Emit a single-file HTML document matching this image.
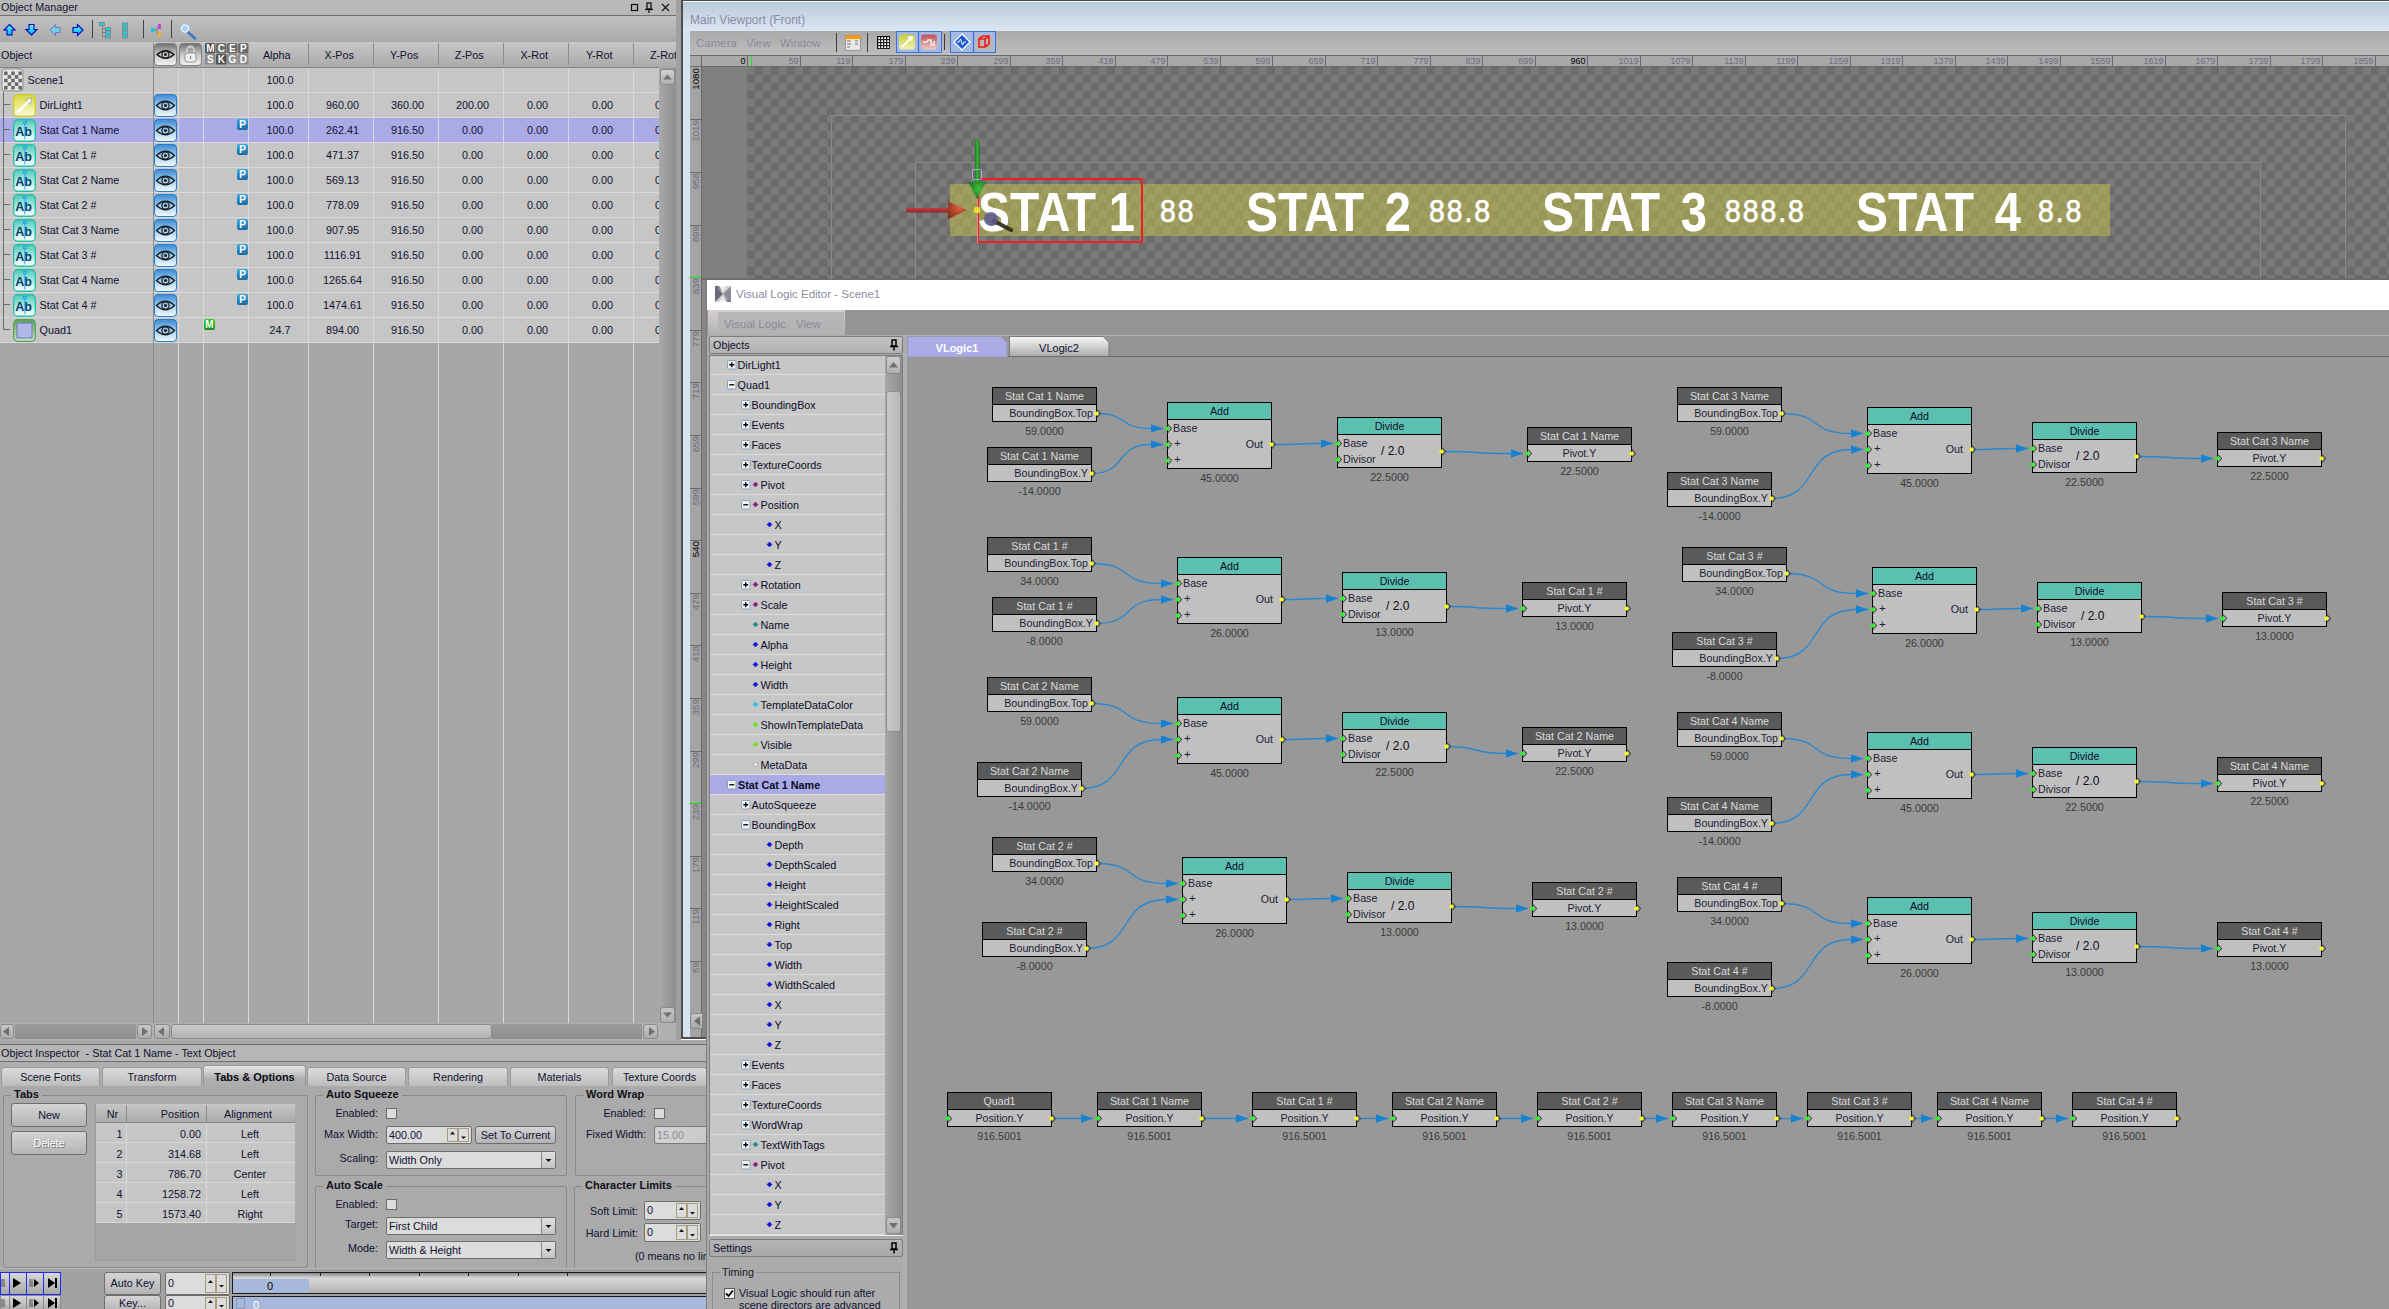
<!DOCTYPE html><html><head><meta charset="utf-8"><style>html,body{margin:0;padding:0;width:2389px;height:1309px;overflow:hidden;background:#a7a7a7;font-family:"Liberation Sans",sans-serif}</style></head><body><div style="position:relative;width:2389px;height:1309px;overflow:hidden"><div style="position:absolute;left:0px;top:0px;width:676px;height:1040px;background:#a7a7a7"></div><div style="position:absolute;left:0px;top:0px;width:676px;height:15px;background:#b8b8b8"></div><div style="position:absolute;left:0px;top:15px;width:676px;height:1px;background:#6f6f6f"></div><div style="position:absolute;left:1px;top:1.86px;font-size:10.8px;line-height:10.8px;color:#141432;font-weight:normal;white-space:pre;">Object Manager</div><svg style="position:absolute;left:628px;top:1px" width="46" height="13" viewBox="0 0 46 13"><rect x="3.5" y="3.5" width="6" height="6" fill="none" stroke="#111" stroke-width="1.2"/><rect x="19" y="2" width="4" height="6" fill="none" stroke="#111" stroke-width="1.3"/><line x1="17" y1="8.5" x2="25" y2="8.5" stroke="#111" stroke-width="1.3"/><line x1="21" y1="8.5" x2="21" y2="12" stroke="#111" stroke-width="1.3"/><path d="M34 3 L41 10 M41 3 L34 10" stroke="#111" stroke-width="1.1"/></svg><div style="position:absolute;left:0px;top:16px;width:676px;height:26px;background:linear-gradient(#c2c2c2,#a9a9a9)"></div><svg style="position:absolute;left:0px;top:16px" width="200" height="26" viewBox="0 0 200 26"><defs><linearGradient id="ab1" x1="0" y1="0" x2="0" y2="1"><stop offset="0" stop-color="#60f0ff"/><stop offset="1" stop-color="#00b8f8"/></linearGradient></defs><path d="M9.5 8.5 L15 14 L12 14 L12 19 L7 19 L7 14 L4 14 Z" fill="url(#ab1)" stroke="#0000c0" stroke-width="1.1"/><path d="M31.5 19 L37 13.5 L34 13.5 L34 8.5 L29 8.5 L29 13.5 L26 13.5 Z" fill="url(#ab1)" stroke="#0000c0" stroke-width="1.1"/><path d="M50 14 L55.5 8.5 L55.5 11.5 L60 11.5 L60 16.5 L55.5 16.5 L55.5 19.5 Z" fill="#70d0e0" stroke="#6a6ad0" stroke-width="0.9"/><path d="M83 14 L77.5 8.5 L77.5 11.5 L73 11.5 L73 16.5 L77.5 16.5 L77.5 19.5 Z" fill="url(#ab1)" stroke="#0000c0" stroke-width="1.1"/><line x1="92.5" y1="4" x2="92.5" y2="22" stroke="#444" stroke-width="1"/><path d="M102.5 8 V21 M102.5 13 H106 M102.5 16.5 H106 M102.5 20.5 H106" stroke="#777" stroke-width="0.8" fill="none"/><rect x="99.5" y="6.5" width="5" height="3" fill="#10d8f0" stroke="#808080" stroke-width="0.8"/><rect x="105.5" y="11.5" width="5" height="3" fill="#10d8f0" stroke="#808080" stroke-width="0.8"/><rect x="105.5" y="15.0" width="5" height="3" fill="#10d8f0" stroke="#808080" stroke-width="0.8"/><rect x="105.5" y="19.0" width="5" height="3" fill="#10d8f0" stroke="#808080" stroke-width="0.8"/><rect x="122.5" y="7.0" width="5" height="3" fill="#10d8f0" stroke="#808080" stroke-width="0.8"/><rect x="122.5" y="11.0" width="5" height="3" fill="#10d8f0" stroke="#808080" stroke-width="0.8"/><rect x="122.5" y="15.0" width="5" height="3" fill="#10d8f0" stroke="#808080" stroke-width="0.8"/><rect x="122.5" y="19.0" width="5" height="3" fill="#10d8f0" stroke="#808080" stroke-width="0.8"/><line x1="143.5" y1="4" x2="143.5" y2="22" stroke="#444" stroke-width="1"/><rect x="151" y="12" width="4" height="4" fill="#2ac0d8"/><rect x="158" y="8" width="3" height="5" fill="#c040e0"/><rect x="158" y="15.5" width="3" height="5" fill="#f0b020"/><path d="M155 14 H158 M157 10.5 V18" stroke="#777" stroke-width="0.8"/><line x1="171.5" y1="4" x2="171.5" y2="22" stroke="#444" stroke-width="1"/><line x1="188" y1="16" x2="195" y2="22.5" stroke="#3a78c8" stroke-width="2.4" stroke-linecap="round"/><circle cx="185" cy="12.5" r="3.6" fill="#a8d0ff" stroke="#e8f4ff" stroke-width="1.4"/></svg><div style="position:absolute;left:0px;top:42px;width:676px;height:25px;background:linear-gradient(#c7c7c7,#aaaaaa)"></div><div style="position:absolute;left:0px;top:67px;width:659px;height:1px;background:#858585"></div><div style="position:absolute;left:1px;top:49.86px;font-size:10.8px;line-height:10.8px;color:#101030;font-weight:normal;white-space:pre;">Object</div><svg style="position:absolute;left:154px;top:43px" width="96" height="24" viewBox="0 0 96 24"><defs><linearGradient id="gg" x1="0" y1="0" x2="0" y2="1"><stop offset="0" stop-color="#6e6e6e"/><stop offset="0.5" stop-color="#c8c8c8"/><stop offset="1" stop-color="#f2f2f2"/></linearGradient><linearGradient id="gl" x1="0" y1="0" x2="0" y2="1"><stop offset="0" stop-color="#5a5a5a"/><stop offset="1" stop-color="#d0d0d0"/></linearGradient><linearGradient id="gk" x1="0" y1="0" x2="0" y2="1"><stop offset="0" stop-color="#9a9a9a"/><stop offset="1" stop-color="#5a5a5a"/></linearGradient></defs><rect x="0.5" y="0.5" width="22" height="22" rx="3.5" fill="url(#gg)" stroke="#808080"/><path d="M3 11.5 Q11.5 4 20 11.5 Q11.5 19 3 11.5 Z" fill="none" stroke="#151515" stroke-width="1.4"/><circle cx="11.5" cy="11.5" r="3.5" fill="none" stroke="#222" stroke-width="1.3"/><circle cx="11.5" cy="11.5" r="1.5" fill="#222"/><rect x="25.5" y="0.5" width="22" height="22" rx="3.5" fill="url(#gg)" stroke="#808080"/><path d="M33 10 V7 A3.5 3.5 0 0 1 40 7 V10" fill="none" stroke="#f0f0f0" stroke-width="1.8"/><path d="M33 10 V7 A3.5 3.5 0 0 1 40 7 V10" fill="none" stroke="#777" stroke-width="0.5"/><rect x="31" y="10" width="11" height="9" rx="2.5" fill="#eeeeee" stroke="#808080" stroke-width="0.8"/><rect x="36" y="13" width="1.2" height="3" fill="#888"/><rect x="51" y="0" width="10.5" height="10.5" rx="1.5" fill="#4e4e4e"/><text x="56.3" y="9.2" text-anchor="middle" font-family="Liberation Sans" font-weight="bold" font-size="10" fill="#fff">M</text><rect x="62" y="0" width="10.5" height="10.5" rx="1.5" fill="#6a6a6a"/><text x="67.3" y="9.2" text-anchor="middle" font-family="Liberation Sans" font-weight="bold" font-size="10" fill="#fff">C</text><rect x="73" y="0" width="10.5" height="10.5" rx="1.5" fill="#6a6a6a"/><text x="78.3" y="9.2" text-anchor="middle" font-family="Liberation Sans" font-weight="bold" font-size="10" fill="#fff">E</text><rect x="84" y="0" width="10.5" height="10.5" rx="1.5" fill="#6a6a6a"/><text x="89.3" y="9.2" text-anchor="middle" font-family="Liberation Sans" font-weight="bold" font-size="10" fill="#fff">P</text><rect x="51" y="11" width="10.5" height="10.5" rx="1.5" fill="#8c8c8c"/><text x="56.3" y="20.2" text-anchor="middle" font-family="Liberation Sans" font-weight="bold" font-size="10" fill="#fff">S</text><rect x="62" y="11" width="10.5" height="10.5" rx="1.5" fill="#4e4e4e"/><text x="67.3" y="20.2" text-anchor="middle" font-family="Liberation Sans" font-weight="bold" font-size="10" fill="#fff">K</text><rect x="73" y="11" width="10.5" height="10.5" rx="1.5" fill="#8c8c8c"/><text x="78.3" y="20.2" text-anchor="middle" font-family="Liberation Sans" font-weight="bold" font-size="10" fill="#fff">G</text><rect x="84" y="11" width="10.5" height="10.5" rx="1.5" fill="#8c8c8c"/><text x="89.3" y="20.2" text-anchor="middle" font-family="Liberation Sans" font-weight="bold" font-size="10" fill="#fff">D</text></svg><div style="position:absolute;left:236.70px;top:49.86px;width:80px;text-align:center;font-size:10.8px;line-height:10.8px;color:#101030;font-weight:normal;white-space:pre;">Alpha</div><div style="position:absolute;left:299.20px;top:49.86px;width:80px;text-align:center;font-size:10.8px;line-height:10.8px;color:#101030;font-weight:normal;white-space:pre;">X-Pos</div><div style="position:absolute;left:364.20px;top:49.86px;width:80px;text-align:center;font-size:10.8px;line-height:10.8px;color:#101030;font-weight:normal;white-space:pre;">Y-Pos</div><div style="position:absolute;left:429.20px;top:49.86px;width:80px;text-align:center;font-size:10.8px;line-height:10.8px;color:#101030;font-weight:normal;white-space:pre;">Z-Pos</div><div style="position:absolute;left:494.20px;top:49.86px;width:80px;text-align:center;font-size:10.8px;line-height:10.8px;color:#101030;font-weight:normal;white-space:pre;">X-Rot</div><div style="position:absolute;left:559.20px;top:49.86px;width:80px;text-align:center;font-size:10.8px;line-height:10.8px;color:#101030;font-weight:normal;white-space:pre;">Y-Rot</div><div style="position:absolute;left:623.50px;top:49.86px;width:80px;text-align:center;font-size:10.8px;line-height:10.8px;color:#101030;font-weight:normal;white-space:pre;">Z-Rot</div><div style="position:absolute;left:308px;top:43px;width:1px;height:22px;background:#8c8c8c"></div><div style="position:absolute;left:373px;top:43px;width:1px;height:22px;background:#8c8c8c"></div><div style="position:absolute;left:438px;top:43px;width:1px;height:22px;background:#8c8c8c"></div><div style="position:absolute;left:503px;top:43px;width:1px;height:22px;background:#8c8c8c"></div><div style="position:absolute;left:568px;top:43px;width:1px;height:22px;background:#8c8c8c"></div><div style="position:absolute;left:633px;top:43px;width:1px;height:22px;background:#8c8c8c"></div><div style="position:absolute;left:0px;top:68px;width:659px;height:24px;background:#c6c6c6"></div><div style="position:absolute;left:0px;top:92px;width:659px;height:1px;background:#d9d9d9"></div><div style="position:absolute;left:0px;top:93px;width:659px;height:24px;background:#c6c6c6"></div><div style="position:absolute;left:0px;top:117px;width:659px;height:1px;background:#d9d9d9"></div><div style="position:absolute;left:0px;top:118px;width:659px;height:24px;background:#aaaae7"></div><div style="position:absolute;left:0px;top:142px;width:659px;height:1px;background:#d9d9d9"></div><div style="position:absolute;left:0px;top:143px;width:659px;height:24px;background:#c6c6c6"></div><div style="position:absolute;left:0px;top:167px;width:659px;height:1px;background:#d9d9d9"></div><div style="position:absolute;left:0px;top:168px;width:659px;height:24px;background:#c6c6c6"></div><div style="position:absolute;left:0px;top:192px;width:659px;height:1px;background:#d9d9d9"></div><div style="position:absolute;left:0px;top:193px;width:659px;height:24px;background:#c6c6c6"></div><div style="position:absolute;left:0px;top:217px;width:659px;height:1px;background:#d9d9d9"></div><div style="position:absolute;left:0px;top:218px;width:659px;height:24px;background:#c6c6c6"></div><div style="position:absolute;left:0px;top:242px;width:659px;height:1px;background:#d9d9d9"></div><div style="position:absolute;left:0px;top:243px;width:659px;height:24px;background:#c6c6c6"></div><div style="position:absolute;left:0px;top:267px;width:659px;height:1px;background:#d9d9d9"></div><div style="position:absolute;left:0px;top:268px;width:659px;height:24px;background:#c6c6c6"></div><div style="position:absolute;left:0px;top:292px;width:659px;height:1px;background:#d9d9d9"></div><div style="position:absolute;left:0px;top:293px;width:659px;height:24px;background:#c6c6c6"></div><div style="position:absolute;left:0px;top:317px;width:659px;height:1px;background:#d9d9d9"></div><div style="position:absolute;left:0px;top:318px;width:659px;height:24px;background:#c6c6c6"></div><div style="position:absolute;left:0px;top:342px;width:659px;height:1px;background:#d9d9d9"></div><div style="position:absolute;left:153px;top:43px;width:1px;height:980px;background:#8a8a8a"></div><div style="position:absolute;left:178px;top:68px;width:1px;height:955px;background:#d9d9d9"></div><div style="position:absolute;left:203px;top:68px;width:1px;height:955px;background:#d9d9d9"></div><div style="position:absolute;left:248px;top:68px;width:1px;height:955px;background:#d9d9d9"></div><div style="position:absolute;left:308px;top:68px;width:1px;height:955px;background:#d9d9d9"></div><div style="position:absolute;left:373px;top:68px;width:1px;height:955px;background:#d9d9d9"></div><div style="position:absolute;left:438px;top:68px;width:1px;height:955px;background:#d9d9d9"></div><div style="position:absolute;left:503px;top:68px;width:1px;height:955px;background:#d9d9d9"></div><div style="position:absolute;left:568px;top:68px;width:1px;height:955px;background:#d9d9d9"></div><div style="position:absolute;left:633px;top:68px;width:1px;height:955px;background:#d9d9d9"></div><div style="position:absolute;left:3px;top:92px;width:1px;height:238px;background:#6a6a6a"></div><div style="position:absolute;left:4px;top:104px;width:6px;height:1px;background:#6a6a6a"></div><div style="position:absolute;left:4px;top:129px;width:6px;height:1px;background:#6a6a6a"></div><div style="position:absolute;left:4px;top:154px;width:6px;height:1px;background:#6a6a6a"></div><div style="position:absolute;left:4px;top:179px;width:6px;height:1px;background:#6a6a6a"></div><div style="position:absolute;left:4px;top:204px;width:6px;height:1px;background:#6a6a6a"></div><div style="position:absolute;left:4px;top:229px;width:6px;height:1px;background:#6a6a6a"></div><div style="position:absolute;left:4px;top:254px;width:6px;height:1px;background:#6a6a6a"></div><div style="position:absolute;left:4px;top:279px;width:6px;height:1px;background:#6a6a6a"></div><div style="position:absolute;left:4px;top:304px;width:6px;height:1px;background:#6a6a6a"></div><div style="position:absolute;left:4px;top:329px;width:6px;height:1px;background:#6a6a6a"></div><svg style="position:absolute;left:1px;top:68px" width="23" height="24" viewBox="0 0 23 24"><rect x="1" y="1" width="21" height="22" rx="3" fill="#e8e8e8" stroke="#8a8a8a"/><rect x="3.0" y="3.5" width="3.6" height="3.6" fill="#6a6a6a"/><rect x="3.0" y="10.7" width="3.6" height="3.6" fill="#6a6a6a"/><rect x="3.0" y="17.9" width="3.6" height="3.6" fill="#6a6a6a"/><rect x="6.6" y="7.1" width="3.6" height="3.6" fill="#6a6a6a"/><rect x="6.6" y="14.3" width="3.6" height="3.6" fill="#6a6a6a"/><rect x="10.2" y="3.5" width="3.6" height="3.6" fill="#6a6a6a"/><rect x="10.2" y="10.7" width="3.6" height="3.6" fill="#6a6a6a"/><rect x="10.2" y="17.9" width="3.6" height="3.6" fill="#6a6a6a"/><rect x="13.8" y="7.1" width="3.6" height="3.6" fill="#6a6a6a"/><rect x="13.8" y="14.3" width="3.6" height="3.6" fill="#6a6a6a"/><rect x="17.4" y="3.5" width="3.6" height="3.6" fill="#6a6a6a"/><rect x="17.4" y="10.7" width="3.6" height="3.6" fill="#6a6a6a"/><rect x="17.4" y="17.9" width="3.6" height="3.6" fill="#6a6a6a"/></svg><div style="position:absolute;left:27.5px;top:75.36px;font-size:10.8px;line-height:10.8px;color:#101030;font-weight:normal;white-space:pre;">Scene1</div><div style="position:absolute;left:240.00px;top:75.36px;width:80px;text-align:center;font-size:10.8px;line-height:10.8px;color:#101030;font-weight:normal;white-space:pre;">100.0</div><svg style="position:absolute;left:13px;top:94px" width="23" height="23" viewBox="0 0 23 23"><defs><linearGradient id="lg" x1="0" y1="0" x2="0" y2="1"><stop offset="0" stop-color="#d9d93a"/><stop offset="1" stop-color="#fbfbe0"/></linearGradient></defs><rect x="0.7" y="0.7" width="21.6" height="21.6" rx="4" fill="url(#lg)" stroke="#cfd02a" stroke-width="1.4"/><path d="M4 19 L15 8 L12.5 5.5 L19 4 L17.5 10.5 L15 8" fill="#fff" stroke="#999" stroke-width="0.8"/><line x1="4" y1="19" x2="15" y2="8" stroke="#fff" stroke-width="2.6"/></svg><div style="position:absolute;left:39.5px;top:100.36px;font-size:10.8px;line-height:10.8px;color:#101030;font-weight:normal;white-space:pre;">DirLight1</div><svg style="position:absolute;left:154px;top:94px" width="23" height="23" viewBox="0 0 23 23"><defs><linearGradient id="gb" x1="0" y1="0" x2="0" y2="1"><stop offset="0" stop-color="#3a8ad2"/><stop offset="0.55" stop-color="#a8d4f4"/><stop offset="1" stop-color="#f4faff"/></linearGradient></defs><rect x="0.5" y="0.5" width="22" height="22" rx="3.5" fill="url(#gb)" stroke="#2b7cc9"/><path d="M2.5 11.5 Q11.5 3 20.5 11.5 Q11.5 20 2.5 11.5 Z" fill="none" stroke="#1a1a1a" stroke-width="1.4"/><circle cx="11.5" cy="11.5" r="3.6" fill="none" stroke="#222" stroke-width="1.3"/><circle cx="11.5" cy="11.5" r="1.6" fill="#222"/></svg><div style="position:absolute;left:240.00px;top:100.36px;width:80px;text-align:center;font-size:10.8px;line-height:10.8px;color:#101030;font-weight:normal;white-space:pre;">100.0</div><div style="position:absolute;left:302.50px;top:100.36px;width:80px;text-align:center;font-size:10.8px;line-height:10.8px;color:#101030;font-weight:normal;white-space:pre;">960.00</div><div style="position:absolute;left:367.50px;top:100.36px;width:80px;text-align:center;font-size:10.8px;line-height:10.8px;color:#101030;font-weight:normal;white-space:pre;">360.00</div><div style="position:absolute;left:432.50px;top:100.36px;width:80px;text-align:center;font-size:10.8px;line-height:10.8px;color:#101030;font-weight:normal;white-space:pre;">200.00</div><div style="position:absolute;left:497.50px;top:100.36px;width:80px;text-align:center;font-size:10.8px;line-height:10.8px;color:#101030;font-weight:normal;white-space:pre;">0.00</div><div style="position:absolute;left:562.50px;top:100.36px;width:80px;text-align:center;font-size:10.8px;line-height:10.8px;color:#101030;font-weight:normal;white-space:pre;">0.00</div><div style="position:absolute;left:625.50px;top:100.36px;width:80px;text-align:center;font-size:10.8px;line-height:10.8px;color:#101030;font-weight:normal;white-space:pre;">0.00</div><svg style="position:absolute;left:13px;top:119px" width="23" height="23" viewBox="0 0 23 23"><defs><linearGradient id="gt13119" x1="0" y1="0" x2="0" y2="1"><stop offset="0" stop-color="#4cc9b8"/><stop offset="0.6" stop-color="#bdeee6"/><stop offset="1" stop-color="#ffffff"/></linearGradient></defs><rect x="0.7" y="0.7" width="21.6" height="21.6" rx="4" fill="url(#gt13119)" stroke="#22c2aa" stroke-width="1.4"/><text x="2.3" y="17" font-family="Liberation Sans" font-weight="bold" font-size="12.5" fill="#0b3e66">Ab</text><rect x="10.3" y="2.5" width="3" height="2" fill="none" stroke="#1aa0ff" stroke-width="0.9"/><line x1="11.8" y1="4.5" x2="11.8" y2="20.5" stroke="#1aa0ff" stroke-width="0.9"/></svg><div style="position:absolute;left:39.5px;top:125.36px;font-size:10.8px;line-height:10.8px;color:#101030;font-weight:normal;white-space:pre;">Stat Cat 1 Name</div><svg style="position:absolute;left:154px;top:119px" width="23" height="23" viewBox="0 0 23 23"><defs><linearGradient id="gb" x1="0" y1="0" x2="0" y2="1"><stop offset="0" stop-color="#3a8ad2"/><stop offset="0.55" stop-color="#a8d4f4"/><stop offset="1" stop-color="#f4faff"/></linearGradient></defs><rect x="0.5" y="0.5" width="22" height="22" rx="3.5" fill="url(#gb)" stroke="#2b7cc9"/><path d="M2.5 11.5 Q11.5 3 20.5 11.5 Q11.5 20 2.5 11.5 Z" fill="none" stroke="#1a1a1a" stroke-width="1.4"/><circle cx="11.5" cy="11.5" r="3.6" fill="none" stroke="#222" stroke-width="1.3"/><circle cx="11.5" cy="11.5" r="1.6" fill="#222"/></svg><svg style="position:absolute;left:237px;top:119px" width="11" height="11" viewBox="0 0 11 11"><defs><linearGradient id="bd237119" x1="0" y1="0" x2="0" y2="1"><stop offset="0" stop-color="#3aa8e0"/><stop offset="1" stop-color="#1a6aa0"/></linearGradient></defs><rect x="0" y="0" width="11" height="11" rx="2" fill="url(#bd237119)"/><text x="5.5" y="9.2" text-anchor="middle" font-family="Liberation Sans" font-weight="bold" font-size="10" fill="#fff">P</text></svg><div style="position:absolute;left:240.00px;top:125.36px;width:80px;text-align:center;font-size:10.8px;line-height:10.8px;color:#101030;font-weight:normal;white-space:pre;">100.0</div><div style="position:absolute;left:302.50px;top:125.36px;width:80px;text-align:center;font-size:10.8px;line-height:10.8px;color:#101030;font-weight:normal;white-space:pre;">262.41</div><div style="position:absolute;left:367.50px;top:125.36px;width:80px;text-align:center;font-size:10.8px;line-height:10.8px;color:#101030;font-weight:normal;white-space:pre;">916.50</div><div style="position:absolute;left:432.50px;top:125.36px;width:80px;text-align:center;font-size:10.8px;line-height:10.8px;color:#101030;font-weight:normal;white-space:pre;">0.00</div><div style="position:absolute;left:497.50px;top:125.36px;width:80px;text-align:center;font-size:10.8px;line-height:10.8px;color:#101030;font-weight:normal;white-space:pre;">0.00</div><div style="position:absolute;left:562.50px;top:125.36px;width:80px;text-align:center;font-size:10.8px;line-height:10.8px;color:#101030;font-weight:normal;white-space:pre;">0.00</div><div style="position:absolute;left:625.50px;top:125.36px;width:80px;text-align:center;font-size:10.8px;line-height:10.8px;color:#101030;font-weight:normal;white-space:pre;">0.00</div><svg style="position:absolute;left:13px;top:144px" width="23" height="23" viewBox="0 0 23 23"><defs><linearGradient id="gt13144" x1="0" y1="0" x2="0" y2="1"><stop offset="0" stop-color="#4cc9b8"/><stop offset="0.6" stop-color="#bdeee6"/><stop offset="1" stop-color="#ffffff"/></linearGradient></defs><rect x="0.7" y="0.7" width="21.6" height="21.6" rx="4" fill="url(#gt13144)" stroke="#22c2aa" stroke-width="1.4"/><text x="2.3" y="17" font-family="Liberation Sans" font-weight="bold" font-size="12.5" fill="#0b3e66">Ab</text><rect x="10.3" y="2.5" width="3" height="2" fill="none" stroke="#1aa0ff" stroke-width="0.9"/><line x1="11.8" y1="4.5" x2="11.8" y2="20.5" stroke="#1aa0ff" stroke-width="0.9"/></svg><div style="position:absolute;left:39.5px;top:150.36px;font-size:10.8px;line-height:10.8px;color:#101030;font-weight:normal;white-space:pre;">Stat Cat 1 #</div><svg style="position:absolute;left:154px;top:144px" width="23" height="23" viewBox="0 0 23 23"><defs><linearGradient id="gb" x1="0" y1="0" x2="0" y2="1"><stop offset="0" stop-color="#3a8ad2"/><stop offset="0.55" stop-color="#a8d4f4"/><stop offset="1" stop-color="#f4faff"/></linearGradient></defs><rect x="0.5" y="0.5" width="22" height="22" rx="3.5" fill="url(#gb)" stroke="#2b7cc9"/><path d="M2.5 11.5 Q11.5 3 20.5 11.5 Q11.5 20 2.5 11.5 Z" fill="none" stroke="#1a1a1a" stroke-width="1.4"/><circle cx="11.5" cy="11.5" r="3.6" fill="none" stroke="#222" stroke-width="1.3"/><circle cx="11.5" cy="11.5" r="1.6" fill="#222"/></svg><svg style="position:absolute;left:237px;top:144px" width="11" height="11" viewBox="0 0 11 11"><defs><linearGradient id="bd237144" x1="0" y1="0" x2="0" y2="1"><stop offset="0" stop-color="#3aa8e0"/><stop offset="1" stop-color="#1a6aa0"/></linearGradient></defs><rect x="0" y="0" width="11" height="11" rx="2" fill="url(#bd237144)"/><text x="5.5" y="9.2" text-anchor="middle" font-family="Liberation Sans" font-weight="bold" font-size="10" fill="#fff">P</text></svg><div style="position:absolute;left:240.00px;top:150.36px;width:80px;text-align:center;font-size:10.8px;line-height:10.8px;color:#101030;font-weight:normal;white-space:pre;">100.0</div><div style="position:absolute;left:302.50px;top:150.36px;width:80px;text-align:center;font-size:10.8px;line-height:10.8px;color:#101030;font-weight:normal;white-space:pre;">471.37</div><div style="position:absolute;left:367.50px;top:150.36px;width:80px;text-align:center;font-size:10.8px;line-height:10.8px;color:#101030;font-weight:normal;white-space:pre;">916.50</div><div style="position:absolute;left:432.50px;top:150.36px;width:80px;text-align:center;font-size:10.8px;line-height:10.8px;color:#101030;font-weight:normal;white-space:pre;">0.00</div><div style="position:absolute;left:497.50px;top:150.36px;width:80px;text-align:center;font-size:10.8px;line-height:10.8px;color:#101030;font-weight:normal;white-space:pre;">0.00</div><div style="position:absolute;left:562.50px;top:150.36px;width:80px;text-align:center;font-size:10.8px;line-height:10.8px;color:#101030;font-weight:normal;white-space:pre;">0.00</div><div style="position:absolute;left:625.50px;top:150.36px;width:80px;text-align:center;font-size:10.8px;line-height:10.8px;color:#101030;font-weight:normal;white-space:pre;">0.00</div><svg style="position:absolute;left:13px;top:169px" width="23" height="23" viewBox="0 0 23 23"><defs><linearGradient id="gt13169" x1="0" y1="0" x2="0" y2="1"><stop offset="0" stop-color="#4cc9b8"/><stop offset="0.6" stop-color="#bdeee6"/><stop offset="1" stop-color="#ffffff"/></linearGradient></defs><rect x="0.7" y="0.7" width="21.6" height="21.6" rx="4" fill="url(#gt13169)" stroke="#22c2aa" stroke-width="1.4"/><text x="2.3" y="17" font-family="Liberation Sans" font-weight="bold" font-size="12.5" fill="#0b3e66">Ab</text><rect x="10.3" y="2.5" width="3" height="2" fill="none" stroke="#1aa0ff" stroke-width="0.9"/><line x1="11.8" y1="4.5" x2="11.8" y2="20.5" stroke="#1aa0ff" stroke-width="0.9"/></svg><div style="position:absolute;left:39.5px;top:175.36px;font-size:10.8px;line-height:10.8px;color:#101030;font-weight:normal;white-space:pre;">Stat Cat 2 Name</div><svg style="position:absolute;left:154px;top:169px" width="23" height="23" viewBox="0 0 23 23"><defs><linearGradient id="gb" x1="0" y1="0" x2="0" y2="1"><stop offset="0" stop-color="#3a8ad2"/><stop offset="0.55" stop-color="#a8d4f4"/><stop offset="1" stop-color="#f4faff"/></linearGradient></defs><rect x="0.5" y="0.5" width="22" height="22" rx="3.5" fill="url(#gb)" stroke="#2b7cc9"/><path d="M2.5 11.5 Q11.5 3 20.5 11.5 Q11.5 20 2.5 11.5 Z" fill="none" stroke="#1a1a1a" stroke-width="1.4"/><circle cx="11.5" cy="11.5" r="3.6" fill="none" stroke="#222" stroke-width="1.3"/><circle cx="11.5" cy="11.5" r="1.6" fill="#222"/></svg><svg style="position:absolute;left:237px;top:169px" width="11" height="11" viewBox="0 0 11 11"><defs><linearGradient id="bd237169" x1="0" y1="0" x2="0" y2="1"><stop offset="0" stop-color="#3aa8e0"/><stop offset="1" stop-color="#1a6aa0"/></linearGradient></defs><rect x="0" y="0" width="11" height="11" rx="2" fill="url(#bd237169)"/><text x="5.5" y="9.2" text-anchor="middle" font-family="Liberation Sans" font-weight="bold" font-size="10" fill="#fff">P</text></svg><div style="position:absolute;left:240.00px;top:175.36px;width:80px;text-align:center;font-size:10.8px;line-height:10.8px;color:#101030;font-weight:normal;white-space:pre;">100.0</div><div style="position:absolute;left:302.50px;top:175.36px;width:80px;text-align:center;font-size:10.8px;line-height:10.8px;color:#101030;font-weight:normal;white-space:pre;">569.13</div><div style="position:absolute;left:367.50px;top:175.36px;width:80px;text-align:center;font-size:10.8px;line-height:10.8px;color:#101030;font-weight:normal;white-space:pre;">916.50</div><div style="position:absolute;left:432.50px;top:175.36px;width:80px;text-align:center;font-size:10.8px;line-height:10.8px;color:#101030;font-weight:normal;white-space:pre;">0.00</div><div style="position:absolute;left:497.50px;top:175.36px;width:80px;text-align:center;font-size:10.8px;line-height:10.8px;color:#101030;font-weight:normal;white-space:pre;">0.00</div><div style="position:absolute;left:562.50px;top:175.36px;width:80px;text-align:center;font-size:10.8px;line-height:10.8px;color:#101030;font-weight:normal;white-space:pre;">0.00</div><div style="position:absolute;left:625.50px;top:175.36px;width:80px;text-align:center;font-size:10.8px;line-height:10.8px;color:#101030;font-weight:normal;white-space:pre;">0.00</div><svg style="position:absolute;left:13px;top:194px" width="23" height="23" viewBox="0 0 23 23"><defs><linearGradient id="gt13194" x1="0" y1="0" x2="0" y2="1"><stop offset="0" stop-color="#4cc9b8"/><stop offset="0.6" stop-color="#bdeee6"/><stop offset="1" stop-color="#ffffff"/></linearGradient></defs><rect x="0.7" y="0.7" width="21.6" height="21.6" rx="4" fill="url(#gt13194)" stroke="#22c2aa" stroke-width="1.4"/><text x="2.3" y="17" font-family="Liberation Sans" font-weight="bold" font-size="12.5" fill="#0b3e66">Ab</text><rect x="10.3" y="2.5" width="3" height="2" fill="none" stroke="#1aa0ff" stroke-width="0.9"/><line x1="11.8" y1="4.5" x2="11.8" y2="20.5" stroke="#1aa0ff" stroke-width="0.9"/></svg><div style="position:absolute;left:39.5px;top:200.36px;font-size:10.8px;line-height:10.8px;color:#101030;font-weight:normal;white-space:pre;">Stat Cat 2 #</div><svg style="position:absolute;left:154px;top:194px" width="23" height="23" viewBox="0 0 23 23"><defs><linearGradient id="gb" x1="0" y1="0" x2="0" y2="1"><stop offset="0" stop-color="#3a8ad2"/><stop offset="0.55" stop-color="#a8d4f4"/><stop offset="1" stop-color="#f4faff"/></linearGradient></defs><rect x="0.5" y="0.5" width="22" height="22" rx="3.5" fill="url(#gb)" stroke="#2b7cc9"/><path d="M2.5 11.5 Q11.5 3 20.5 11.5 Q11.5 20 2.5 11.5 Z" fill="none" stroke="#1a1a1a" stroke-width="1.4"/><circle cx="11.5" cy="11.5" r="3.6" fill="none" stroke="#222" stroke-width="1.3"/><circle cx="11.5" cy="11.5" r="1.6" fill="#222"/></svg><svg style="position:absolute;left:237px;top:194px" width="11" height="11" viewBox="0 0 11 11"><defs><linearGradient id="bd237194" x1="0" y1="0" x2="0" y2="1"><stop offset="0" stop-color="#3aa8e0"/><stop offset="1" stop-color="#1a6aa0"/></linearGradient></defs><rect x="0" y="0" width="11" height="11" rx="2" fill="url(#bd237194)"/><text x="5.5" y="9.2" text-anchor="middle" font-family="Liberation Sans" font-weight="bold" font-size="10" fill="#fff">P</text></svg><div style="position:absolute;left:240.00px;top:200.36px;width:80px;text-align:center;font-size:10.8px;line-height:10.8px;color:#101030;font-weight:normal;white-space:pre;">100.0</div><div style="position:absolute;left:302.50px;top:200.36px;width:80px;text-align:center;font-size:10.8px;line-height:10.8px;color:#101030;font-weight:normal;white-space:pre;">778.09</div><div style="position:absolute;left:367.50px;top:200.36px;width:80px;text-align:center;font-size:10.8px;line-height:10.8px;color:#101030;font-weight:normal;white-space:pre;">916.50</div><div style="position:absolute;left:432.50px;top:200.36px;width:80px;text-align:center;font-size:10.8px;line-height:10.8px;color:#101030;font-weight:normal;white-space:pre;">0.00</div><div style="position:absolute;left:497.50px;top:200.36px;width:80px;text-align:center;font-size:10.8px;line-height:10.8px;color:#101030;font-weight:normal;white-space:pre;">0.00</div><div style="position:absolute;left:562.50px;top:200.36px;width:80px;text-align:center;font-size:10.8px;line-height:10.8px;color:#101030;font-weight:normal;white-space:pre;">0.00</div><div style="position:absolute;left:625.50px;top:200.36px;width:80px;text-align:center;font-size:10.8px;line-height:10.8px;color:#101030;font-weight:normal;white-space:pre;">0.00</div><svg style="position:absolute;left:13px;top:219px" width="23" height="23" viewBox="0 0 23 23"><defs><linearGradient id="gt13219" x1="0" y1="0" x2="0" y2="1"><stop offset="0" stop-color="#4cc9b8"/><stop offset="0.6" stop-color="#bdeee6"/><stop offset="1" stop-color="#ffffff"/></linearGradient></defs><rect x="0.7" y="0.7" width="21.6" height="21.6" rx="4" fill="url(#gt13219)" stroke="#22c2aa" stroke-width="1.4"/><text x="2.3" y="17" font-family="Liberation Sans" font-weight="bold" font-size="12.5" fill="#0b3e66">Ab</text><rect x="10.3" y="2.5" width="3" height="2" fill="none" stroke="#1aa0ff" stroke-width="0.9"/><line x1="11.8" y1="4.5" x2="11.8" y2="20.5" stroke="#1aa0ff" stroke-width="0.9"/></svg><div style="position:absolute;left:39.5px;top:225.36px;font-size:10.8px;line-height:10.8px;color:#101030;font-weight:normal;white-space:pre;">Stat Cat 3 Name</div><svg style="position:absolute;left:154px;top:219px" width="23" height="23" viewBox="0 0 23 23"><defs><linearGradient id="gb" x1="0" y1="0" x2="0" y2="1"><stop offset="0" stop-color="#3a8ad2"/><stop offset="0.55" stop-color="#a8d4f4"/><stop offset="1" stop-color="#f4faff"/></linearGradient></defs><rect x="0.5" y="0.5" width="22" height="22" rx="3.5" fill="url(#gb)" stroke="#2b7cc9"/><path d="M2.5 11.5 Q11.5 3 20.5 11.5 Q11.5 20 2.5 11.5 Z" fill="none" stroke="#1a1a1a" stroke-width="1.4"/><circle cx="11.5" cy="11.5" r="3.6" fill="none" stroke="#222" stroke-width="1.3"/><circle cx="11.5" cy="11.5" r="1.6" fill="#222"/></svg><svg style="position:absolute;left:237px;top:219px" width="11" height="11" viewBox="0 0 11 11"><defs><linearGradient id="bd237219" x1="0" y1="0" x2="0" y2="1"><stop offset="0" stop-color="#3aa8e0"/><stop offset="1" stop-color="#1a6aa0"/></linearGradient></defs><rect x="0" y="0" width="11" height="11" rx="2" fill="url(#bd237219)"/><text x="5.5" y="9.2" text-anchor="middle" font-family="Liberation Sans" font-weight="bold" font-size="10" fill="#fff">P</text></svg><div style="position:absolute;left:240.00px;top:225.36px;width:80px;text-align:center;font-size:10.8px;line-height:10.8px;color:#101030;font-weight:normal;white-space:pre;">100.0</div><div style="position:absolute;left:302.50px;top:225.36px;width:80px;text-align:center;font-size:10.8px;line-height:10.8px;color:#101030;font-weight:normal;white-space:pre;">907.95</div><div style="position:absolute;left:367.50px;top:225.36px;width:80px;text-align:center;font-size:10.8px;line-height:10.8px;color:#101030;font-weight:normal;white-space:pre;">916.50</div><div style="position:absolute;left:432.50px;top:225.36px;width:80px;text-align:center;font-size:10.8px;line-height:10.8px;color:#101030;font-weight:normal;white-space:pre;">0.00</div><div style="position:absolute;left:497.50px;top:225.36px;width:80px;text-align:center;font-size:10.8px;line-height:10.8px;color:#101030;font-weight:normal;white-space:pre;">0.00</div><div style="position:absolute;left:562.50px;top:225.36px;width:80px;text-align:center;font-size:10.8px;line-height:10.8px;color:#101030;font-weight:normal;white-space:pre;">0.00</div><div style="position:absolute;left:625.50px;top:225.36px;width:80px;text-align:center;font-size:10.8px;line-height:10.8px;color:#101030;font-weight:normal;white-space:pre;">0.00</div><svg style="position:absolute;left:13px;top:244px" width="23" height="23" viewBox="0 0 23 23"><defs><linearGradient id="gt13244" x1="0" y1="0" x2="0" y2="1"><stop offset="0" stop-color="#4cc9b8"/><stop offset="0.6" stop-color="#bdeee6"/><stop offset="1" stop-color="#ffffff"/></linearGradient></defs><rect x="0.7" y="0.7" width="21.6" height="21.6" rx="4" fill="url(#gt13244)" stroke="#22c2aa" stroke-width="1.4"/><text x="2.3" y="17" font-family="Liberation Sans" font-weight="bold" font-size="12.5" fill="#0b3e66">Ab</text><rect x="10.3" y="2.5" width="3" height="2" fill="none" stroke="#1aa0ff" stroke-width="0.9"/><line x1="11.8" y1="4.5" x2="11.8" y2="20.5" stroke="#1aa0ff" stroke-width="0.9"/></svg><div style="position:absolute;left:39.5px;top:250.36px;font-size:10.8px;line-height:10.8px;color:#101030;font-weight:normal;white-space:pre;">Stat Cat 3 #</div><svg style="position:absolute;left:154px;top:244px" width="23" height="23" viewBox="0 0 23 23"><defs><linearGradient id="gb" x1="0" y1="0" x2="0" y2="1"><stop offset="0" stop-color="#3a8ad2"/><stop offset="0.55" stop-color="#a8d4f4"/><stop offset="1" stop-color="#f4faff"/></linearGradient></defs><rect x="0.5" y="0.5" width="22" height="22" rx="3.5" fill="url(#gb)" stroke="#2b7cc9"/><path d="M2.5 11.5 Q11.5 3 20.5 11.5 Q11.5 20 2.5 11.5 Z" fill="none" stroke="#1a1a1a" stroke-width="1.4"/><circle cx="11.5" cy="11.5" r="3.6" fill="none" stroke="#222" stroke-width="1.3"/><circle cx="11.5" cy="11.5" r="1.6" fill="#222"/></svg><svg style="position:absolute;left:237px;top:244px" width="11" height="11" viewBox="0 0 11 11"><defs><linearGradient id="bd237244" x1="0" y1="0" x2="0" y2="1"><stop offset="0" stop-color="#3aa8e0"/><stop offset="1" stop-color="#1a6aa0"/></linearGradient></defs><rect x="0" y="0" width="11" height="11" rx="2" fill="url(#bd237244)"/><text x="5.5" y="9.2" text-anchor="middle" font-family="Liberation Sans" font-weight="bold" font-size="10" fill="#fff">P</text></svg><div style="position:absolute;left:240.00px;top:250.36px;width:80px;text-align:center;font-size:10.8px;line-height:10.8px;color:#101030;font-weight:normal;white-space:pre;">100.0</div><div style="position:absolute;left:302.50px;top:250.36px;width:80px;text-align:center;font-size:10.8px;line-height:10.8px;color:#101030;font-weight:normal;white-space:pre;">1116.91</div><div style="position:absolute;left:367.50px;top:250.36px;width:80px;text-align:center;font-size:10.8px;line-height:10.8px;color:#101030;font-weight:normal;white-space:pre;">916.50</div><div style="position:absolute;left:432.50px;top:250.36px;width:80px;text-align:center;font-size:10.8px;line-height:10.8px;color:#101030;font-weight:normal;white-space:pre;">0.00</div><div style="position:absolute;left:497.50px;top:250.36px;width:80px;text-align:center;font-size:10.8px;line-height:10.8px;color:#101030;font-weight:normal;white-space:pre;">0.00</div><div style="position:absolute;left:562.50px;top:250.36px;width:80px;text-align:center;font-size:10.8px;line-height:10.8px;color:#101030;font-weight:normal;white-space:pre;">0.00</div><div style="position:absolute;left:625.50px;top:250.36px;width:80px;text-align:center;font-size:10.8px;line-height:10.8px;color:#101030;font-weight:normal;white-space:pre;">0.00</div><svg style="position:absolute;left:13px;top:269px" width="23" height="23" viewBox="0 0 23 23"><defs><linearGradient id="gt13269" x1="0" y1="0" x2="0" y2="1"><stop offset="0" stop-color="#4cc9b8"/><stop offset="0.6" stop-color="#bdeee6"/><stop offset="1" stop-color="#ffffff"/></linearGradient></defs><rect x="0.7" y="0.7" width="21.6" height="21.6" rx="4" fill="url(#gt13269)" stroke="#22c2aa" stroke-width="1.4"/><text x="2.3" y="17" font-family="Liberation Sans" font-weight="bold" font-size="12.5" fill="#0b3e66">Ab</text><rect x="10.3" y="2.5" width="3" height="2" fill="none" stroke="#1aa0ff" stroke-width="0.9"/><line x1="11.8" y1="4.5" x2="11.8" y2="20.5" stroke="#1aa0ff" stroke-width="0.9"/></svg><div style="position:absolute;left:39.5px;top:275.36px;font-size:10.8px;line-height:10.8px;color:#101030;font-weight:normal;white-space:pre;">Stat Cat 4 Name</div><svg style="position:absolute;left:154px;top:269px" width="23" height="23" viewBox="0 0 23 23"><defs><linearGradient id="gb" x1="0" y1="0" x2="0" y2="1"><stop offset="0" stop-color="#3a8ad2"/><stop offset="0.55" stop-color="#a8d4f4"/><stop offset="1" stop-color="#f4faff"/></linearGradient></defs><rect x="0.5" y="0.5" width="22" height="22" rx="3.5" fill="url(#gb)" stroke="#2b7cc9"/><path d="M2.5 11.5 Q11.5 3 20.5 11.5 Q11.5 20 2.5 11.5 Z" fill="none" stroke="#1a1a1a" stroke-width="1.4"/><circle cx="11.5" cy="11.5" r="3.6" fill="none" stroke="#222" stroke-width="1.3"/><circle cx="11.5" cy="11.5" r="1.6" fill="#222"/></svg><svg style="position:absolute;left:237px;top:269px" width="11" height="11" viewBox="0 0 11 11"><defs><linearGradient id="bd237269" x1="0" y1="0" x2="0" y2="1"><stop offset="0" stop-color="#3aa8e0"/><stop offset="1" stop-color="#1a6aa0"/></linearGradient></defs><rect x="0" y="0" width="11" height="11" rx="2" fill="url(#bd237269)"/><text x="5.5" y="9.2" text-anchor="middle" font-family="Liberation Sans" font-weight="bold" font-size="10" fill="#fff">P</text></svg><div style="position:absolute;left:240.00px;top:275.36px;width:80px;text-align:center;font-size:10.8px;line-height:10.8px;color:#101030;font-weight:normal;white-space:pre;">100.0</div><div style="position:absolute;left:302.50px;top:275.36px;width:80px;text-align:center;font-size:10.8px;line-height:10.8px;color:#101030;font-weight:normal;white-space:pre;">1265.64</div><div style="position:absolute;left:367.50px;top:275.36px;width:80px;text-align:center;font-size:10.8px;line-height:10.8px;color:#101030;font-weight:normal;white-space:pre;">916.50</div><div style="position:absolute;left:432.50px;top:275.36px;width:80px;text-align:center;font-size:10.8px;line-height:10.8px;color:#101030;font-weight:normal;white-space:pre;">0.00</div><div style="position:absolute;left:497.50px;top:275.36px;width:80px;text-align:center;font-size:10.8px;line-height:10.8px;color:#101030;font-weight:normal;white-space:pre;">0.00</div><div style="position:absolute;left:562.50px;top:275.36px;width:80px;text-align:center;font-size:10.8px;line-height:10.8px;color:#101030;font-weight:normal;white-space:pre;">0.00</div><div style="position:absolute;left:625.50px;top:275.36px;width:80px;text-align:center;font-size:10.8px;line-height:10.8px;color:#101030;font-weight:normal;white-space:pre;">0.00</div><svg style="position:absolute;left:13px;top:294px" width="23" height="23" viewBox="0 0 23 23"><defs><linearGradient id="gt13294" x1="0" y1="0" x2="0" y2="1"><stop offset="0" stop-color="#4cc9b8"/><stop offset="0.6" stop-color="#bdeee6"/><stop offset="1" stop-color="#ffffff"/></linearGradient></defs><rect x="0.7" y="0.7" width="21.6" height="21.6" rx="4" fill="url(#gt13294)" stroke="#22c2aa" stroke-width="1.4"/><text x="2.3" y="17" font-family="Liberation Sans" font-weight="bold" font-size="12.5" fill="#0b3e66">Ab</text><rect x="10.3" y="2.5" width="3" height="2" fill="none" stroke="#1aa0ff" stroke-width="0.9"/><line x1="11.8" y1="4.5" x2="11.8" y2="20.5" stroke="#1aa0ff" stroke-width="0.9"/></svg><div style="position:absolute;left:39.5px;top:300.36px;font-size:10.8px;line-height:10.8px;color:#101030;font-weight:normal;white-space:pre;">Stat Cat 4 #</div><svg style="position:absolute;left:154px;top:294px" width="23" height="23" viewBox="0 0 23 23"><defs><linearGradient id="gb" x1="0" y1="0" x2="0" y2="1"><stop offset="0" stop-color="#3a8ad2"/><stop offset="0.55" stop-color="#a8d4f4"/><stop offset="1" stop-color="#f4faff"/></linearGradient></defs><rect x="0.5" y="0.5" width="22" height="22" rx="3.5" fill="url(#gb)" stroke="#2b7cc9"/><path d="M2.5 11.5 Q11.5 3 20.5 11.5 Q11.5 20 2.5 11.5 Z" fill="none" stroke="#1a1a1a" stroke-width="1.4"/><circle cx="11.5" cy="11.5" r="3.6" fill="none" stroke="#222" stroke-width="1.3"/><circle cx="11.5" cy="11.5" r="1.6" fill="#222"/></svg><svg style="position:absolute;left:237px;top:294px" width="11" height="11" viewBox="0 0 11 11"><defs><linearGradient id="bd237294" x1="0" y1="0" x2="0" y2="1"><stop offset="0" stop-color="#3aa8e0"/><stop offset="1" stop-color="#1a6aa0"/></linearGradient></defs><rect x="0" y="0" width="11" height="11" rx="2" fill="url(#bd237294)"/><text x="5.5" y="9.2" text-anchor="middle" font-family="Liberation Sans" font-weight="bold" font-size="10" fill="#fff">P</text></svg><div style="position:absolute;left:240.00px;top:300.36px;width:80px;text-align:center;font-size:10.8px;line-height:10.8px;color:#101030;font-weight:normal;white-space:pre;">100.0</div><div style="position:absolute;left:302.50px;top:300.36px;width:80px;text-align:center;font-size:10.8px;line-height:10.8px;color:#101030;font-weight:normal;white-space:pre;">1474.61</div><div style="position:absolute;left:367.50px;top:300.36px;width:80px;text-align:center;font-size:10.8px;line-height:10.8px;color:#101030;font-weight:normal;white-space:pre;">916.50</div><div style="position:absolute;left:432.50px;top:300.36px;width:80px;text-align:center;font-size:10.8px;line-height:10.8px;color:#101030;font-weight:normal;white-space:pre;">0.00</div><div style="position:absolute;left:497.50px;top:300.36px;width:80px;text-align:center;font-size:10.8px;line-height:10.8px;color:#101030;font-weight:normal;white-space:pre;">0.00</div><div style="position:absolute;left:562.50px;top:300.36px;width:80px;text-align:center;font-size:10.8px;line-height:10.8px;color:#101030;font-weight:normal;white-space:pre;">0.00</div><div style="position:absolute;left:625.50px;top:300.36px;width:80px;text-align:center;font-size:10.8px;line-height:10.8px;color:#101030;font-weight:normal;white-space:pre;">0.00</div><svg style="position:absolute;left:13px;top:319px" width="23" height="23" viewBox="0 0 23 23"><defs><linearGradient id="qg" x1="0" y1="0" x2="0" y2="1"><stop offset="0" stop-color="#5aa85a"/><stop offset="1" stop-color="#cde8cd"/></linearGradient></defs><rect x="0.7" y="0.7" width="21.6" height="21.6" rx="4" fill="url(#qg)" stroke="#5a9a5a" stroke-width="1.2"/><rect x="4" y="4" width="15" height="15" fill="#b0b8e8" stroke="#6a78b0"/></svg><div style="position:absolute;left:39.5px;top:325.36px;font-size:10.8px;line-height:10.8px;color:#101030;font-weight:normal;white-space:pre;">Quad1</div><svg style="position:absolute;left:154px;top:319px" width="23" height="23" viewBox="0 0 23 23"><defs><linearGradient id="gb" x1="0" y1="0" x2="0" y2="1"><stop offset="0" stop-color="#3a8ad2"/><stop offset="0.55" stop-color="#a8d4f4"/><stop offset="1" stop-color="#f4faff"/></linearGradient></defs><rect x="0.5" y="0.5" width="22" height="22" rx="3.5" fill="url(#gb)" stroke="#2b7cc9"/><path d="M2.5 11.5 Q11.5 3 20.5 11.5 Q11.5 20 2.5 11.5 Z" fill="none" stroke="#1a1a1a" stroke-width="1.4"/><circle cx="11.5" cy="11.5" r="3.6" fill="none" stroke="#222" stroke-width="1.3"/><circle cx="11.5" cy="11.5" r="1.6" fill="#222"/></svg><svg style="position:absolute;left:204px;top:319px" width="11" height="11" viewBox="0 0 11 11"><defs><linearGradient id="bd204319" x1="0" y1="0" x2="0" y2="1"><stop offset="0" stop-color="#30d030"/><stop offset="1" stop-color="#109010"/></linearGradient></defs><rect x="0" y="0" width="11" height="11" rx="2" fill="url(#bd204319)"/><text x="5.5" y="9.2" text-anchor="middle" font-family="Liberation Sans" font-weight="bold" font-size="10" fill="#fff">M</text></svg><div style="position:absolute;left:240.00px;top:325.36px;width:80px;text-align:center;font-size:10.8px;line-height:10.8px;color:#101030;font-weight:normal;white-space:pre;">24.7</div><div style="position:absolute;left:302.50px;top:325.36px;width:80px;text-align:center;font-size:10.8px;line-height:10.8px;color:#101030;font-weight:normal;white-space:pre;">894.00</div><div style="position:absolute;left:367.50px;top:325.36px;width:80px;text-align:center;font-size:10.8px;line-height:10.8px;color:#101030;font-weight:normal;white-space:pre;">916.50</div><div style="position:absolute;left:432.50px;top:325.36px;width:80px;text-align:center;font-size:10.8px;line-height:10.8px;color:#101030;font-weight:normal;white-space:pre;">0.00</div><div style="position:absolute;left:497.50px;top:325.36px;width:80px;text-align:center;font-size:10.8px;line-height:10.8px;color:#101030;font-weight:normal;white-space:pre;">0.00</div><div style="position:absolute;left:562.50px;top:325.36px;width:80px;text-align:center;font-size:10.8px;line-height:10.8px;color:#101030;font-weight:normal;white-space:pre;">0.00</div><div style="position:absolute;left:625.50px;top:325.36px;width:80px;text-align:center;font-size:10.8px;line-height:10.8px;color:#101030;font-weight:normal;white-space:pre;">0.00</div><div style="position:absolute;left:659px;top:68px;width:17px;height:955px;background:linear-gradient(90deg,#a9a9a9,#8e8e8e)"></div><div style="position:absolute;left:660px;top:69px;width:15px;height:16px;background:linear-gradient(#d0d0d0,#b0b0b0);border:1px solid #8a8a8a;border-radius:3px;box-sizing:border-box"></div><svg style="position:absolute;left:660px;top:69px" width="15" height="16"><path d="M3 10.5 L7.5 5.5 L12 10.5 Z" fill="#707070"/></svg><div style="position:absolute;left:660px;top:1007px;width:15px;height:16px;background:linear-gradient(#c6c6c6,#b0b0b0);border:1px solid #8a8a8a;border-radius:3px;box-sizing:border-box"></div><svg style="position:absolute;left:660px;top:1007px" width="15" height="16"><path d="M3 5.5 L7.5 10.5 L12 5.5 Z" fill="#707070"/></svg><div style="position:absolute;left:0px;top:1023px;width:676px;height:17px;background:#b0b0b0"></div><div style="position:absolute;left:15px;top:1024px;width:121px;height:15px;background:linear-gradient(#9a9a9a,#8e8e8e)"></div><div style="position:absolute;left:0px;top:1024px;width:14px;height:15px;background:linear-gradient(#c8c8c8,#acacac);border:1px solid #8a8a8a;border-radius:3px;box-sizing:border-box"></div><div style="position:absolute;left:137px;top:1024px;width:15px;height:15px;background:linear-gradient(#c8c8c8,#acacac);border:1px solid #8a8a8a;border-radius:3px;box-sizing:border-box"></div><div style="position:absolute;left:154px;top:1024px;width:16px;height:15px;background:linear-gradient(#c8c8c8,#acacac);border:1px solid #8a8a8a;border-radius:3px;box-sizing:border-box"></div><div style="position:absolute;left:171px;top:1024px;width:321px;height:15px;background:linear-gradient(#cbcbcb,#b2b2b2);border:1px solid #8a8a8a;border-radius:3px;box-sizing:border-box"></div><div style="position:absolute;left:492px;top:1024px;width:150px;height:15px;background:linear-gradient(#9a9a9a,#8e8e8e)"></div><div style="position:absolute;left:643px;top:1024px;width:15px;height:15px;background:linear-gradient(#c8c8c8,#acacac);border:1px solid #8a8a8a;border-radius:3px;box-sizing:border-box"></div><svg style="position:absolute;left:0px;top:1024px" width="676" height="15"><path d="M3 7.5 L9 3 L9 12 Z" fill="#707070"/><path d="M148 7.5 L142 3 L142 12 Z" fill="#707070"/><path d="M158 7.5 L164 3 L164 12 Z" fill="#707070"/><path d="M655 7.5 L649 3 L649 12 Z" fill="#707070"/></svg><div style="position:absolute;left:676px;top:0px;width:6px;height:1040px;background:#a0a0a0"></div><div style="position:absolute;left:681px;top:0px;width:1708px;height:1039px;background:#4c4c4c"></div><div style="position:absolute;left:683px;top:1px;width:1706px;height:1036px;background:#d6e3f1"></div><div style="position:absolute;left:681px;top:1039px;width:26px;height:1px;background:#ffffff"></div><div style="position:absolute;left:683px;top:1px;width:1706px;height:30px;background:linear-gradient(#b9c9d8,#dbe7f3)"></div><div style="position:absolute;left:683px;top:1px;width:1706px;height:1px;background:#f4f8fc"></div><div style="position:absolute;left:690px;top:13.84px;font-size:12px;line-height:12px;color:#8c8ca2;font-weight:normal;white-space:pre;">Main Viewport (Front)</div><div style="position:absolute;left:690px;top:31px;width:1699px;height:24px;background:linear-gradient(#aaaaaa,#bdbdbd)"></div><div style="position:absolute;left:696px;top:37.77px;font-size:11.5px;line-height:11.5px;color:#8a8a9c;font-weight:normal;white-space:pre;">Camera</div><div style="position:absolute;left:746px;top:37.77px;font-size:11.5px;line-height:11.5px;color:#8a8a9c;font-weight:normal;white-space:pre;">View</div><div style="position:absolute;left:780px;top:37.77px;font-size:11.5px;line-height:11.5px;color:#8a8a9c;font-weight:normal;white-space:pre;">Window</div><svg style="position:absolute;left:830px;top:31px" width="170" height="24" viewBox="0 0 170 24"><line x1="6.5" y1="2" x2="6.5" y2="21" stroke="#3a3a3a" stroke-width="1"/><rect x="15.5" y="4.5" width="15" height="15" fill="#e8e8e8" stroke="#888" stroke-width="0.8"/><rect x="15.5" y="4.5" width="15" height="3.5" fill="#ff9a00"/><path d="M17 10 h4 M17 13 h4 M17 16 h3 M25 10 h3 M25 13 h3" stroke="#555" stroke-width="0.8"/><line x1="37.5" y1="2" x2="37.5" y2="21" stroke="#3a3a3a" stroke-width="1"/><rect x="47" y="5" width="13" height="13" fill="#111"/><rect x="48.2" y="6.2" width="1.9" height="1.9" fill="#fff"/><rect x="48.2" y="9.2" width="1.9" height="1.9" fill="#fff"/><rect x="48.2" y="12.2" width="1.9" height="1.9" fill="#fff"/><rect x="48.2" y="15.2" width="1.9" height="1.9" fill="#fff"/><rect x="51.2" y="6.2" width="1.9" height="1.9" fill="#fff"/><rect x="51.2" y="9.2" width="1.9" height="1.9" fill="#fff"/><rect x="51.2" y="12.2" width="1.9" height="1.9" fill="#fff"/><rect x="51.2" y="15.2" width="1.9" height="1.9" fill="#fff"/><rect x="54.2" y="6.2" width="1.9" height="1.9" fill="#fff"/><rect x="54.2" y="9.2" width="1.9" height="1.9" fill="#fff"/><rect x="54.2" y="12.2" width="1.9" height="1.9" fill="#fff"/><rect x="54.2" y="15.2" width="1.9" height="1.9" fill="#fff"/><rect x="57.2" y="6.2" width="1.9" height="1.9" fill="#fff"/><rect x="57.2" y="9.2" width="1.9" height="1.9" fill="#fff"/><rect x="57.2" y="12.2" width="1.9" height="1.9" fill="#fff"/><rect x="57.2" y="15.2" width="1.9" height="1.9" fill="#fff"/><rect x="66.5" y="0.5" width="45" height="21" fill="#a4b8e6" stroke="#3a70d8" stroke-width="1"/><line x1="88.5" y1="0.5" x2="88.5" y2="21.5" stroke="#3a70d8" stroke-width="1.2"/><defs><linearGradient id="yg1" x1="0" y1="0" x2="0" y2="1"><stop offset="0" stop-color="#c8cc30"/><stop offset="1" stop-color="#f2f2b8"/></linearGradient><linearGradient id="rg1" x1="0" y1="0" x2="0" y2="1"><stop offset="0" stop-color="#c05050"/><stop offset="1" stop-color="#ecc8c8"/></linearGradient></defs><rect x="69" y="3.5" width="16" height="15" rx="3" fill="url(#yg1)"/><path d="M72 16 L81 7 M78 6.5 L82 6 L81.5 10" stroke="#fff" stroke-width="1.8" fill="none"/><rect x="91" y="3.5" width="16" height="15" rx="3" fill="url(#rg1)"/><path d="M93 11 h4 l1 -2 h3 v5 h3 v-4" stroke="#f0f0f0" stroke-width="1.5" fill="none"/><line x1="114.5" y1="3" x2="114.5" y2="19" stroke="#3a3a3a" stroke-width="1"/><rect x="120.5" y="0.5" width="45" height="21" fill="#a4b8e6" stroke="#3a70d8" stroke-width="1"/><line x1="143.5" y1="0.5" x2="143.5" y2="21.5" stroke="#3a70d8" stroke-width="1.2"/><path d="M132 3 L140 11 L132 19 L124 11 Z" fill="#1a5ad0" stroke="#fff" stroke-width="1.2"/><path d="M127 11 h2 l1.5 -3 l2 6 l1.5 -3 h2" stroke="#fff" stroke-width="1" fill="none"/><rect x="145" y="4" width="18" height="15" fill="#b8b8b8"/><path d="M149 8 l4 -3 h6 v8 l-4 3 h-6 Z M149 8 h6 v8 M155 8 l4 -3" fill="none" stroke="#f01a1a" stroke-width="1.6"/></svg><div style="position:absolute;left:690px;top:55px;width:1699px;height:12px;background:#a8a8a8"></div><div style="position:absolute;left:690px;top:55px;width:1699px;height:1px;background:#6a6a6a"></div><div style="position:absolute;left:690px;top:66px;width:1699px;height:1px;background:#6a6a6a"></div><div style="position:absolute;left:701px;top:55px;width:1px;height:12px;background:#6a6a6a"></div><div style="position:absolute;left:747px;top:55px;width:1px;height:12px;background:#6a6a6a"></div><div style="position:absolute;left:695.50px;top:56.88px;width:50px;text-align:right;font-size:9px;line-height:9px;color:#000;font-weight:normal;white-space:pre;">0</div><div style="position:absolute;left:800px;top:55px;width:1px;height:12px;background:#6a6a6a"></div><div style="position:absolute;left:748.50px;top:56.88px;width:50px;text-align:right;font-size:9px;line-height:9px;color:#6e6e7e;font-weight:normal;white-space:pre;">59</div><div style="position:absolute;left:852px;top:55px;width:1px;height:12px;background:#6a6a6a"></div><div style="position:absolute;left:800.50px;top:56.88px;width:50px;text-align:right;font-size:9px;line-height:9px;color:#6e6e7e;font-weight:normal;white-space:pre;">119</div><div style="position:absolute;left:905px;top:55px;width:1px;height:12px;background:#6a6a6a"></div><div style="position:absolute;left:853.50px;top:56.88px;width:50px;text-align:right;font-size:9px;line-height:9px;color:#6e6e7e;font-weight:normal;white-space:pre;">179</div><div style="position:absolute;left:957px;top:55px;width:1px;height:12px;background:#6a6a6a"></div><div style="position:absolute;left:905.50px;top:56.88px;width:50px;text-align:right;font-size:9px;line-height:9px;color:#6e6e7e;font-weight:normal;white-space:pre;">239</div><div style="position:absolute;left:1010px;top:55px;width:1px;height:12px;background:#6a6a6a"></div><div style="position:absolute;left:958.50px;top:56.88px;width:50px;text-align:right;font-size:9px;line-height:9px;color:#6e6e7e;font-weight:normal;white-space:pre;">299</div><div style="position:absolute;left:1062px;top:55px;width:1px;height:12px;background:#6a6a6a"></div><div style="position:absolute;left:1010.50px;top:56.88px;width:50px;text-align:right;font-size:9px;line-height:9px;color:#6e6e7e;font-weight:normal;white-space:pre;">359</div><div style="position:absolute;left:1115px;top:55px;width:1px;height:12px;background:#6a6a6a"></div><div style="position:absolute;left:1063.50px;top:56.88px;width:50px;text-align:right;font-size:9px;line-height:9px;color:#6e6e7e;font-weight:normal;white-space:pre;">418</div><div style="position:absolute;left:1167px;top:55px;width:1px;height:12px;background:#6a6a6a"></div><div style="position:absolute;left:1115.50px;top:56.88px;width:50px;text-align:right;font-size:9px;line-height:9px;color:#6e6e7e;font-weight:normal;white-space:pre;">479</div><div style="position:absolute;left:1220px;top:55px;width:1px;height:12px;background:#6a6a6a"></div><div style="position:absolute;left:1168.50px;top:56.88px;width:50px;text-align:right;font-size:9px;line-height:9px;color:#6e6e7e;font-weight:normal;white-space:pre;">539</div><div style="position:absolute;left:1272px;top:55px;width:1px;height:12px;background:#6a6a6a"></div><div style="position:absolute;left:1220.50px;top:56.88px;width:50px;text-align:right;font-size:9px;line-height:9px;color:#6e6e7e;font-weight:normal;white-space:pre;">599</div><div style="position:absolute;left:1325px;top:55px;width:1px;height:12px;background:#6a6a6a"></div><div style="position:absolute;left:1273.50px;top:56.88px;width:50px;text-align:right;font-size:9px;line-height:9px;color:#6e6e7e;font-weight:normal;white-space:pre;">659</div><div style="position:absolute;left:1377px;top:55px;width:1px;height:12px;background:#6a6a6a"></div><div style="position:absolute;left:1325.50px;top:56.88px;width:50px;text-align:right;font-size:9px;line-height:9px;color:#6e6e7e;font-weight:normal;white-space:pre;">719</div><div style="position:absolute;left:1430px;top:55px;width:1px;height:12px;background:#6a6a6a"></div><div style="position:absolute;left:1378.50px;top:56.88px;width:50px;text-align:right;font-size:9px;line-height:9px;color:#6e6e7e;font-weight:normal;white-space:pre;">779</div><div style="position:absolute;left:1482px;top:55px;width:1px;height:12px;background:#6a6a6a"></div><div style="position:absolute;left:1430.50px;top:56.88px;width:50px;text-align:right;font-size:9px;line-height:9px;color:#6e6e7e;font-weight:normal;white-space:pre;">839</div><div style="position:absolute;left:1535px;top:55px;width:1px;height:12px;background:#6a6a6a"></div><div style="position:absolute;left:1483.50px;top:56.88px;width:50px;text-align:right;font-size:9px;line-height:9px;color:#6e6e7e;font-weight:normal;white-space:pre;">899</div><div style="position:absolute;left:1587px;top:55px;width:1px;height:12px;background:#6a6a6a"></div><div style="position:absolute;left:1535.50px;top:56.88px;width:50px;text-align:right;font-size:9px;line-height:9px;color:#000;font-weight:normal;white-space:pre;">960</div><div style="position:absolute;left:1640px;top:55px;width:1px;height:12px;background:#6a6a6a"></div><div style="position:absolute;left:1588.50px;top:56.88px;width:50px;text-align:right;font-size:9px;line-height:9px;color:#6e6e7e;font-weight:normal;white-space:pre;">1019</div><div style="position:absolute;left:1692px;top:55px;width:1px;height:12px;background:#6a6a6a"></div><div style="position:absolute;left:1640.50px;top:56.88px;width:50px;text-align:right;font-size:9px;line-height:9px;color:#6e6e7e;font-weight:normal;white-space:pre;">1079</div><div style="position:absolute;left:1745px;top:55px;width:1px;height:12px;background:#6a6a6a"></div><div style="position:absolute;left:1693.50px;top:56.88px;width:50px;text-align:right;font-size:9px;line-height:9px;color:#6e6e7e;font-weight:normal;white-space:pre;">1139</div><div style="position:absolute;left:1797px;top:55px;width:1px;height:12px;background:#6a6a6a"></div><div style="position:absolute;left:1745.50px;top:56.88px;width:50px;text-align:right;font-size:9px;line-height:9px;color:#6e6e7e;font-weight:normal;white-space:pre;">1199</div><div style="position:absolute;left:1850px;top:55px;width:1px;height:12px;background:#6a6a6a"></div><div style="position:absolute;left:1798.50px;top:56.88px;width:50px;text-align:right;font-size:9px;line-height:9px;color:#6e6e7e;font-weight:normal;white-space:pre;">1259</div><div style="position:absolute;left:1902px;top:55px;width:1px;height:12px;background:#6a6a6a"></div><div style="position:absolute;left:1850.50px;top:56.88px;width:50px;text-align:right;font-size:9px;line-height:9px;color:#6e6e7e;font-weight:normal;white-space:pre;">1319</div><div style="position:absolute;left:1955px;top:55px;width:1px;height:12px;background:#6a6a6a"></div><div style="position:absolute;left:1903.50px;top:56.88px;width:50px;text-align:right;font-size:9px;line-height:9px;color:#6e6e7e;font-weight:normal;white-space:pre;">1378</div><div style="position:absolute;left:2007px;top:55px;width:1px;height:12px;background:#6a6a6a"></div><div style="position:absolute;left:1955.50px;top:56.88px;width:50px;text-align:right;font-size:9px;line-height:9px;color:#6e6e7e;font-weight:normal;white-space:pre;">1439</div><div style="position:absolute;left:2060px;top:55px;width:1px;height:12px;background:#6a6a6a"></div><div style="position:absolute;left:2008.50px;top:56.88px;width:50px;text-align:right;font-size:9px;line-height:9px;color:#6e6e7e;font-weight:normal;white-space:pre;">1499</div><div style="position:absolute;left:2112px;top:55px;width:1px;height:12px;background:#6a6a6a"></div><div style="position:absolute;left:2060.50px;top:56.88px;width:50px;text-align:right;font-size:9px;line-height:9px;color:#6e6e7e;font-weight:normal;white-space:pre;">1559</div><div style="position:absolute;left:2165px;top:55px;width:1px;height:12px;background:#6a6a6a"></div><div style="position:absolute;left:2113.50px;top:56.88px;width:50px;text-align:right;font-size:9px;line-height:9px;color:#6e6e7e;font-weight:normal;white-space:pre;">1619</div><div style="position:absolute;left:2217px;top:55px;width:1px;height:12px;background:#6a6a6a"></div><div style="position:absolute;left:2165.50px;top:56.88px;width:50px;text-align:right;font-size:9px;line-height:9px;color:#6e6e7e;font-weight:normal;white-space:pre;">1679</div><div style="position:absolute;left:2270px;top:55px;width:1px;height:12px;background:#6a6a6a"></div><div style="position:absolute;left:2218.50px;top:56.88px;width:50px;text-align:right;font-size:9px;line-height:9px;color:#6e6e7e;font-weight:normal;white-space:pre;">1739</div><div style="position:absolute;left:2322px;top:55px;width:1px;height:12px;background:#6a6a6a"></div><div style="position:absolute;left:2270.50px;top:56.88px;width:50px;text-align:right;font-size:9px;line-height:9px;color:#6e6e7e;font-weight:normal;white-space:pre;">1799</div><div style="position:absolute;left:2375px;top:55px;width:1px;height:12px;background:#6a6a6a"></div><div style="position:absolute;left:2323.50px;top:56.88px;width:50px;text-align:right;font-size:9px;line-height:9px;color:#6e6e7e;font-weight:normal;white-space:pre;">1859</div><div style="position:absolute;left:2375.50px;top:56.88px;width:50px;text-align:right;font-size:9px;line-height:9px;color:#6e6e7e;font-weight:normal;white-space:pre;">1919</div><div style="position:absolute;left:751px;top:56px;width:1px;height:10px;background:#10f010"></div><div style="position:absolute;left:690px;top:67px;width:12px;height:970px;background:#a4a4a4"></div><div style="position:absolute;left:701px;top:67px;width:1px;height:970px;background:#6a6a6a"></div><div style="position:absolute;left:690px;top:68px;width:12px;height:30px;overflow:hidden"><div style="position:absolute;left:0;top:0;width:30px;height:12px;transform-origin:0 0;transform:translate(0px,30px) rotate(-90deg);text-align:right;font-size:9.8px;line-height:12px;color:#000;white-space:pre">1080</div></div><div style="position:absolute;left:690px;top:119px;width:12px;height:1px;background:#6a6a6a"></div><div style="position:absolute;left:690px;top:120px;width:12px;height:30px;overflow:hidden"><div style="position:absolute;left:0;top:0;width:30px;height:12px;transform-origin:0 0;transform:translate(0px,30px) rotate(-90deg);text-align:right;font-size:9.8px;line-height:12px;color:#6e6e7e;white-space:pre">1019</div></div><div style="position:absolute;left:690px;top:172px;width:12px;height:1px;background:#6a6a6a"></div><div style="position:absolute;left:690px;top:173px;width:12px;height:30px;overflow:hidden"><div style="position:absolute;left:0;top:0;width:30px;height:12px;transform-origin:0 0;transform:translate(0px,30px) rotate(-90deg);text-align:right;font-size:9.8px;line-height:12px;color:#6e6e7e;white-space:pre">958</div></div><div style="position:absolute;left:690px;top:225px;width:12px;height:1px;background:#6a6a6a"></div><div style="position:absolute;left:690px;top:226px;width:12px;height:30px;overflow:hidden"><div style="position:absolute;left:0;top:0;width:30px;height:12px;transform-origin:0 0;transform:translate(0px,30px) rotate(-90deg);text-align:right;font-size:9.8px;line-height:12px;color:#6e6e7e;white-space:pre">899</div></div><div style="position:absolute;left:690px;top:277px;width:12px;height:1px;background:#6a6a6a"></div><div style="position:absolute;left:690px;top:278px;width:12px;height:30px;overflow:hidden"><div style="position:absolute;left:0;top:0;width:30px;height:12px;transform-origin:0 0;transform:translate(0px,30px) rotate(-90deg);text-align:right;font-size:9.8px;line-height:12px;color:#6e6e7e;white-space:pre">839</div></div><div style="position:absolute;left:690px;top:330px;width:12px;height:1px;background:#6a6a6a"></div><div style="position:absolute;left:690px;top:331px;width:12px;height:30px;overflow:hidden"><div style="position:absolute;left:0;top:0;width:30px;height:12px;transform-origin:0 0;transform:translate(0px,30px) rotate(-90deg);text-align:right;font-size:9.8px;line-height:12px;color:#6e6e7e;white-space:pre">779</div></div><div style="position:absolute;left:690px;top:382px;width:12px;height:1px;background:#6a6a6a"></div><div style="position:absolute;left:690px;top:383px;width:12px;height:30px;overflow:hidden"><div style="position:absolute;left:0;top:0;width:30px;height:12px;transform-origin:0 0;transform:translate(0px,30px) rotate(-90deg);text-align:right;font-size:9.8px;line-height:12px;color:#6e6e7e;white-space:pre">719</div></div><div style="position:absolute;left:690px;top:435px;width:12px;height:1px;background:#6a6a6a"></div><div style="position:absolute;left:690px;top:436px;width:12px;height:30px;overflow:hidden"><div style="position:absolute;left:0;top:0;width:30px;height:12px;transform-origin:0 0;transform:translate(0px,30px) rotate(-90deg);text-align:right;font-size:9.8px;line-height:12px;color:#6e6e7e;white-space:pre">659</div></div><div style="position:absolute;left:690px;top:488px;width:12px;height:1px;background:#6a6a6a"></div><div style="position:absolute;left:690px;top:489px;width:12px;height:30px;overflow:hidden"><div style="position:absolute;left:0;top:0;width:30px;height:12px;transform-origin:0 0;transform:translate(0px,30px) rotate(-90deg);text-align:right;font-size:9.8px;line-height:12px;color:#6e6e7e;white-space:pre">599</div></div><div style="position:absolute;left:690px;top:540px;width:12px;height:1px;background:#6a6a6a"></div><div style="position:absolute;left:690px;top:541px;width:12px;height:30px;overflow:hidden"><div style="position:absolute;left:0;top:0;width:30px;height:12px;transform-origin:0 0;transform:translate(0px,30px) rotate(-90deg);text-align:right;font-size:9.8px;line-height:12px;color:#000;white-space:pre">540</div></div><div style="position:absolute;left:690px;top:593px;width:12px;height:1px;background:#6a6a6a"></div><div style="position:absolute;left:690px;top:594px;width:12px;height:30px;overflow:hidden"><div style="position:absolute;left:0;top:0;width:30px;height:12px;transform-origin:0 0;transform:translate(0px,30px) rotate(-90deg);text-align:right;font-size:9.8px;line-height:12px;color:#6e6e7e;white-space:pre">479</div></div><div style="position:absolute;left:690px;top:645px;width:12px;height:1px;background:#6a6a6a"></div><div style="position:absolute;left:690px;top:646px;width:12px;height:30px;overflow:hidden"><div style="position:absolute;left:0;top:0;width:30px;height:12px;transform-origin:0 0;transform:translate(0px,30px) rotate(-90deg);text-align:right;font-size:9.8px;line-height:12px;color:#6e6e7e;white-space:pre">418</div></div><div style="position:absolute;left:690px;top:698px;width:12px;height:1px;background:#6a6a6a"></div><div style="position:absolute;left:690px;top:699px;width:12px;height:30px;overflow:hidden"><div style="position:absolute;left:0;top:0;width:30px;height:12px;transform-origin:0 0;transform:translate(0px,30px) rotate(-90deg);text-align:right;font-size:9.8px;line-height:12px;color:#6e6e7e;white-space:pre">359</div></div><div style="position:absolute;left:690px;top:751px;width:12px;height:1px;background:#6a6a6a"></div><div style="position:absolute;left:690px;top:752px;width:12px;height:30px;overflow:hidden"><div style="position:absolute;left:0;top:0;width:30px;height:12px;transform-origin:0 0;transform:translate(0px,30px) rotate(-90deg);text-align:right;font-size:9.8px;line-height:12px;color:#6e6e7e;white-space:pre">299</div></div><div style="position:absolute;left:690px;top:803px;width:12px;height:1px;background:#6a6a6a"></div><div style="position:absolute;left:690px;top:804px;width:12px;height:30px;overflow:hidden"><div style="position:absolute;left:0;top:0;width:30px;height:12px;transform-origin:0 0;transform:translate(0px,30px) rotate(-90deg);text-align:right;font-size:9.8px;line-height:12px;color:#6e6e7e;white-space:pre">239</div></div><div style="position:absolute;left:690px;top:856px;width:12px;height:1px;background:#6a6a6a"></div><div style="position:absolute;left:690px;top:857px;width:12px;height:30px;overflow:hidden"><div style="position:absolute;left:0;top:0;width:30px;height:12px;transform-origin:0 0;transform:translate(0px,30px) rotate(-90deg);text-align:right;font-size:9.8px;line-height:12px;color:#6e6e7e;white-space:pre">179</div></div><div style="position:absolute;left:690px;top:908px;width:12px;height:1px;background:#6a6a6a"></div><div style="position:absolute;left:690px;top:909px;width:12px;height:30px;overflow:hidden"><div style="position:absolute;left:0;top:0;width:30px;height:12px;transform-origin:0 0;transform:translate(0px,30px) rotate(-90deg);text-align:right;font-size:9.8px;line-height:12px;color:#6e6e7e;white-space:pre">119</div></div><div style="position:absolute;left:690px;top:961px;width:12px;height:1px;background:#6a6a6a"></div><div style="position:absolute;left:690px;top:962px;width:12px;height:30px;overflow:hidden"><div style="position:absolute;left:0;top:0;width:30px;height:12px;transform-origin:0 0;transform:translate(0px,30px) rotate(-90deg);text-align:right;font-size:9.8px;line-height:12px;color:#6e6e7e;white-space:pre">59</div></div><div style="position:absolute;left:690px;top:277px;width:11px;height:1px;background:#10e010"></div><div style="position:absolute;left:690px;top:803px;width:11px;height:1px;background:#10e010"></div><div style="position:absolute;left:690px;top:1013px;width:16px;height:16px;background:linear-gradient(#c6c6c6,#a8a8a8);border:1px solid #8a8a8a;border-radius:3px;box-sizing:border-box"></div><svg style="position:absolute;left:690px;top:1013px" width="16" height="16"><path d="M4 8 L10 3.5 L10 12.5 Z" fill="#6a6a6a"/></svg><div style="position:absolute;left:702px;top:67px;width:5px;height:970px;background:#868686"></div><div style="position:absolute;left:702px;top:67px;width:1687px;height:213px;background:#7f7f7f"></div><div style="position:absolute;left:747px;top:67px;width:1642px;height:212px;background-color:#7a7a7a;background-image:linear-gradient(45deg,#6b6b6b 25%,transparent 25%,transparent 75%,#6b6b6b 75%),linear-gradient(45deg,#6b6b6b 25%,transparent 25%,transparent 75%,#6b6b6b 75%);background-size:16px 16px;background-position:0px 0px,8px 8px"></div><div style="position:absolute;left:702px;top:277px;width:1687px;height:3px;background:linear-gradient(rgba(0,0,0,0),rgba(0,0,0,0.18))"></div><div style="position:absolute;left:831px;top:115px;width:1515px;height:164px;border-left:1px solid #888888;border-top:1px solid #888888;border-right:1px solid #888888;box-sizing:border-box"></div><div style="position:absolute;left:915px;top:162px;width:1346px;height:117px;border-left:1px solid #888888;border-top:1px solid #888888;border-right:1px solid #888888;box-sizing:border-box"></div><div style="position:absolute;left:950px;top:184px;width:1160px;height:52px;background:rgba(200,196,70,0.5)"></div><div style="position:absolute;left:977.8px;top:184.1px;font-size:56px;line-height:56px;color:#fff;font-weight:bold;white-space:pre;transform-origin:0 0;transform:scaleX(0.855)">STAT</div><div style="position:absolute;left:1075px;top:184.1px;width:60px;text-align:right;font-size:56px;line-height:56px;color:#fff;font-weight:bold;white-space:pre;transform-origin:100% 0;transform:scaleX(0.84)">1</div><div style="position:absolute;left:1160.4px;top:196.2px;font-size:31.5px;line-height:31.5px;color:#fff;font-weight:normal;letter-spacing:2.2px;-webkit-text-stroke:0.7px #fff;white-space:pre;transform-origin:0 0;transform:scaleX(0.9)">88</div><div style="position:absolute;left:1246.2px;top:184.1px;font-size:56px;line-height:56px;color:#fff;font-weight:bold;white-space:pre;transform-origin:0 0;transform:scaleX(0.855)">STAT</div><div style="position:absolute;left:1351px;top:184.1px;width:60px;text-align:right;font-size:56px;line-height:56px;color:#fff;font-weight:bold;white-space:pre;transform-origin:100% 0;transform:scaleX(0.84)">2</div><div style="position:absolute;left:1428.5px;top:196.2px;font-size:31.5px;line-height:31.5px;color:#fff;font-weight:normal;letter-spacing:2.2px;-webkit-text-stroke:0.7px #fff;white-space:pre;transform-origin:0 0;transform:scaleX(0.9)">88.8</div><div style="position:absolute;left:1542.3px;top:184.1px;font-size:56px;line-height:56px;color:#fff;font-weight:bold;white-space:pre;transform-origin:0 0;transform:scaleX(0.855)">STAT</div><div style="position:absolute;left:1646.7px;top:184.1px;width:60px;text-align:right;font-size:56px;line-height:56px;color:#fff;font-weight:bold;white-space:pre;transform-origin:100% 0;transform:scaleX(0.84)">3</div><div style="position:absolute;left:1724.5px;top:196.2px;font-size:31.5px;line-height:31.5px;color:#fff;font-weight:normal;letter-spacing:2.2px;-webkit-text-stroke:0.7px #fff;white-space:pre;transform-origin:0 0;transform:scaleX(0.9)">888.8</div><div style="position:absolute;left:1855.5px;top:184.1px;font-size:56px;line-height:56px;color:#fff;font-weight:bold;white-space:pre;transform-origin:0 0;transform:scaleX(0.855)">STAT</div><div style="position:absolute;left:1961px;top:184.1px;width:60px;text-align:right;font-size:56px;line-height:56px;color:#fff;font-weight:bold;white-space:pre;transform-origin:100% 0;transform:scaleX(0.84)">4</div><div style="position:absolute;left:2037.8px;top:196.2px;font-size:31.5px;line-height:31.5px;color:#fff;font-weight:normal;letter-spacing:2.2px;-webkit-text-stroke:0.7px #fff;white-space:pre;transform-origin:0 0;transform:scaleX(0.9)">8.8</div><div style="position:absolute;left:977px;top:178px;width:166px;height:65px;border:2px solid #ee2020;box-sizing:border-box"></div><div style="position:absolute;left:977px;top:199px;width:1px;height:44px;background:#ff7aa0"></div><svg style="position:absolute;left:900px;top:135px" width="130" height="110" viewBox="0 0 130 110"><defs><linearGradient id="gz1" x1="0" y1="0" x2="1" y2="0"><stop offset="0" stop-color="#1a7a1a"/><stop offset="0.5" stop-color="#36b836"/><stop offset="1" stop-color="#1a7a1a"/></linearGradient><linearGradient id="gz2" x1="0" y1="0" x2="0" y2="1"><stop offset="0" stop-color="#c83a3a"/><stop offset="1" stop-color="#8a2a2a"/></linearGradient><radialGradient id="gz3" cx="0.6" cy="0.35" r="0.7"><stop offset="0" stop-color="#e06040"/><stop offset="1" stop-color="#8a3018"/></radialGradient><radialGradient id="gz4" cx="0.6" cy="0.4" r="0.7"><stop offset="0" stop-color="#40c040"/><stop offset="1" stop-color="#1a701a"/></radialGradient></defs><rect x="75" y="5" width="4.5" height="46" rx="2" fill="url(#gz1)"/><path d="M68.5 47 L86 47 L77 64 Z" fill="url(#gz4)"/><rect x="72.5" y="34.5" width="9" height="10" rx="1" fill="none" stroke="#a8a8d0" stroke-width="1"/><rect x="6" y="73" width="44" height="4.5" rx="2" fill="url(#gz2)"/><path d="M48 66.5 L67 75 L48 84 Z" fill="url(#gz3)"/><circle cx="77" cy="75" r="3.3" fill="#e8e030"/><line x1="94" y1="86" x2="111" y2="95" stroke="#2a2a1a" stroke-width="4" stroke-linecap="round" opacity="0.9"/><circle cx="91" cy="84" r="7" fill="#5a5a90" opacity="0.85"/></svg><div style="position:absolute;left:0px;top:1040px;width:707px;height:230px;background:#aaaaaa"></div><div style="position:absolute;left:0px;top:1044px;width:707px;height:1px;background:#6e6e6e"></div><div style="position:absolute;left:0px;top:1045px;width:707px;height:16px;background:#b6b6b6"></div><div style="position:absolute;left:0px;top:1061px;width:707px;height:1px;background:#6e6e6e"></div><div style="position:absolute;left:1px;top:1047.86px;font-size:10.8px;line-height:10.8px;color:#101030;font-weight:normal;white-space:pre;">Object Inspector  - Stat Cat 1 Name - Text Object</div><div style="position:absolute;left:0px;top:1062px;width:707px;height:24px;background:#aeaeae"></div><div style="position:absolute;left:1px;top:1067px;width:99px;height:19px;background:linear-gradient(#dcdcdc,#bcbcbc);border:1px solid #9a9a9a;border-bottom:none;border-radius:3px 3px 0 0;box-sizing:border-box"></div><div style="position:absolute;left:1.00px;top:1071.86px;width:99px;text-align:center;font-size:10.8px;line-height:10.8px;color:#101030;font-weight:normal;white-space:pre;">Scene Fonts</div><div style="position:absolute;left:102px;top:1067px;width:100px;height:19px;background:linear-gradient(#dcdcdc,#bcbcbc);border:1px solid #9a9a9a;border-bottom:none;border-radius:3px 3px 0 0;box-sizing:border-box"></div><div style="position:absolute;left:102.00px;top:1071.86px;width:100px;text-align:center;font-size:10.8px;line-height:10.8px;color:#101030;font-weight:normal;white-space:pre;">Transform</div><div style="position:absolute;left:203px;top:1065px;width:103px;height:22px;background:linear-gradient(#e8e8e8,#b0b0b0 60%,#aaaaaa);border:1px solid #9a9a9a;border-bottom:none;border-radius:3px 3px 0 0;box-sizing:border-box"></div><div style="position:absolute;left:203.00px;top:1071.69px;width:103px;text-align:center;font-size:11px;line-height:11px;color:#0a0a14;font-weight:bold;white-space:pre;">Tabs &amp; Options</div><div style="position:absolute;left:307px;top:1067px;width:99px;height:19px;background:linear-gradient(#dcdcdc,#bcbcbc);border:1px solid #9a9a9a;border-bottom:none;border-radius:3px 3px 0 0;box-sizing:border-box"></div><div style="position:absolute;left:307.00px;top:1071.86px;width:99px;text-align:center;font-size:10.8px;line-height:10.8px;color:#101030;font-weight:normal;white-space:pre;">Data Source</div><div style="position:absolute;left:408px;top:1067px;width:100px;height:19px;background:linear-gradient(#dcdcdc,#bcbcbc);border:1px solid #9a9a9a;border-bottom:none;border-radius:3px 3px 0 0;box-sizing:border-box"></div><div style="position:absolute;left:408.00px;top:1071.86px;width:100px;text-align:center;font-size:10.8px;line-height:10.8px;color:#101030;font-weight:normal;white-space:pre;">Rendering</div><div style="position:absolute;left:510px;top:1067px;width:99px;height:19px;background:linear-gradient(#dcdcdc,#bcbcbc);border:1px solid #9a9a9a;border-bottom:none;border-radius:3px 3px 0 0;box-sizing:border-box"></div><div style="position:absolute;left:510.00px;top:1071.86px;width:99px;text-align:center;font-size:10.8px;line-height:10.8px;color:#101030;font-weight:normal;white-space:pre;">Materials</div><div style="position:absolute;left:612px;top:1067px;width:95px;height:19px;background:linear-gradient(#dcdcdc,#bcbcbc);border:1px solid #9a9a9a;border-bottom:none;border-radius:3px 3px 0 0;box-sizing:border-box"></div><div style="position:absolute;left:612.00px;top:1071.86px;width:95px;text-align:center;font-size:10.8px;line-height:10.8px;color:#101030;font-weight:normal;white-space:pre;">Texture Coords</div><div style="position:absolute;left:0px;top:1086px;width:707px;height:182px;background:#aaaaaa"></div><div style="position:absolute;left:3px;top:1095px;width:305px;height:173px;border:1px solid #8a8a8a;border-radius:2px;box-sizing:border-box"></div><div style="position:absolute;left:11px;top:1088px;height:12px;padding:0 3px;background:#aaaaaa;font-size:11px;line-height:12px;font-weight:bold;color:#101018;white-space:pre">Tabs</div><div style="position:absolute;left:11px;top:1103px;width:76px;height:24px;background:linear-gradient(#d4d4d4,#b4b4b4);border:1px solid #6e6e6e;border-radius:3px;box-sizing:border-box"></div><div style="position:absolute;left:11.00px;top:1109.86px;width:76px;text-align:center;font-size:10.8px;line-height:10.8px;color:#101030;font-weight:normal;white-space:pre;">New</div><div style="position:absolute;left:11px;top:1131px;width:76px;height:24px;background:linear-gradient(#d4d4d4,#b4b4b4);border:1px solid #6e6e6e;border-radius:3px;box-sizing:border-box"></div><div style="position:absolute;left:12.00px;top:1138.86px;width:76px;text-align:center;font-size:10.8px;line-height:10.8px;color:#7a7a7a;font-weight:normal;white-space:pre;">Delete</div><div style="position:absolute;left:11.00px;top:1137.86px;width:76px;text-align:center;font-size:10.8px;line-height:10.8px;color:#ffffff;font-weight:normal;white-space:pre;">Delete</div><div style="position:absolute;left:95px;top:1104px;width:200px;height:157px;background:#a6a6a6;border:1px solid #9c9c9c;box-sizing:border-box"></div><div style="position:absolute;left:96px;top:1104px;width:199px;height:19px;background:linear-gradient(#c6c6c6,#aaaaaa)"></div><div style="position:absolute;left:96px;top:1122px;width:199px;height:1px;background:#888888"></div><div style="position:absolute;left:126px;top:1105px;width:1px;height:17px;background:#8a8a8a"></div><div style="position:absolute;left:206px;top:1105px;width:1px;height:17px;background:#8a8a8a"></div><div style="position:absolute;left:97.50px;top:1108.86px;width:30px;text-align:center;font-size:10.8px;line-height:10.8px;color:#101030;font-weight:normal;white-space:pre;">Nr</div><div style="position:absolute;left:140.00px;top:1108.86px;width:80px;text-align:center;font-size:10.8px;line-height:10.8px;color:#101030;font-weight:normal;white-space:pre;">Position</div><div style="position:absolute;left:203.00px;top:1108.86px;width:90px;text-align:center;font-size:10.8px;line-height:10.8px;color:#101030;font-weight:normal;white-space:pre;">Alignment</div><div style="position:absolute;left:96px;top:1123px;width:199px;height:19px;background:#c6c6c6"></div><div style="position:absolute;left:96px;top:1142px;width:199px;height:1px;background:#d8d8d8"></div><div style="position:absolute;left:126px;top:1123px;width:1px;height:19px;background:#d8d8d8"></div><div style="position:absolute;left:206px;top:1123px;width:1px;height:19px;background:#d8d8d8"></div><div style="position:absolute;left:92.50px;top:1128.86px;width:30px;text-align:right;font-size:10.8px;line-height:10.8px;color:#101030;font-weight:normal;white-space:pre;">1</div><div style="position:absolute;left:121.00px;top:1128.86px;width:80px;text-align:right;font-size:10.8px;line-height:10.8px;color:#101030;font-weight:normal;white-space:pre;">0.00</div><div style="position:absolute;left:205.00px;top:1128.86px;width:90px;text-align:center;font-size:10.8px;line-height:10.8px;color:#101030;font-weight:normal;white-space:pre;">Left</div><div style="position:absolute;left:96px;top:1143px;width:199px;height:19px;background:#c6c6c6"></div><div style="position:absolute;left:96px;top:1162px;width:199px;height:1px;background:#d8d8d8"></div><div style="position:absolute;left:126px;top:1143px;width:1px;height:19px;background:#d8d8d8"></div><div style="position:absolute;left:206px;top:1143px;width:1px;height:19px;background:#d8d8d8"></div><div style="position:absolute;left:92.50px;top:1148.86px;width:30px;text-align:right;font-size:10.8px;line-height:10.8px;color:#101030;font-weight:normal;white-space:pre;">2</div><div style="position:absolute;left:121.00px;top:1148.86px;width:80px;text-align:right;font-size:10.8px;line-height:10.8px;color:#101030;font-weight:normal;white-space:pre;">314.68</div><div style="position:absolute;left:205.00px;top:1148.86px;width:90px;text-align:center;font-size:10.8px;line-height:10.8px;color:#101030;font-weight:normal;white-space:pre;">Left</div><div style="position:absolute;left:96px;top:1163px;width:199px;height:19px;background:#c6c6c6"></div><div style="position:absolute;left:96px;top:1182px;width:199px;height:1px;background:#d8d8d8"></div><div style="position:absolute;left:126px;top:1163px;width:1px;height:19px;background:#d8d8d8"></div><div style="position:absolute;left:206px;top:1163px;width:1px;height:19px;background:#d8d8d8"></div><div style="position:absolute;left:92.50px;top:1168.86px;width:30px;text-align:right;font-size:10.8px;line-height:10.8px;color:#101030;font-weight:normal;white-space:pre;">3</div><div style="position:absolute;left:121.00px;top:1168.86px;width:80px;text-align:right;font-size:10.8px;line-height:10.8px;color:#101030;font-weight:normal;white-space:pre;">786.70</div><div style="position:absolute;left:205.00px;top:1168.86px;width:90px;text-align:center;font-size:10.8px;line-height:10.8px;color:#101030;font-weight:normal;white-space:pre;">Center</div><div style="position:absolute;left:96px;top:1183px;width:199px;height:19px;background:#c6c6c6"></div><div style="position:absolute;left:96px;top:1202px;width:199px;height:1px;background:#d8d8d8"></div><div style="position:absolute;left:126px;top:1183px;width:1px;height:19px;background:#d8d8d8"></div><div style="position:absolute;left:206px;top:1183px;width:1px;height:19px;background:#d8d8d8"></div><div style="position:absolute;left:92.50px;top:1188.86px;width:30px;text-align:right;font-size:10.8px;line-height:10.8px;color:#101030;font-weight:normal;white-space:pre;">4</div><div style="position:absolute;left:121.00px;top:1188.86px;width:80px;text-align:right;font-size:10.8px;line-height:10.8px;color:#101030;font-weight:normal;white-space:pre;">1258.72</div><div style="position:absolute;left:205.00px;top:1188.86px;width:90px;text-align:center;font-size:10.8px;line-height:10.8px;color:#101030;font-weight:normal;white-space:pre;">Left</div><div style="position:absolute;left:96px;top:1203px;width:199px;height:19px;background:#c6c6c6"></div><div style="position:absolute;left:96px;top:1222px;width:199px;height:1px;background:#d8d8d8"></div><div style="position:absolute;left:126px;top:1203px;width:1px;height:19px;background:#d8d8d8"></div><div style="position:absolute;left:206px;top:1203px;width:1px;height:19px;background:#d8d8d8"></div><div style="position:absolute;left:92.50px;top:1208.86px;width:30px;text-align:right;font-size:10.8px;line-height:10.8px;color:#101030;font-weight:normal;white-space:pre;">5</div><div style="position:absolute;left:121.00px;top:1208.86px;width:80px;text-align:right;font-size:10.8px;line-height:10.8px;color:#101030;font-weight:normal;white-space:pre;">1573.40</div><div style="position:absolute;left:205.00px;top:1208.86px;width:90px;text-align:center;font-size:10.8px;line-height:10.8px;color:#101030;font-weight:normal;white-space:pre;">Right</div><div style="position:absolute;left:315px;top:1095px;width:252px;height:81px;border:1px solid #8a8a8a;border-radius:2px;box-sizing:border-box"></div><div style="position:absolute;left:323px;top:1088px;height:12px;padding:0 3px;background:#aaaaaa;font-size:11px;line-height:12px;font-weight:bold;color:#101018;white-space:pre">Auto Squeeze</div><div style="position:absolute;left:298.00px;top:1107.86px;width:80px;text-align:right;font-size:10.8px;line-height:10.8px;color:#101030;font-weight:normal;white-space:pre;">Enabled:</div><div style="position:absolute;left:386px;top:1108px;width:11px;height:11px;background:#dcdcdc;border:1px solid #6a6a6a;box-sizing:border-box"></div><div style="position:absolute;left:298.00px;top:1129.36px;width:80px;text-align:right;font-size:10.8px;line-height:10.8px;color:#101030;font-weight:normal;white-space:pre;">Max Width:</div><div style="position:absolute;left:386px;top:1126px;width:86px;height:18px;background:#dcdcdc;border:1px solid #6e6e6e;border-radius:2px;box-sizing:border-box"></div><div style="position:absolute;left:447px;top:1128px;width:11px;height:14px;border:1px solid #a89c80;box-sizing:border-box"></div><div style="position:absolute;left:458px;top:1128px;width:11px;height:14px;border:1px solid #a89c80;box-sizing:border-box"></div><svg style="position:absolute;left:447px;top:1126px" width="22" height="18"><path d="M3 8.5 L5.5 5.5 L8 8.5 Z" fill="#111"/><path d="M14 10.5 L16.5 13.0 L19 10.5 Z" fill="#111"/></svg><div style="position:absolute;left:389px;top:1129.86px;font-size:10.8px;line-height:10.8px;color:#101030;font-weight:normal;white-space:pre;">400.00</div><div style="position:absolute;left:475px;top:1126px;width:81px;height:18px;background:linear-gradient(#d4d4d4,#b4b4b4);border:1px solid #6e6e6e;border-radius:3px;box-sizing:border-box"></div><div style="position:absolute;left:475.00px;top:1129.86px;width:81px;text-align:center;font-size:10.8px;line-height:10.8px;color:#101030;font-weight:normal;white-space:pre;">Set To Current</div><div style="position:absolute;left:298.00px;top:1152.86px;width:80px;text-align:right;font-size:10.8px;line-height:10.8px;color:#101030;font-weight:normal;white-space:pre;">Scaling:</div><div style="position:absolute;left:386px;top:1151px;width:170px;height:18px;background:#dcdcdc;border:1px solid #6e6e6e;border-radius:2px;box-sizing:border-box"></div><div style="position:absolute;left:541px;top:1152px;width:14px;height:16px;background:linear-gradient(#e0e0e0,#c4c4c4);border-left:1px solid #8a8a8a;box-sizing:border-box"></div><svg style="position:absolute;left:542px;top:1151px" width="13" height="18"><path d="M3.5 8.0 L9.5 8.0 L6.5 11.0 Z" fill="#111"/></svg><div style="position:absolute;left:389px;top:1155.36px;font-size:10.8px;line-height:10.8px;color:#101030;font-weight:normal;white-space:pre;">Width Only</div><div style="position:absolute;left:315px;top:1186px;width:252px;height:84px;border:1px solid #8a8a8a;border-radius:2px;box-sizing:border-box"></div><div style="position:absolute;left:323px;top:1179px;height:12px;padding:0 3px;background:#aaaaaa;font-size:11px;line-height:12px;font-weight:bold;color:#101018;white-space:pre">Auto Scale</div><div style="position:absolute;left:298.00px;top:1199.36px;width:80px;text-align:right;font-size:10.8px;line-height:10.8px;color:#101030;font-weight:normal;white-space:pre;">Enabled:</div><div style="position:absolute;left:386px;top:1199px;width:11px;height:11px;background:#dcdcdc;border:1px solid #6a6a6a;box-sizing:border-box"></div><div style="position:absolute;left:298.00px;top:1219.36px;width:80px;text-align:right;font-size:10.8px;line-height:10.8px;color:#101030;font-weight:normal;white-space:pre;">Target:</div><div style="position:absolute;left:386px;top:1217px;width:170px;height:18px;background:#dcdcdc;border:1px solid #6e6e6e;border-radius:2px;box-sizing:border-box"></div><div style="position:absolute;left:541px;top:1218px;width:14px;height:16px;background:linear-gradient(#e0e0e0,#c4c4c4);border-left:1px solid #8a8a8a;box-sizing:border-box"></div><svg style="position:absolute;left:542px;top:1217px" width="13" height="18"><path d="M3.5 8.0 L9.5 8.0 L6.5 11.0 Z" fill="#111"/></svg><div style="position:absolute;left:389px;top:1221.36px;font-size:10.8px;line-height:10.8px;color:#101030;font-weight:normal;white-space:pre;">First Child</div><div style="position:absolute;left:298.00px;top:1242.86px;width:80px;text-align:right;font-size:10.8px;line-height:10.8px;color:#101030;font-weight:normal;white-space:pre;">Mode:</div><div style="position:absolute;left:386px;top:1241px;width:170px;height:18px;background:#dcdcdc;border:1px solid #6e6e6e;border-radius:2px;box-sizing:border-box"></div><div style="position:absolute;left:541px;top:1242px;width:14px;height:16px;background:linear-gradient(#e0e0e0,#c4c4c4);border-left:1px solid #8a8a8a;box-sizing:border-box"></div><svg style="position:absolute;left:542px;top:1241px" width="13" height="18"><path d="M3.5 8.0 L9.5 8.0 L6.5 11.0 Z" fill="#111"/></svg><div style="position:absolute;left:389px;top:1245.36px;font-size:10.8px;line-height:10.8px;color:#101030;font-weight:normal;white-space:pre;">Width &amp; Height</div><div style="position:absolute;left:575px;top:1095px;width:140px;height:81px;border:1px solid #8a8a8a;border-radius:2px;box-sizing:border-box"></div><div style="position:absolute;left:583px;top:1088px;height:12px;padding:0 3px;background:#aaaaaa;font-size:11px;line-height:12px;font-weight:bold;color:#101018;white-space:pre">Word Wrap</div><div style="position:absolute;left:566.00px;top:1107.86px;width:80px;text-align:right;font-size:10.8px;line-height:10.8px;color:#101030;font-weight:normal;white-space:pre;">Enabled:</div><div style="position:absolute;left:654px;top:1108px;width:11px;height:11px;background:#dcdcdc;border:1px solid #6a6a6a;box-sizing:border-box"></div><div style="position:absolute;left:566.00px;top:1129.36px;width:80px;text-align:right;font-size:10.8px;line-height:10.8px;color:#101030;font-weight:normal;white-space:pre;">Fixed Width:</div><div style="position:absolute;left:654px;top:1126px;width:60px;height:18px;background:linear-gradient(90deg,#d4d4d4,#c8c8c8);border:1px solid #7a7a7a;border-radius:2px;box-sizing:border-box"></div><div style="position:absolute;left:657px;top:1129.86px;font-size:10.8px;line-height:10.8px;color:#8e8e9a;font-weight:normal;white-space:pre;">15.00</div><div style="position:absolute;left:574px;top:1186px;width:141px;height:84px;border:1px solid #8a8a8a;border-radius:2px;box-sizing:border-box"></div><div style="position:absolute;left:582px;top:1179px;height:12px;padding:0 3px;background:#aaaaaa;font-size:11px;line-height:12px;font-weight:bold;color:#101018;white-space:pre">Character Limits</div><div style="position:absolute;left:558.00px;top:1205.86px;width:80px;text-align:right;font-size:10.8px;line-height:10.8px;color:#101030;font-weight:normal;white-space:pre;">Soft Limit:</div><div style="position:absolute;left:644px;top:1201px;width:57px;height:19px;background:#dcdcdc;border:1px solid #6e6e6e;border-radius:2px;box-sizing:border-box"></div><div style="position:absolute;left:676px;top:1203px;width:11px;height:15px;border:1px solid #a89c80;box-sizing:border-box"></div><div style="position:absolute;left:687px;top:1203px;width:11px;height:15px;border:1px solid #a89c80;box-sizing:border-box"></div><svg style="position:absolute;left:676px;top:1201px" width="22" height="19"><path d="M3 9.0 L5.5 6.0 L8 9.0 Z" fill="#111"/><path d="M14 11.0 L16.5 13.5 L19 11.0 Z" fill="#111"/></svg><div style="position:absolute;left:647px;top:1205.36px;font-size:10.8px;line-height:10.8px;color:#101030;font-weight:normal;white-space:pre;">0</div><div style="position:absolute;left:558.00px;top:1227.86px;width:80px;text-align:right;font-size:10.8px;line-height:10.8px;color:#101030;font-weight:normal;white-space:pre;">Hard Limit:</div><div style="position:absolute;left:644px;top:1223px;width:57px;height:19px;background:#dcdcdc;border:1px solid #6e6e6e;border-radius:2px;box-sizing:border-box"></div><div style="position:absolute;left:676px;top:1225px;width:11px;height:15px;border:1px solid #a89c80;box-sizing:border-box"></div><div style="position:absolute;left:687px;top:1225px;width:11px;height:15px;border:1px solid #a89c80;box-sizing:border-box"></div><svg style="position:absolute;left:676px;top:1223px" width="22" height="19"><path d="M3 9.0 L5.5 6.0 L8 9.0 Z" fill="#111"/><path d="M14 11.0 L16.5 13.5 L19 11.0 Z" fill="#111"/></svg><div style="position:absolute;left:647px;top:1227.36px;font-size:10.8px;line-height:10.8px;color:#101030;font-weight:normal;white-space:pre;">0</div><div style="position:absolute;left:635px;top:1250.86px;font-size:10.8px;line-height:10.8px;color:#101030;font-weight:normal;white-space:pre;">(0 means no lim</div><div style="position:absolute;left:707px;top:1040px;width:0px;height:230px;"></div><div style="position:absolute;left:0px;top:1268px;width:707px;height:41px;background:#a2a2a2"></div><div style="position:absolute;left:0px;top:1268px;width:707px;height:1px;background:#b8b8b8"></div><div style="position:absolute;left:0px;top:1272px;width:61px;height:23px;background:linear-gradient(#d8d8d8,#a8a8a8);border:1px solid #1a2aff;box-sizing:border-box"></div><div style="position:absolute;left:9px;top:1272px;width:1px;height:22px;background:#1a2aff"></div><div style="position:absolute;left:26px;top:1272px;width:1px;height:22px;background:#1a2aff"></div><div style="position:absolute;left:43px;top:1272px;width:1px;height:22px;background:#1a2aff"></div><svg style="position:absolute;left:0px;top:1272px" width="62" height="23"><path d="M2 7.0 V15.0 M4 7.0 V15.0" stroke="#333" stroke-width="0.8"/><path d="M13 6.0 L21 11.0 L13 16.0 Z" fill="#000"/><path d="M30 7.0 V15.0 M32 7.0 V15.0" stroke="#333" stroke-width="0.8"/><path d="M34 7.0 L39 11.0 L34 15.0 Z" fill="#000"/><path d="M48 6.0 L55 11.0 L48 16.0 Z" fill="#000"/><rect x="55" y="6.0" width="2" height="10" fill="#000"/></svg><div style="position:absolute;left:104px;top:1272px;width:57px;height:23px;background:linear-gradient(#d4d4d4,#b4b4b4);border:1px solid #6e6e6e;border-radius:3px;box-sizing:border-box"></div><div style="position:absolute;left:104.00px;top:1278.36px;width:57px;text-align:center;font-size:10.8px;line-height:10.8px;color:#101030;font-weight:normal;white-space:pre;">Auto Key</div><div style="position:absolute;left:165px;top:1272px;width:65px;height:23px;background:#dcdcdc;border:1px solid #6e6e6e;border-radius:2px;box-sizing:border-box"></div><div style="position:absolute;left:205px;top:1274px;width:11px;height:19px;border:1px solid #a89c80;box-sizing:border-box"></div><div style="position:absolute;left:216px;top:1274px;width:11px;height:19px;border:1px solid #a89c80;box-sizing:border-box"></div><svg style="position:absolute;left:205px;top:1272px" width="22" height="23"><path d="M3 11.0 L5.5 8.0 L8 11.0 Z" fill="#111"/><path d="M14 13.0 L16.5 15.5 L19 13.0 Z" fill="#111"/></svg><div style="position:absolute;left:168px;top:1278.36px;font-size:10.8px;line-height:10.8px;color:#101030;font-weight:normal;white-space:pre;">0</div><div style="position:absolute;left:0px;top:1295px;width:61px;height:17px;background:linear-gradient(#d8d8d8,#a8a8a8);border:1px solid #8a8a8a;box-sizing:border-box"></div><div style="position:absolute;left:9px;top:1295px;width:1px;height:16px;background:#8a8a8a"></div><div style="position:absolute;left:26px;top:1295px;width:1px;height:16px;background:#8a8a8a"></div><div style="position:absolute;left:43px;top:1295px;width:1px;height:16px;background:#8a8a8a"></div><svg style="position:absolute;left:0px;top:1295px" width="62" height="17"><path d="M2 4.0 V12.0 M4 4.0 V12.0" stroke="#333" stroke-width="0.8"/><path d="M13 3.0 L21 8.0 L13 13.0 Z" fill="#000"/><path d="M30 4.0 V12.0 M32 4.0 V12.0" stroke="#333" stroke-width="0.8"/><path d="M34 4.0 L39 8.0 L34 12.0 Z" fill="#000"/><path d="M48 3.0 L55 8.0 L48 13.0 Z" fill="#000"/><rect x="55" y="3.0" width="2" height="10" fill="#000"/></svg><div style="position:absolute;left:104px;top:1295px;width:57px;height:17px;background:linear-gradient(#d4d4d4,#b4b4b4);border:1px solid #6e6e6e;border-radius:3px;box-sizing:border-box"></div><div style="position:absolute;left:104.00px;top:1298.36px;width:57px;text-align:center;font-size:10.8px;line-height:10.8px;color:#101030;font-weight:normal;white-space:pre;">Key...</div><div style="position:absolute;left:165px;top:1295px;width:65px;height:17px;background:#dcdcdc;border:1px solid #6e6e6e;border-radius:2px;box-sizing:border-box"></div><div style="position:absolute;left:205px;top:1297px;width:11px;height:13px;border:1px solid #a89c80;box-sizing:border-box"></div><div style="position:absolute;left:216px;top:1297px;width:11px;height:13px;border:1px solid #a89c80;box-sizing:border-box"></div><svg style="position:absolute;left:205px;top:1295px" width="22" height="17"><path d="M3 8.0 L5.5 5.0 L8 8.0 Z" fill="#111"/><path d="M14 10.0 L16.5 12.5 L19 10.0 Z" fill="#111"/></svg><div style="position:absolute;left:168px;top:1298.36px;font-size:10.8px;line-height:10.8px;color:#101030;font-weight:normal;white-space:pre;">0</div><div style="position:absolute;left:232px;top:1272px;width:475px;height:22px;background:linear-gradient(#888 0%,#d8d8d8 25%,#c8c8c8 60%,#b0b0b0);border:1px solid #1a1a1a;box-sizing:border-box"></div><div style="position:absolute;left:233px;top:1279px;width:76px;height:14px;background:#a8b8dc"></div><div style="position:absolute;left:260.00px;top:1280.69px;width:20px;text-align:center;font-size:11px;line-height:11px;color:#000;font-weight:normal;white-space:pre;">0</div><div style="position:absolute;left:270.0px;top:1273px;width:1px;height:3px;background:#222"></div><div style="position:absolute;left:319.5px;top:1273px;width:1px;height:3px;background:#222"></div><div style="position:absolute;left:369.0px;top:1273px;width:1px;height:3px;background:#222"></div><div style="position:absolute;left:418.5px;top:1273px;width:1px;height:3px;background:#222"></div><div style="position:absolute;left:468.0px;top:1273px;width:1px;height:3px;background:#222"></div><div style="position:absolute;left:517.5px;top:1273px;width:1px;height:3px;background:#222"></div><div style="position:absolute;left:567.0px;top:1273px;width:1px;height:3px;background:#222"></div><div style="position:absolute;left:232px;top:1296px;width:475px;height:13px;background:#a8b8dc;border:1px solid #1a1a1a;border-bottom:none;box-sizing:border-box"></div><div style="position:absolute;left:236px;top:1298px;width:9px;height:11px;border:1px solid #8898c0;box-sizing:border-box"></div><div style="position:absolute;left:253px;top:1299.69px;font-size:11px;line-height:11px;color:#ffffff;font-weight:normal;white-space:pre;">0</div><div style="position:absolute;left:707px;top:280px;width:1682px;height:1029px;background:#a9a9a9"></div><div style="position:absolute;left:706px;top:280px;width:1px;height:1029px;background:#7a7a7a"></div><div style="position:absolute;left:707px;top:280px;width:1px;height:2px;background:#9a9a9a"></div><div style="position:absolute;left:707px;top:280px;width:1682px;height:30px;background:#ffffff"></div><svg style="position:absolute;left:714px;top:285px" width="18" height="18" viewBox="0 0 18 18"><defs><linearGradient id="xi" x1="0" y1="0" x2="1" y2="1"><stop offset="0" stop-color="#555"/><stop offset="0.5" stop-color="#ddd"/><stop offset="1" stop-color="#666"/></linearGradient></defs><rect x="1" y="1" width="16" height="16" fill="url(#xi)"/><path d="M1 1 L9 9 L1 17 Z" fill="#6a6a7a"/><path d="M17 1 L9 9 L17 17 Z" fill="#8a8a9a"/><path d="M5 1 L9 7 L13 1 Z" fill="#eee"/><path d="M5 17 L9 11 L13 17 Z" fill="#eee"/></svg><div style="position:absolute;left:736px;top:288.77px;font-size:11.5px;line-height:11.5px;color:#8c8ca0;font-weight:normal;white-space:pre;">Visual Logic Editor - Scene1</div><div style="position:absolute;left:707px;top:310px;width:1682px;height:25px;background:#959595"></div><div style="position:absolute;left:708px;top:310px;width:137px;height:25px;background:linear-gradient(#d8d0d0,#b0b0b0)"></div><div style="position:absolute;left:718px;top:312px;width:126px;height:23px;background:linear-gradient(#b8b8b8,#b2b2b2)"></div><div style="position:absolute;left:724px;top:318.77px;font-size:11.5px;line-height:11.5px;color:#8a8a9c;font-weight:normal;white-space:pre;">Visual Logic</div><div style="position:absolute;left:796px;top:318.77px;font-size:11.5px;line-height:11.5px;color:#8a8a9c;font-weight:normal;white-space:pre;">View</div><div style="position:absolute;left:707px;top:335px;width:200px;height:974px;background:#ababab"></div><div style="position:absolute;left:709px;top:336px;width:194px;height:18px;background:linear-gradient(#c2c2c2,#b2b2b2);border:1px solid #7c7c7c;border-radius:2px;box-sizing:border-box"></div><div style="position:absolute;left:713px;top:340.36px;font-size:10.8px;line-height:10.8px;color:#101030;font-weight:normal;white-space:pre;">Objects</div><svg style="position:absolute;left:889px;top:339px" width="10" height="12" viewBox="0 0 10 12"><rect x="3" y="1" width="4" height="6" fill="none" stroke="#000" stroke-width="1.5"/><line x1="1" y1="7.5" x2="9" y2="7.5" stroke="#000" stroke-width="1.5"/><line x1="5" y1="7.5" x2="5" y2="11.5" stroke="#000" stroke-width="1.5"/></svg><div style="position:absolute;left:709px;top:355px;width:194px;height:881px;background:#c7c7c7;border:1px solid #7c7c7c;box-sizing:border-box"></div><div style="position:absolute;left:710px;top:374px;width:175px;height:1px;background:#dcdcdc"></div><svg style="position:absolute;left:727px;top:359.5px" width="10" height="10" viewBox="0 0 10 10"><rect x="0.5" y="0.5" width="8.5" height="8.5" rx="1" fill="#f2f0ec" stroke="#7a9cc8" stroke-width="0.9"/><path d="M2.3 4.75 H7.2 M4.75 2.3 V7.2" stroke="#000" stroke-width="1.3"/></svg><div style="position:absolute;left:737.5px;top:360.36px;font-size:10.8px;line-height:10.8px;color:#0c0c28;font-weight:normal;white-space:pre;">DirLight1</div><div style="position:absolute;left:710px;top:394px;width:175px;height:1px;background:#dcdcdc"></div><svg style="position:absolute;left:727px;top:379.5px" width="10" height="10" viewBox="0 0 10 10"><rect x="0.5" y="0.5" width="8.5" height="8.5" rx="1" fill="#f2f0ec" stroke="#7a9cc8" stroke-width="0.9"/><path d="M2.3 4.75 H7.2" stroke="#000" stroke-width="1.3"/></svg><div style="position:absolute;left:737.5px;top:380.36px;font-size:10.8px;line-height:10.8px;color:#0c0c28;font-weight:normal;white-space:pre;">Quad1</div><div style="position:absolute;left:710px;top:414px;width:175px;height:1px;background:#dcdcdc"></div><svg style="position:absolute;left:741px;top:399.5px" width="10" height="10" viewBox="0 0 10 10"><rect x="0.5" y="0.5" width="8.5" height="8.5" rx="1" fill="#f2f0ec" stroke="#7a9cc8" stroke-width="0.9"/><path d="M2.3 4.75 H7.2 M4.75 2.3 V7.2" stroke="#000" stroke-width="1.3"/></svg><div style="position:absolute;left:751.5px;top:400.36px;font-size:10.8px;line-height:10.8px;color:#0c0c28;font-weight:normal;white-space:pre;">BoundingBox</div><div style="position:absolute;left:710px;top:434px;width:175px;height:1px;background:#dcdcdc"></div><svg style="position:absolute;left:741px;top:419.5px" width="10" height="10" viewBox="0 0 10 10"><rect x="0.5" y="0.5" width="8.5" height="8.5" rx="1" fill="#f2f0ec" stroke="#7a9cc8" stroke-width="0.9"/><path d="M2.3 4.75 H7.2 M4.75 2.3 V7.2" stroke="#000" stroke-width="1.3"/></svg><div style="position:absolute;left:751.5px;top:420.36px;font-size:10.8px;line-height:10.8px;color:#0c0c28;font-weight:normal;white-space:pre;">Events</div><div style="position:absolute;left:710px;top:454px;width:175px;height:1px;background:#dcdcdc"></div><svg style="position:absolute;left:741px;top:439.5px" width="10" height="10" viewBox="0 0 10 10"><rect x="0.5" y="0.5" width="8.5" height="8.5" rx="1" fill="#f2f0ec" stroke="#7a9cc8" stroke-width="0.9"/><path d="M2.3 4.75 H7.2 M4.75 2.3 V7.2" stroke="#000" stroke-width="1.3"/></svg><div style="position:absolute;left:751.5px;top:440.36px;font-size:10.8px;line-height:10.8px;color:#0c0c28;font-weight:normal;white-space:pre;">Faces</div><div style="position:absolute;left:710px;top:474px;width:175px;height:1px;background:#dcdcdc"></div><svg style="position:absolute;left:741px;top:459.5px" width="10" height="10" viewBox="0 0 10 10"><rect x="0.5" y="0.5" width="8.5" height="8.5" rx="1" fill="#f2f0ec" stroke="#7a9cc8" stroke-width="0.9"/><path d="M2.3 4.75 H7.2 M4.75 2.3 V7.2" stroke="#000" stroke-width="1.3"/></svg><div style="position:absolute;left:751.5px;top:460.36px;font-size:10.8px;line-height:10.8px;color:#0c0c28;font-weight:normal;white-space:pre;">TextureCoords</div><div style="position:absolute;left:710px;top:494px;width:175px;height:1px;background:#dcdcdc"></div><svg style="position:absolute;left:741px;top:479.5px" width="10" height="10" viewBox="0 0 10 10"><rect x="0.5" y="0.5" width="8.5" height="8.5" rx="1" fill="#f2f0ec" stroke="#7a9cc8" stroke-width="0.9"/><path d="M2.3 4.75 H7.2 M4.75 2.3 V7.2" stroke="#000" stroke-width="1.3"/></svg><svg style="position:absolute;left:751.5px;top:481.0px" width="7" height="7" viewBox="0 0 7 7"><path d="M3.5 1 L6 3.5 L3.5 6 L1 3.5 Z" fill="#8a1a8a" stroke="#8a1a8a" stroke-width="0.5"/></svg><div style="position:absolute;left:760.5px;top:480.36px;font-size:10.8px;line-height:10.8px;color:#0c0c28;font-weight:normal;white-space:pre;">Pivot</div><div style="position:absolute;left:710px;top:514px;width:175px;height:1px;background:#dcdcdc"></div><svg style="position:absolute;left:741px;top:499.5px" width="10" height="10" viewBox="0 0 10 10"><rect x="0.5" y="0.5" width="8.5" height="8.5" rx="1" fill="#f2f0ec" stroke="#7a9cc8" stroke-width="0.9"/><path d="M2.3 4.75 H7.2" stroke="#000" stroke-width="1.3"/></svg><svg style="position:absolute;left:751.5px;top:501.0px" width="7" height="7" viewBox="0 0 7 7"><path d="M3.5 1 L6 3.5 L3.5 6 L1 3.5 Z" fill="#8a1a8a" stroke="#8a1a8a" stroke-width="0.5"/></svg><div style="position:absolute;left:760.5px;top:500.36px;font-size:10.8px;line-height:10.8px;color:#0c0c28;font-weight:normal;white-space:pre;">Position</div><div style="position:absolute;left:710px;top:534px;width:175px;height:1px;background:#dcdcdc"></div><svg style="position:absolute;left:765.5px;top:521.0px" width="7" height="7" viewBox="0 0 7 7"><path d="M3.5 1 L6 3.5 L3.5 6 L1 3.5 Z" fill="#1010e0" stroke="#1010e0" stroke-width="0.5"/></svg><div style="position:absolute;left:774.5px;top:520.36px;font-size:10.8px;line-height:10.8px;color:#0c0c28;font-weight:normal;white-space:pre;">X</div><div style="position:absolute;left:710px;top:554px;width:175px;height:1px;background:#dcdcdc"></div><svg style="position:absolute;left:765.5px;top:541.0px" width="7" height="7" viewBox="0 0 7 7"><path d="M3.5 1 L6 3.5 L3.5 6 L1 3.5 Z" fill="#1010e0" stroke="#1010e0" stroke-width="0.5"/></svg><div style="position:absolute;left:774.5px;top:540.36px;font-size:10.8px;line-height:10.8px;color:#0c0c28;font-weight:normal;white-space:pre;">Y</div><div style="position:absolute;left:710px;top:574px;width:175px;height:1px;background:#dcdcdc"></div><svg style="position:absolute;left:765.5px;top:561.0px" width="7" height="7" viewBox="0 0 7 7"><path d="M3.5 1 L6 3.5 L3.5 6 L1 3.5 Z" fill="#1010e0" stroke="#1010e0" stroke-width="0.5"/></svg><div style="position:absolute;left:774.5px;top:560.36px;font-size:10.8px;line-height:10.8px;color:#0c0c28;font-weight:normal;white-space:pre;">Z</div><div style="position:absolute;left:710px;top:594px;width:175px;height:1px;background:#dcdcdc"></div><svg style="position:absolute;left:741px;top:579.5px" width="10" height="10" viewBox="0 0 10 10"><rect x="0.5" y="0.5" width="8.5" height="8.5" rx="1" fill="#f2f0ec" stroke="#7a9cc8" stroke-width="0.9"/><path d="M2.3 4.75 H7.2 M4.75 2.3 V7.2" stroke="#000" stroke-width="1.3"/></svg><svg style="position:absolute;left:751.5px;top:581.0px" width="7" height="7" viewBox="0 0 7 7"><path d="M3.5 1 L6 3.5 L3.5 6 L1 3.5 Z" fill="#8a1a8a" stroke="#8a1a8a" stroke-width="0.5"/></svg><div style="position:absolute;left:760.5px;top:580.36px;font-size:10.8px;line-height:10.8px;color:#0c0c28;font-weight:normal;white-space:pre;">Rotation</div><div style="position:absolute;left:710px;top:614px;width:175px;height:1px;background:#dcdcdc"></div><svg style="position:absolute;left:741px;top:599.5px" width="10" height="10" viewBox="0 0 10 10"><rect x="0.5" y="0.5" width="8.5" height="8.5" rx="1" fill="#f2f0ec" stroke="#7a9cc8" stroke-width="0.9"/><path d="M2.3 4.75 H7.2 M4.75 2.3 V7.2" stroke="#000" stroke-width="1.3"/></svg><svg style="position:absolute;left:751.5px;top:601.0px" width="7" height="7" viewBox="0 0 7 7"><path d="M3.5 1 L6 3.5 L3.5 6 L1 3.5 Z" fill="#8a1a8a" stroke="#8a1a8a" stroke-width="0.5"/></svg><div style="position:absolute;left:760.5px;top:600.36px;font-size:10.8px;line-height:10.8px;color:#0c0c28;font-weight:normal;white-space:pre;">Scale</div><div style="position:absolute;left:710px;top:634px;width:175px;height:1px;background:#dcdcdc"></div><svg style="position:absolute;left:751.5px;top:621.0px" width="7" height="7" viewBox="0 0 7 7"><path d="M3.5 1 L6 3.5 L3.5 6 L1 3.5 Z" fill="#1a8a8a" stroke="#1a8a8a" stroke-width="0.5"/></svg><div style="position:absolute;left:760.5px;top:620.36px;font-size:10.8px;line-height:10.8px;color:#0c0c28;font-weight:normal;white-space:pre;">Name</div><div style="position:absolute;left:710px;top:654px;width:175px;height:1px;background:#dcdcdc"></div><svg style="position:absolute;left:751.5px;top:641.0px" width="7" height="7" viewBox="0 0 7 7"><path d="M3.5 1 L6 3.5 L3.5 6 L1 3.5 Z" fill="#1010e0" stroke="#1010e0" stroke-width="0.5"/></svg><div style="position:absolute;left:760.5px;top:640.36px;font-size:10.8px;line-height:10.8px;color:#0c0c28;font-weight:normal;white-space:pre;">Alpha</div><div style="position:absolute;left:710px;top:674px;width:175px;height:1px;background:#dcdcdc"></div><svg style="position:absolute;left:751.5px;top:661.0px" width="7" height="7" viewBox="0 0 7 7"><path d="M3.5 1 L6 3.5 L3.5 6 L1 3.5 Z" fill="#1010e0" stroke="#1010e0" stroke-width="0.5"/></svg><div style="position:absolute;left:760.5px;top:660.36px;font-size:10.8px;line-height:10.8px;color:#0c0c28;font-weight:normal;white-space:pre;">Height</div><div style="position:absolute;left:710px;top:694px;width:175px;height:1px;background:#dcdcdc"></div><svg style="position:absolute;left:751.5px;top:681.0px" width="7" height="7" viewBox="0 0 7 7"><path d="M3.5 1 L6 3.5 L3.5 6 L1 3.5 Z" fill="#1010e0" stroke="#1010e0" stroke-width="0.5"/></svg><div style="position:absolute;left:760.5px;top:680.36px;font-size:10.8px;line-height:10.8px;color:#0c0c28;font-weight:normal;white-space:pre;">Width</div><div style="position:absolute;left:710px;top:714px;width:175px;height:1px;background:#dcdcdc"></div><svg style="position:absolute;left:751.5px;top:701.0px" width="7" height="7" viewBox="0 0 7 7"><path d="M3.5 1 L6 3.5 L3.5 6 L1 3.5 Z" fill="#20c8f0" stroke="#20c8f0" stroke-width="0.5"/></svg><div style="position:absolute;left:760.5px;top:700.36px;font-size:10.8px;line-height:10.8px;color:#0c0c28;font-weight:normal;white-space:pre;">TemplateDataColor</div><div style="position:absolute;left:710px;top:734px;width:175px;height:1px;background:#dcdcdc"></div><svg style="position:absolute;left:751.5px;top:721.0px" width="7" height="7" viewBox="0 0 7 7"><path d="M3.5 1 L6 3.5 L3.5 6 L1 3.5 Z" fill="#70e020" stroke="#70e020" stroke-width="0.5"/></svg><div style="position:absolute;left:760.5px;top:720.36px;font-size:10.8px;line-height:10.8px;color:#0c0c28;font-weight:normal;white-space:pre;">ShowInTemplateData</div><div style="position:absolute;left:710px;top:754px;width:175px;height:1px;background:#dcdcdc"></div><svg style="position:absolute;left:751.5px;top:741.0px" width="7" height="7" viewBox="0 0 7 7"><path d="M3.5 1 L6 3.5 L3.5 6 L1 3.5 Z" fill="#70e020" stroke="#70e020" stroke-width="0.5"/></svg><div style="position:absolute;left:760.5px;top:740.36px;font-size:10.8px;line-height:10.8px;color:#0c0c28;font-weight:normal;white-space:pre;">Visible</div><div style="position:absolute;left:710px;top:774px;width:175px;height:1px;background:#dcdcdc"></div><svg style="position:absolute;left:751.5px;top:761.0px" width="7" height="7" viewBox="0 0 7 7"><path d="M3.5 1 L6 3.5 L3.5 6 L1 3.5 Z" fill="#f4f4f4" stroke="#777" stroke-width="0.5"/></svg><div style="position:absolute;left:760.5px;top:760.36px;font-size:10.8px;line-height:10.8px;color:#0c0c28;font-weight:normal;white-space:pre;">MetaData</div><div style="position:absolute;left:710px;top:775px;width:175px;height:19px;background:#aaaae7"></div><div style="position:absolute;left:710px;top:794px;width:175px;height:1px;background:#dcdcdc"></div><svg style="position:absolute;left:727px;top:779.5px" width="10" height="10" viewBox="0 0 10 10"><rect x="0.5" y="0.5" width="8.5" height="8.5" rx="1" fill="#f2f0ec" stroke="#7a9cc8" stroke-width="0.9"/><path d="M2.3 4.75 H7.2" stroke="#000" stroke-width="1.3"/></svg><div style="position:absolute;left:738px;top:780.36px;font-size:10.8px;line-height:10.8px;color:#0c0c28;font-weight:bold;white-space:pre;">Stat Cat 1 Name</div><div style="position:absolute;left:710px;top:814px;width:175px;height:1px;background:#dcdcdc"></div><svg style="position:absolute;left:741px;top:799.5px" width="10" height="10" viewBox="0 0 10 10"><rect x="0.5" y="0.5" width="8.5" height="8.5" rx="1" fill="#f2f0ec" stroke="#7a9cc8" stroke-width="0.9"/><path d="M2.3 4.75 H7.2 M4.75 2.3 V7.2" stroke="#000" stroke-width="1.3"/></svg><div style="position:absolute;left:751.5px;top:800.36px;font-size:10.8px;line-height:10.8px;color:#0c0c28;font-weight:normal;white-space:pre;">AutoSqueeze</div><div style="position:absolute;left:710px;top:834px;width:175px;height:1px;background:#dcdcdc"></div><svg style="position:absolute;left:741px;top:819.5px" width="10" height="10" viewBox="0 0 10 10"><rect x="0.5" y="0.5" width="8.5" height="8.5" rx="1" fill="#f2f0ec" stroke="#7a9cc8" stroke-width="0.9"/><path d="M2.3 4.75 H7.2" stroke="#000" stroke-width="1.3"/></svg><div style="position:absolute;left:751.5px;top:820.36px;font-size:10.8px;line-height:10.8px;color:#0c0c28;font-weight:normal;white-space:pre;">BoundingBox</div><div style="position:absolute;left:710px;top:854px;width:175px;height:1px;background:#dcdcdc"></div><svg style="position:absolute;left:765.5px;top:841.0px" width="7" height="7" viewBox="0 0 7 7"><path d="M3.5 1 L6 3.5 L3.5 6 L1 3.5 Z" fill="#1010e0" stroke="#1010e0" stroke-width="0.5"/></svg><div style="position:absolute;left:774.5px;top:840.36px;font-size:10.8px;line-height:10.8px;color:#0c0c28;font-weight:normal;white-space:pre;">Depth</div><div style="position:absolute;left:710px;top:874px;width:175px;height:1px;background:#dcdcdc"></div><svg style="position:absolute;left:765.5px;top:861.0px" width="7" height="7" viewBox="0 0 7 7"><path d="M3.5 1 L6 3.5 L3.5 6 L1 3.5 Z" fill="#1010e0" stroke="#1010e0" stroke-width="0.5"/></svg><div style="position:absolute;left:774.5px;top:860.36px;font-size:10.8px;line-height:10.8px;color:#0c0c28;font-weight:normal;white-space:pre;">DepthScaled</div><div style="position:absolute;left:710px;top:894px;width:175px;height:1px;background:#dcdcdc"></div><svg style="position:absolute;left:765.5px;top:881.0px" width="7" height="7" viewBox="0 0 7 7"><path d="M3.5 1 L6 3.5 L3.5 6 L1 3.5 Z" fill="#1010e0" stroke="#1010e0" stroke-width="0.5"/></svg><div style="position:absolute;left:774.5px;top:880.36px;font-size:10.8px;line-height:10.8px;color:#0c0c28;font-weight:normal;white-space:pre;">Height</div><div style="position:absolute;left:710px;top:914px;width:175px;height:1px;background:#dcdcdc"></div><svg style="position:absolute;left:765.5px;top:901.0px" width="7" height="7" viewBox="0 0 7 7"><path d="M3.5 1 L6 3.5 L3.5 6 L1 3.5 Z" fill="#1010e0" stroke="#1010e0" stroke-width="0.5"/></svg><div style="position:absolute;left:774.5px;top:900.36px;font-size:10.8px;line-height:10.8px;color:#0c0c28;font-weight:normal;white-space:pre;">HeightScaled</div><div style="position:absolute;left:710px;top:934px;width:175px;height:1px;background:#dcdcdc"></div><svg style="position:absolute;left:765.5px;top:921.0px" width="7" height="7" viewBox="0 0 7 7"><path d="M3.5 1 L6 3.5 L3.5 6 L1 3.5 Z" fill="#1010e0" stroke="#1010e0" stroke-width="0.5"/></svg><div style="position:absolute;left:774.5px;top:920.36px;font-size:10.8px;line-height:10.8px;color:#0c0c28;font-weight:normal;white-space:pre;">Right</div><div style="position:absolute;left:710px;top:954px;width:175px;height:1px;background:#dcdcdc"></div><svg style="position:absolute;left:765.5px;top:941.0px" width="7" height="7" viewBox="0 0 7 7"><path d="M3.5 1 L6 3.5 L3.5 6 L1 3.5 Z" fill="#1010e0" stroke="#1010e0" stroke-width="0.5"/></svg><div style="position:absolute;left:774.5px;top:940.36px;font-size:10.8px;line-height:10.8px;color:#0c0c28;font-weight:normal;white-space:pre;">Top</div><div style="position:absolute;left:710px;top:974px;width:175px;height:1px;background:#dcdcdc"></div><svg style="position:absolute;left:765.5px;top:961.0px" width="7" height="7" viewBox="0 0 7 7"><path d="M3.5 1 L6 3.5 L3.5 6 L1 3.5 Z" fill="#1010e0" stroke="#1010e0" stroke-width="0.5"/></svg><div style="position:absolute;left:774.5px;top:960.36px;font-size:10.8px;line-height:10.8px;color:#0c0c28;font-weight:normal;white-space:pre;">Width</div><div style="position:absolute;left:710px;top:994px;width:175px;height:1px;background:#dcdcdc"></div><svg style="position:absolute;left:765.5px;top:981.0px" width="7" height="7" viewBox="0 0 7 7"><path d="M3.5 1 L6 3.5 L3.5 6 L1 3.5 Z" fill="#1010e0" stroke="#1010e0" stroke-width="0.5"/></svg><div style="position:absolute;left:774.5px;top:980.36px;font-size:10.8px;line-height:10.8px;color:#0c0c28;font-weight:normal;white-space:pre;">WidthScaled</div><div style="position:absolute;left:710px;top:1014px;width:175px;height:1px;background:#dcdcdc"></div><svg style="position:absolute;left:765.5px;top:1001.0px" width="7" height="7" viewBox="0 0 7 7"><path d="M3.5 1 L6 3.5 L3.5 6 L1 3.5 Z" fill="#1010e0" stroke="#1010e0" stroke-width="0.5"/></svg><div style="position:absolute;left:774.5px;top:1000.36px;font-size:10.8px;line-height:10.8px;color:#0c0c28;font-weight:normal;white-space:pre;">X</div><div style="position:absolute;left:710px;top:1034px;width:175px;height:1px;background:#dcdcdc"></div><svg style="position:absolute;left:765.5px;top:1021.0px" width="7" height="7" viewBox="0 0 7 7"><path d="M3.5 1 L6 3.5 L3.5 6 L1 3.5 Z" fill="#1010e0" stroke="#1010e0" stroke-width="0.5"/></svg><div style="position:absolute;left:774.5px;top:1020.36px;font-size:10.8px;line-height:10.8px;color:#0c0c28;font-weight:normal;white-space:pre;">Y</div><div style="position:absolute;left:710px;top:1054px;width:175px;height:1px;background:#dcdcdc"></div><svg style="position:absolute;left:765.5px;top:1041.0px" width="7" height="7" viewBox="0 0 7 7"><path d="M3.5 1 L6 3.5 L3.5 6 L1 3.5 Z" fill="#1010e0" stroke="#1010e0" stroke-width="0.5"/></svg><div style="position:absolute;left:774.5px;top:1040.36px;font-size:10.8px;line-height:10.8px;color:#0c0c28;font-weight:normal;white-space:pre;">Z</div><div style="position:absolute;left:710px;top:1074px;width:175px;height:1px;background:#dcdcdc"></div><svg style="position:absolute;left:741px;top:1059.5px" width="10" height="10" viewBox="0 0 10 10"><rect x="0.5" y="0.5" width="8.5" height="8.5" rx="1" fill="#f2f0ec" stroke="#7a9cc8" stroke-width="0.9"/><path d="M2.3 4.75 H7.2 M4.75 2.3 V7.2" stroke="#000" stroke-width="1.3"/></svg><div style="position:absolute;left:751.5px;top:1060.36px;font-size:10.8px;line-height:10.8px;color:#0c0c28;font-weight:normal;white-space:pre;">Events</div><div style="position:absolute;left:710px;top:1094px;width:175px;height:1px;background:#dcdcdc"></div><svg style="position:absolute;left:741px;top:1079.5px" width="10" height="10" viewBox="0 0 10 10"><rect x="0.5" y="0.5" width="8.5" height="8.5" rx="1" fill="#f2f0ec" stroke="#7a9cc8" stroke-width="0.9"/><path d="M2.3 4.75 H7.2 M4.75 2.3 V7.2" stroke="#000" stroke-width="1.3"/></svg><div style="position:absolute;left:751.5px;top:1080.36px;font-size:10.8px;line-height:10.8px;color:#0c0c28;font-weight:normal;white-space:pre;">Faces</div><div style="position:absolute;left:710px;top:1114px;width:175px;height:1px;background:#dcdcdc"></div><svg style="position:absolute;left:741px;top:1099.5px" width="10" height="10" viewBox="0 0 10 10"><rect x="0.5" y="0.5" width="8.5" height="8.5" rx="1" fill="#f2f0ec" stroke="#7a9cc8" stroke-width="0.9"/><path d="M2.3 4.75 H7.2 M4.75 2.3 V7.2" stroke="#000" stroke-width="1.3"/></svg><div style="position:absolute;left:751.5px;top:1100.36px;font-size:10.8px;line-height:10.8px;color:#0c0c28;font-weight:normal;white-space:pre;">TextureCoords</div><div style="position:absolute;left:710px;top:1134px;width:175px;height:1px;background:#dcdcdc"></div><svg style="position:absolute;left:741px;top:1119.5px" width="10" height="10" viewBox="0 0 10 10"><rect x="0.5" y="0.5" width="8.5" height="8.5" rx="1" fill="#f2f0ec" stroke="#7a9cc8" stroke-width="0.9"/><path d="M2.3 4.75 H7.2 M4.75 2.3 V7.2" stroke="#000" stroke-width="1.3"/></svg><div style="position:absolute;left:751.5px;top:1120.36px;font-size:10.8px;line-height:10.8px;color:#0c0c28;font-weight:normal;white-space:pre;">WordWrap</div><div style="position:absolute;left:710px;top:1154px;width:175px;height:1px;background:#dcdcdc"></div><svg style="position:absolute;left:741px;top:1139.5px" width="10" height="10" viewBox="0 0 10 10"><rect x="0.5" y="0.5" width="8.5" height="8.5" rx="1" fill="#f2f0ec" stroke="#7a9cc8" stroke-width="0.9"/><path d="M2.3 4.75 H7.2 M4.75 2.3 V7.2" stroke="#000" stroke-width="1.3"/></svg><svg style="position:absolute;left:751.5px;top:1141.0px" width="7" height="7" viewBox="0 0 7 7"><path d="M3.5 1 L6 3.5 L3.5 6 L1 3.5 Z" fill="#1a8a8a" stroke="#1a8a8a" stroke-width="0.5"/></svg><div style="position:absolute;left:760.5px;top:1140.36px;font-size:10.8px;line-height:10.8px;color:#0c0c28;font-weight:normal;white-space:pre;">TextWithTags</div><div style="position:absolute;left:710px;top:1174px;width:175px;height:1px;background:#dcdcdc"></div><svg style="position:absolute;left:741px;top:1159.5px" width="10" height="10" viewBox="0 0 10 10"><rect x="0.5" y="0.5" width="8.5" height="8.5" rx="1" fill="#f2f0ec" stroke="#7a9cc8" stroke-width="0.9"/><path d="M2.3 4.75 H7.2" stroke="#000" stroke-width="1.3"/></svg><svg style="position:absolute;left:751.5px;top:1161.0px" width="7" height="7" viewBox="0 0 7 7"><path d="M3.5 1 L6 3.5 L3.5 6 L1 3.5 Z" fill="#8a1a8a" stroke="#8a1a8a" stroke-width="0.5"/></svg><div style="position:absolute;left:760.5px;top:1160.36px;font-size:10.8px;line-height:10.8px;color:#0c0c28;font-weight:normal;white-space:pre;">Pivot</div><div style="position:absolute;left:710px;top:1194px;width:175px;height:1px;background:#dcdcdc"></div><svg style="position:absolute;left:765.5px;top:1181.0px" width="7" height="7" viewBox="0 0 7 7"><path d="M3.5 1 L6 3.5 L3.5 6 L1 3.5 Z" fill="#1010e0" stroke="#1010e0" stroke-width="0.5"/></svg><div style="position:absolute;left:774.5px;top:1180.36px;font-size:10.8px;line-height:10.8px;color:#0c0c28;font-weight:normal;white-space:pre;">X</div><div style="position:absolute;left:710px;top:1214px;width:175px;height:1px;background:#dcdcdc"></div><svg style="position:absolute;left:765.5px;top:1201.0px" width="7" height="7" viewBox="0 0 7 7"><path d="M3.5 1 L6 3.5 L3.5 6 L1 3.5 Z" fill="#1010e0" stroke="#1010e0" stroke-width="0.5"/></svg><div style="position:absolute;left:774.5px;top:1200.36px;font-size:10.8px;line-height:10.8px;color:#0c0c28;font-weight:normal;white-space:pre;">Y</div><div style="position:absolute;left:710px;top:1234px;width:175px;height:1px;background:#dcdcdc"></div><svg style="position:absolute;left:765.5px;top:1221.0px" width="7" height="7" viewBox="0 0 7 7"><path d="M3.5 1 L6 3.5 L3.5 6 L1 3.5 Z" fill="#1010e0" stroke="#1010e0" stroke-width="0.5"/></svg><div style="position:absolute;left:774.5px;top:1220.36px;font-size:10.8px;line-height:10.8px;color:#0c0c28;font-weight:normal;white-space:pre;">Z</div><div style="position:absolute;left:885px;top:356px;width:17px;height:879px;background:linear-gradient(90deg,#a8a8a8,#8e8e8e)"></div><div style="position:absolute;left:886px;top:356px;width:15px;height:18px;background:linear-gradient(#cecece,#b0b0b0);border:1px solid #8a8a8a;border-radius:3px;box-sizing:border-box"></div><svg style="position:absolute;left:886px;top:356px" width="15" height="18"><path d="M3 11.5 L7.5 6 L12 11.5 Z" fill="#707070"/></svg><div style="position:absolute;left:886px;top:391px;width:15px;height:341px;background:linear-gradient(90deg,#c8c8c8,#b8b8b8);border:1px solid #8e8e8e;border-radius:3px;box-sizing:border-box"></div><div style="position:absolute;left:886px;top:1217px;width:15px;height:17px;background:linear-gradient(#c6c6c6,#b0b0b0);border:1px solid #8a8a8a;border-radius:3px;box-sizing:border-box"></div><svg style="position:absolute;left:886px;top:1217px" width="15" height="17"><path d="M3 6 L7.5 11.5 L12 6 Z" fill="#707070"/></svg><div style="position:absolute;left:709px;top:1235px;width:194px;height:1px;background:#e8e8e8"></div><div style="position:absolute;left:709px;top:1239px;width:194px;height:18px;background:linear-gradient(#b4b4b4,#a8a8a8);border:1px solid #7c7c7c;border-radius:2px;box-sizing:border-box"></div><div style="position:absolute;left:713px;top:1243.36px;font-size:10.8px;line-height:10.8px;color:#101030;font-weight:normal;white-space:pre;">Settings</div><svg style="position:absolute;left:889px;top:1242px" width="10" height="12" viewBox="0 0 10 12"><rect x="3" y="1" width="4" height="6" fill="none" stroke="#000" stroke-width="1.5"/><line x1="1" y1="7.5" x2="9" y2="7.5" stroke="#000" stroke-width="1.5"/><line x1="5" y1="7.5" x2="5" y2="11.5" stroke="#000" stroke-width="1.5"/></svg><div style="position:absolute;left:712px;top:1272px;width:188px;height:40px;border:1px solid #8c8c8c;box-sizing:border-box"></div><div style="position:absolute;left:720px;top:1266px;width:36px;height:12px;background:#ababab"></div><div style="position:absolute;left:722px;top:1266.86px;font-size:10.8px;line-height:10.8px;color:#1a1a30;font-weight:normal;white-space:pre;">Timing</div><div style="position:absolute;left:724px;top:1288px;width:11px;height:11px;background:#f0f0f0;border:1px solid #5a5a5a;box-sizing:border-box"></div><svg style="position:absolute;left:724px;top:1288px" width="11" height="11"><path d="M2 5.5 L4.5 8 L9 2.5" stroke="#000" stroke-width="1.8" fill="none"/></svg><div style="position:absolute;left:739px;top:1287.86px;font-size:10.8px;line-height:10.8px;color:#101030;font-weight:normal;white-space:pre;">Visual Logic should run after</div><div style="position:absolute;left:739px;top:1299.86px;font-size:10.8px;line-height:10.8px;color:#101030;font-weight:normal;white-space:pre;">scene directors are advanced</div><div style="position:absolute;left:907px;top:335px;width:1482px;height:22px;background:#959595"></div><div style="position:absolute;left:907px;top:335px;width:1482px;height:1px;background:#b4b4b4"></div><svg style="position:absolute;left:907px;top:336px" width="205" height="22" viewBox="0 0 205 22"><defs><linearGradient id="tb2" x1="0" y1="0" x2="0" y2="1"><stop offset="0" stop-color="#f8f8f8"/><stop offset="1" stop-color="#a8a8a8"/></linearGradient></defs><path d="M0.5 21 V0.5 H94 L100 6.5 V21 Z" fill="#aaaae7" stroke="#9a9aa8" stroke-width="1"/><path d="M102.5 21 V0.5 H196 L202 6.5 V21 Z" fill="url(#tb2)" stroke="#7a7a7a" stroke-width="1"/></svg><div style="position:absolute;left:912.00px;top:342.69px;width:90px;text-align:center;font-size:11px;line-height:11px;color:#ffffff;font-weight:bold;white-space:pre;">VLogic1</div><div style="position:absolute;left:1014.00px;top:342.69px;width:90px;text-align:center;font-size:11px;line-height:11px;color:#101030;font-weight:normal;white-space:pre;">VLogic2</div><div style="position:absolute;left:907px;top:357px;width:1482px;height:952px;background:#989898"></div><div style="position:absolute;left:903px;top:355px;width:4px;height:954px;background:#b0b0b0"></div><div style="position:absolute;left:1008px;top:356px;width:1381px;height:1px;background:#6a6a6a"></div><div style="position:absolute;left:992px;top:387px;width:105px;height:35px;background:#000"></div><div style="position:absolute;left:993px;top:388px;width:103px;height:16px;background:#5a5a5a"></div><div style="position:absolute;left:993px;top:405px;width:103px;height:16px;background:#c0c0c0"></div><div style="position:absolute;left:992.00px;top:390.94px;width:105px;text-align:center;font-size:10.7px;line-height:10.7px;color:#dcdcdc;font-weight:normal;white-space:pre;">Stat Cat 1 Name</div><div style="position:absolute;left:988.00px;top:407.94px;width:105px;text-align:right;font-size:10.7px;line-height:10.7px;color:#1c1c34;font-weight:normal;white-space:pre;">BoundingBox.Top</div><div style="position:absolute;left:992.00px;top:426.24px;width:105px;text-align:center;font-size:10.7px;line-height:10.7px;color:#3a3a3a;font-weight:normal;white-space:pre;">59.0000</div><div style="position:absolute;left:987px;top:447px;width:105px;height:35px;background:#000"></div><div style="position:absolute;left:988px;top:448px;width:103px;height:16px;background:#5a5a5a"></div><div style="position:absolute;left:988px;top:465px;width:103px;height:16px;background:#c0c0c0"></div><div style="position:absolute;left:987.00px;top:450.94px;width:105px;text-align:center;font-size:10.7px;line-height:10.7px;color:#dcdcdc;font-weight:normal;white-space:pre;">Stat Cat 1 Name</div><div style="position:absolute;left:983.00px;top:467.94px;width:105px;text-align:right;font-size:10.7px;line-height:10.7px;color:#1c1c34;font-weight:normal;white-space:pre;">BoundingBox.Y</div><div style="position:absolute;left:987.00px;top:486.24px;width:105px;text-align:center;font-size:10.7px;line-height:10.7px;color:#3a3a3a;font-weight:normal;white-space:pre;">-14.0000</div><div style="position:absolute;left:1167px;top:402px;width:105px;height:67px;background:#000"></div><div style="position:absolute;left:1168px;top:403px;width:103px;height:16px;background:#5cc0b1"></div><div style="position:absolute;left:1168px;top:420px;width:103px;height:48px;background:#c0c0c0"></div><div style="position:absolute;left:1167.00px;top:405.94px;width:105px;text-align:center;font-size:10.7px;line-height:10.7px;color:#0c0c28;font-weight:normal;white-space:pre;">Add</div><div style="position:absolute;left:1173px;top:422.74px;font-size:10.7px;line-height:10.7px;color:#1c1c34;font-weight:normal;white-space:pre;">Base</div><div style="position:absolute;left:1174px;top:438.27px;font-size:11.5px;line-height:11.5px;color:#1c1c34;font-weight:normal;white-space:pre;">+</div><div style="position:absolute;left:1174px;top:454.27px;font-size:11.5px;line-height:11.5px;color:#1c1c34;font-weight:normal;white-space:pre;">+</div><div style="position:absolute;left:1213.00px;top:438.94px;width:50px;text-align:right;font-size:10.7px;line-height:10.7px;color:#1c1c34;font-weight:normal;white-space:pre;">Out</div><div style="position:absolute;left:1167.00px;top:472.94px;width:105px;text-align:center;font-size:10.7px;line-height:10.7px;color:#3a3a3a;font-weight:normal;white-space:pre;">45.0000</div><div style="position:absolute;left:1337px;top:417px;width:105px;height:51px;background:#000"></div><div style="position:absolute;left:1338px;top:418px;width:103px;height:16px;background:#5cc0b1"></div><div style="position:absolute;left:1338px;top:435px;width:103px;height:32px;background:#c0c0c0"></div><div style="position:absolute;left:1337.00px;top:420.94px;width:105px;text-align:center;font-size:10.7px;line-height:10.7px;color:#0c0c28;font-weight:normal;white-space:pre;">Divide</div><div style="position:absolute;left:1343px;top:438.14px;font-size:10.7px;line-height:10.7px;color:#1c1c34;font-weight:normal;white-space:pre;">Base</div><div style="position:absolute;left:1343px;top:453.64px;font-size:10.7px;line-height:10.7px;color:#1c1c34;font-weight:normal;white-space:pre;">Divisor</div><div style="position:absolute;left:1381px;top:444.84px;font-size:12px;line-height:12px;color:#0a0a14;font-weight:normal;white-space:pre;">/ 2.0</div><div style="position:absolute;left:1337.00px;top:472.44px;width:105px;text-align:center;font-size:10.7px;line-height:10.7px;color:#3a3a3a;font-weight:normal;white-space:pre;">22.5000</div><div style="position:absolute;left:1527px;top:427px;width:105px;height:35px;background:#000"></div><div style="position:absolute;left:1528px;top:428px;width:103px;height:16px;background:#5a5a5a"></div><div style="position:absolute;left:1528px;top:445px;width:103px;height:16px;background:#c0c0c0"></div><div style="position:absolute;left:1527.00px;top:430.94px;width:105px;text-align:center;font-size:10.7px;line-height:10.7px;color:#dcdcdc;font-weight:normal;white-space:pre;">Stat Cat 1 Name</div><div style="position:absolute;left:1527.00px;top:447.94px;width:105px;text-align:center;font-size:10.7px;line-height:10.7px;color:#1c1c34;font-weight:normal;white-space:pre;">Pivot.Y</div><div style="position:absolute;left:1527.00px;top:466.24px;width:105px;text-align:center;font-size:10.7px;line-height:10.7px;color:#3a3a3a;font-weight:normal;white-space:pre;">22.5000</div><div style="position:absolute;left:987px;top:537px;width:105px;height:35px;background:#000"></div><div style="position:absolute;left:988px;top:538px;width:103px;height:16px;background:#5a5a5a"></div><div style="position:absolute;left:988px;top:555px;width:103px;height:16px;background:#c0c0c0"></div><div style="position:absolute;left:987.00px;top:540.94px;width:105px;text-align:center;font-size:10.7px;line-height:10.7px;color:#dcdcdc;font-weight:normal;white-space:pre;">Stat Cat 1 #</div><div style="position:absolute;left:983.00px;top:557.94px;width:105px;text-align:right;font-size:10.7px;line-height:10.7px;color:#1c1c34;font-weight:normal;white-space:pre;">BoundingBox.Top</div><div style="position:absolute;left:987.00px;top:576.24px;width:105px;text-align:center;font-size:10.7px;line-height:10.7px;color:#3a3a3a;font-weight:normal;white-space:pre;">34.0000</div><div style="position:absolute;left:992px;top:597px;width:105px;height:35px;background:#000"></div><div style="position:absolute;left:993px;top:598px;width:103px;height:16px;background:#5a5a5a"></div><div style="position:absolute;left:993px;top:615px;width:103px;height:16px;background:#c0c0c0"></div><div style="position:absolute;left:992.00px;top:600.94px;width:105px;text-align:center;font-size:10.7px;line-height:10.7px;color:#dcdcdc;font-weight:normal;white-space:pre;">Stat Cat 1 #</div><div style="position:absolute;left:988.00px;top:617.94px;width:105px;text-align:right;font-size:10.7px;line-height:10.7px;color:#1c1c34;font-weight:normal;white-space:pre;">BoundingBox.Y</div><div style="position:absolute;left:992.00px;top:636.24px;width:105px;text-align:center;font-size:10.7px;line-height:10.7px;color:#3a3a3a;font-weight:normal;white-space:pre;">-8.0000</div><div style="position:absolute;left:1177px;top:557px;width:105px;height:67px;background:#000"></div><div style="position:absolute;left:1178px;top:558px;width:103px;height:16px;background:#5cc0b1"></div><div style="position:absolute;left:1178px;top:575px;width:103px;height:48px;background:#c0c0c0"></div><div style="position:absolute;left:1177.00px;top:560.94px;width:105px;text-align:center;font-size:10.7px;line-height:10.7px;color:#0c0c28;font-weight:normal;white-space:pre;">Add</div><div style="position:absolute;left:1183px;top:577.74px;font-size:10.7px;line-height:10.7px;color:#1c1c34;font-weight:normal;white-space:pre;">Base</div><div style="position:absolute;left:1184px;top:593.27px;font-size:11.5px;line-height:11.5px;color:#1c1c34;font-weight:normal;white-space:pre;">+</div><div style="position:absolute;left:1184px;top:609.27px;font-size:11.5px;line-height:11.5px;color:#1c1c34;font-weight:normal;white-space:pre;">+</div><div style="position:absolute;left:1223.00px;top:593.94px;width:50px;text-align:right;font-size:10.7px;line-height:10.7px;color:#1c1c34;font-weight:normal;white-space:pre;">Out</div><div style="position:absolute;left:1177.00px;top:627.94px;width:105px;text-align:center;font-size:10.7px;line-height:10.7px;color:#3a3a3a;font-weight:normal;white-space:pre;">26.0000</div><div style="position:absolute;left:1342px;top:572px;width:105px;height:51px;background:#000"></div><div style="position:absolute;left:1343px;top:573px;width:103px;height:16px;background:#5cc0b1"></div><div style="position:absolute;left:1343px;top:590px;width:103px;height:32px;background:#c0c0c0"></div><div style="position:absolute;left:1342.00px;top:575.94px;width:105px;text-align:center;font-size:10.7px;line-height:10.7px;color:#0c0c28;font-weight:normal;white-space:pre;">Divide</div><div style="position:absolute;left:1348px;top:593.14px;font-size:10.7px;line-height:10.7px;color:#1c1c34;font-weight:normal;white-space:pre;">Base</div><div style="position:absolute;left:1348px;top:608.64px;font-size:10.7px;line-height:10.7px;color:#1c1c34;font-weight:normal;white-space:pre;">Divisor</div><div style="position:absolute;left:1386px;top:599.84px;font-size:12px;line-height:12px;color:#0a0a14;font-weight:normal;white-space:pre;">/ 2.0</div><div style="position:absolute;left:1342.00px;top:627.44px;width:105px;text-align:center;font-size:10.7px;line-height:10.7px;color:#3a3a3a;font-weight:normal;white-space:pre;">13.0000</div><div style="position:absolute;left:1522px;top:582px;width:105px;height:35px;background:#000"></div><div style="position:absolute;left:1523px;top:583px;width:103px;height:16px;background:#5a5a5a"></div><div style="position:absolute;left:1523px;top:600px;width:103px;height:16px;background:#c0c0c0"></div><div style="position:absolute;left:1522.00px;top:585.94px;width:105px;text-align:center;font-size:10.7px;line-height:10.7px;color:#dcdcdc;font-weight:normal;white-space:pre;">Stat Cat 1 #</div><div style="position:absolute;left:1522.00px;top:602.94px;width:105px;text-align:center;font-size:10.7px;line-height:10.7px;color:#1c1c34;font-weight:normal;white-space:pre;">Pivot.Y</div><div style="position:absolute;left:1522.00px;top:621.24px;width:105px;text-align:center;font-size:10.7px;line-height:10.7px;color:#3a3a3a;font-weight:normal;white-space:pre;">13.0000</div><div style="position:absolute;left:987px;top:677px;width:105px;height:35px;background:#000"></div><div style="position:absolute;left:988px;top:678px;width:103px;height:16px;background:#5a5a5a"></div><div style="position:absolute;left:988px;top:695px;width:103px;height:16px;background:#c0c0c0"></div><div style="position:absolute;left:987.00px;top:680.94px;width:105px;text-align:center;font-size:10.7px;line-height:10.7px;color:#dcdcdc;font-weight:normal;white-space:pre;">Stat Cat 2 Name</div><div style="position:absolute;left:983.00px;top:697.94px;width:105px;text-align:right;font-size:10.7px;line-height:10.7px;color:#1c1c34;font-weight:normal;white-space:pre;">BoundingBox.Top</div><div style="position:absolute;left:987.00px;top:716.24px;width:105px;text-align:center;font-size:10.7px;line-height:10.7px;color:#3a3a3a;font-weight:normal;white-space:pre;">59.0000</div><div style="position:absolute;left:977px;top:762px;width:105px;height:35px;background:#000"></div><div style="position:absolute;left:978px;top:763px;width:103px;height:16px;background:#5a5a5a"></div><div style="position:absolute;left:978px;top:780px;width:103px;height:16px;background:#c0c0c0"></div><div style="position:absolute;left:977.00px;top:765.94px;width:105px;text-align:center;font-size:10.7px;line-height:10.7px;color:#dcdcdc;font-weight:normal;white-space:pre;">Stat Cat 2 Name</div><div style="position:absolute;left:973.00px;top:782.94px;width:105px;text-align:right;font-size:10.7px;line-height:10.7px;color:#1c1c34;font-weight:normal;white-space:pre;">BoundingBox.Y</div><div style="position:absolute;left:977.00px;top:801.24px;width:105px;text-align:center;font-size:10.7px;line-height:10.7px;color:#3a3a3a;font-weight:normal;white-space:pre;">-14.0000</div><div style="position:absolute;left:1177px;top:697px;width:105px;height:67px;background:#000"></div><div style="position:absolute;left:1178px;top:698px;width:103px;height:16px;background:#5cc0b1"></div><div style="position:absolute;left:1178px;top:715px;width:103px;height:48px;background:#c0c0c0"></div><div style="position:absolute;left:1177.00px;top:700.94px;width:105px;text-align:center;font-size:10.7px;line-height:10.7px;color:#0c0c28;font-weight:normal;white-space:pre;">Add</div><div style="position:absolute;left:1183px;top:717.74px;font-size:10.7px;line-height:10.7px;color:#1c1c34;font-weight:normal;white-space:pre;">Base</div><div style="position:absolute;left:1184px;top:733.27px;font-size:11.5px;line-height:11.5px;color:#1c1c34;font-weight:normal;white-space:pre;">+</div><div style="position:absolute;left:1184px;top:749.27px;font-size:11.5px;line-height:11.5px;color:#1c1c34;font-weight:normal;white-space:pre;">+</div><div style="position:absolute;left:1223.00px;top:733.94px;width:50px;text-align:right;font-size:10.7px;line-height:10.7px;color:#1c1c34;font-weight:normal;white-space:pre;">Out</div><div style="position:absolute;left:1177.00px;top:767.94px;width:105px;text-align:center;font-size:10.7px;line-height:10.7px;color:#3a3a3a;font-weight:normal;white-space:pre;">45.0000</div><div style="position:absolute;left:1342px;top:712px;width:105px;height:51px;background:#000"></div><div style="position:absolute;left:1343px;top:713px;width:103px;height:16px;background:#5cc0b1"></div><div style="position:absolute;left:1343px;top:730px;width:103px;height:32px;background:#c0c0c0"></div><div style="position:absolute;left:1342.00px;top:715.94px;width:105px;text-align:center;font-size:10.7px;line-height:10.7px;color:#0c0c28;font-weight:normal;white-space:pre;">Divide</div><div style="position:absolute;left:1348px;top:733.14px;font-size:10.7px;line-height:10.7px;color:#1c1c34;font-weight:normal;white-space:pre;">Base</div><div style="position:absolute;left:1348px;top:748.64px;font-size:10.7px;line-height:10.7px;color:#1c1c34;font-weight:normal;white-space:pre;">Divisor</div><div style="position:absolute;left:1386px;top:739.84px;font-size:12px;line-height:12px;color:#0a0a14;font-weight:normal;white-space:pre;">/ 2.0</div><div style="position:absolute;left:1342.00px;top:767.44px;width:105px;text-align:center;font-size:10.7px;line-height:10.7px;color:#3a3a3a;font-weight:normal;white-space:pre;">22.5000</div><div style="position:absolute;left:1522px;top:727px;width:105px;height:35px;background:#000"></div><div style="position:absolute;left:1523px;top:728px;width:103px;height:16px;background:#5a5a5a"></div><div style="position:absolute;left:1523px;top:745px;width:103px;height:16px;background:#c0c0c0"></div><div style="position:absolute;left:1522.00px;top:730.94px;width:105px;text-align:center;font-size:10.7px;line-height:10.7px;color:#dcdcdc;font-weight:normal;white-space:pre;">Stat Cat 2 Name</div><div style="position:absolute;left:1522.00px;top:747.94px;width:105px;text-align:center;font-size:10.7px;line-height:10.7px;color:#1c1c34;font-weight:normal;white-space:pre;">Pivot.Y</div><div style="position:absolute;left:1522.00px;top:766.24px;width:105px;text-align:center;font-size:10.7px;line-height:10.7px;color:#3a3a3a;font-weight:normal;white-space:pre;">22.5000</div><div style="position:absolute;left:992px;top:837px;width:105px;height:35px;background:#000"></div><div style="position:absolute;left:993px;top:838px;width:103px;height:16px;background:#5a5a5a"></div><div style="position:absolute;left:993px;top:855px;width:103px;height:16px;background:#c0c0c0"></div><div style="position:absolute;left:992.00px;top:840.94px;width:105px;text-align:center;font-size:10.7px;line-height:10.7px;color:#dcdcdc;font-weight:normal;white-space:pre;">Stat Cat 2 #</div><div style="position:absolute;left:988.00px;top:857.94px;width:105px;text-align:right;font-size:10.7px;line-height:10.7px;color:#1c1c34;font-weight:normal;white-space:pre;">BoundingBox.Top</div><div style="position:absolute;left:992.00px;top:876.24px;width:105px;text-align:center;font-size:10.7px;line-height:10.7px;color:#3a3a3a;font-weight:normal;white-space:pre;">34.0000</div><div style="position:absolute;left:982px;top:922px;width:105px;height:35px;background:#000"></div><div style="position:absolute;left:983px;top:923px;width:103px;height:16px;background:#5a5a5a"></div><div style="position:absolute;left:983px;top:940px;width:103px;height:16px;background:#c0c0c0"></div><div style="position:absolute;left:982.00px;top:925.94px;width:105px;text-align:center;font-size:10.7px;line-height:10.7px;color:#dcdcdc;font-weight:normal;white-space:pre;">Stat Cat 2 #</div><div style="position:absolute;left:978.00px;top:942.94px;width:105px;text-align:right;font-size:10.7px;line-height:10.7px;color:#1c1c34;font-weight:normal;white-space:pre;">BoundingBox.Y</div><div style="position:absolute;left:982.00px;top:961.24px;width:105px;text-align:center;font-size:10.7px;line-height:10.7px;color:#3a3a3a;font-weight:normal;white-space:pre;">-8.0000</div><div style="position:absolute;left:1182px;top:857px;width:105px;height:67px;background:#000"></div><div style="position:absolute;left:1183px;top:858px;width:103px;height:16px;background:#5cc0b1"></div><div style="position:absolute;left:1183px;top:875px;width:103px;height:48px;background:#c0c0c0"></div><div style="position:absolute;left:1182.00px;top:860.94px;width:105px;text-align:center;font-size:10.7px;line-height:10.7px;color:#0c0c28;font-weight:normal;white-space:pre;">Add</div><div style="position:absolute;left:1188px;top:877.74px;font-size:10.7px;line-height:10.7px;color:#1c1c34;font-weight:normal;white-space:pre;">Base</div><div style="position:absolute;left:1189px;top:893.27px;font-size:11.5px;line-height:11.5px;color:#1c1c34;font-weight:normal;white-space:pre;">+</div><div style="position:absolute;left:1189px;top:909.27px;font-size:11.5px;line-height:11.5px;color:#1c1c34;font-weight:normal;white-space:pre;">+</div><div style="position:absolute;left:1228.00px;top:893.94px;width:50px;text-align:right;font-size:10.7px;line-height:10.7px;color:#1c1c34;font-weight:normal;white-space:pre;">Out</div><div style="position:absolute;left:1182.00px;top:927.94px;width:105px;text-align:center;font-size:10.7px;line-height:10.7px;color:#3a3a3a;font-weight:normal;white-space:pre;">26.0000</div><div style="position:absolute;left:1347px;top:872px;width:105px;height:51px;background:#000"></div><div style="position:absolute;left:1348px;top:873px;width:103px;height:16px;background:#5cc0b1"></div><div style="position:absolute;left:1348px;top:890px;width:103px;height:32px;background:#c0c0c0"></div><div style="position:absolute;left:1347.00px;top:875.94px;width:105px;text-align:center;font-size:10.7px;line-height:10.7px;color:#0c0c28;font-weight:normal;white-space:pre;">Divide</div><div style="position:absolute;left:1353px;top:893.14px;font-size:10.7px;line-height:10.7px;color:#1c1c34;font-weight:normal;white-space:pre;">Base</div><div style="position:absolute;left:1353px;top:908.64px;font-size:10.7px;line-height:10.7px;color:#1c1c34;font-weight:normal;white-space:pre;">Divisor</div><div style="position:absolute;left:1391px;top:899.84px;font-size:12px;line-height:12px;color:#0a0a14;font-weight:normal;white-space:pre;">/ 2.0</div><div style="position:absolute;left:1347.00px;top:927.44px;width:105px;text-align:center;font-size:10.7px;line-height:10.7px;color:#3a3a3a;font-weight:normal;white-space:pre;">13.0000</div><div style="position:absolute;left:1532px;top:882px;width:105px;height:35px;background:#000"></div><div style="position:absolute;left:1533px;top:883px;width:103px;height:16px;background:#5a5a5a"></div><div style="position:absolute;left:1533px;top:900px;width:103px;height:16px;background:#c0c0c0"></div><div style="position:absolute;left:1532.00px;top:885.94px;width:105px;text-align:center;font-size:10.7px;line-height:10.7px;color:#dcdcdc;font-weight:normal;white-space:pre;">Stat Cat 2 #</div><div style="position:absolute;left:1532.00px;top:902.94px;width:105px;text-align:center;font-size:10.7px;line-height:10.7px;color:#1c1c34;font-weight:normal;white-space:pre;">Pivot.Y</div><div style="position:absolute;left:1532.00px;top:921.24px;width:105px;text-align:center;font-size:10.7px;line-height:10.7px;color:#3a3a3a;font-weight:normal;white-space:pre;">13.0000</div><div style="position:absolute;left:1677px;top:387px;width:105px;height:35px;background:#000"></div><div style="position:absolute;left:1678px;top:388px;width:103px;height:16px;background:#5a5a5a"></div><div style="position:absolute;left:1678px;top:405px;width:103px;height:16px;background:#c0c0c0"></div><div style="position:absolute;left:1677.00px;top:390.94px;width:105px;text-align:center;font-size:10.7px;line-height:10.7px;color:#dcdcdc;font-weight:normal;white-space:pre;">Stat Cat 3 Name</div><div style="position:absolute;left:1673.00px;top:407.94px;width:105px;text-align:right;font-size:10.7px;line-height:10.7px;color:#1c1c34;font-weight:normal;white-space:pre;">BoundingBox.Top</div><div style="position:absolute;left:1677.00px;top:426.24px;width:105px;text-align:center;font-size:10.7px;line-height:10.7px;color:#3a3a3a;font-weight:normal;white-space:pre;">59.0000</div><div style="position:absolute;left:1667px;top:472px;width:105px;height:35px;background:#000"></div><div style="position:absolute;left:1668px;top:473px;width:103px;height:16px;background:#5a5a5a"></div><div style="position:absolute;left:1668px;top:490px;width:103px;height:16px;background:#c0c0c0"></div><div style="position:absolute;left:1667.00px;top:475.94px;width:105px;text-align:center;font-size:10.7px;line-height:10.7px;color:#dcdcdc;font-weight:normal;white-space:pre;">Stat Cat 3 Name</div><div style="position:absolute;left:1663.00px;top:492.94px;width:105px;text-align:right;font-size:10.7px;line-height:10.7px;color:#1c1c34;font-weight:normal;white-space:pre;">BoundingBox.Y</div><div style="position:absolute;left:1667.00px;top:511.24px;width:105px;text-align:center;font-size:10.7px;line-height:10.7px;color:#3a3a3a;font-weight:normal;white-space:pre;">-14.0000</div><div style="position:absolute;left:1867px;top:407px;width:105px;height:67px;background:#000"></div><div style="position:absolute;left:1868px;top:408px;width:103px;height:16px;background:#5cc0b1"></div><div style="position:absolute;left:1868px;top:425px;width:103px;height:48px;background:#c0c0c0"></div><div style="position:absolute;left:1867.00px;top:410.94px;width:105px;text-align:center;font-size:10.7px;line-height:10.7px;color:#0c0c28;font-weight:normal;white-space:pre;">Add</div><div style="position:absolute;left:1873px;top:427.74px;font-size:10.7px;line-height:10.7px;color:#1c1c34;font-weight:normal;white-space:pre;">Base</div><div style="position:absolute;left:1874px;top:443.27px;font-size:11.5px;line-height:11.5px;color:#1c1c34;font-weight:normal;white-space:pre;">+</div><div style="position:absolute;left:1874px;top:459.27px;font-size:11.5px;line-height:11.5px;color:#1c1c34;font-weight:normal;white-space:pre;">+</div><div style="position:absolute;left:1913.00px;top:443.94px;width:50px;text-align:right;font-size:10.7px;line-height:10.7px;color:#1c1c34;font-weight:normal;white-space:pre;">Out</div><div style="position:absolute;left:1867.00px;top:477.94px;width:105px;text-align:center;font-size:10.7px;line-height:10.7px;color:#3a3a3a;font-weight:normal;white-space:pre;">45.0000</div><div style="position:absolute;left:2032px;top:422px;width:105px;height:51px;background:#000"></div><div style="position:absolute;left:2033px;top:423px;width:103px;height:16px;background:#5cc0b1"></div><div style="position:absolute;left:2033px;top:440px;width:103px;height:32px;background:#c0c0c0"></div><div style="position:absolute;left:2032.00px;top:425.94px;width:105px;text-align:center;font-size:10.7px;line-height:10.7px;color:#0c0c28;font-weight:normal;white-space:pre;">Divide</div><div style="position:absolute;left:2038px;top:443.14px;font-size:10.7px;line-height:10.7px;color:#1c1c34;font-weight:normal;white-space:pre;">Base</div><div style="position:absolute;left:2038px;top:458.64px;font-size:10.7px;line-height:10.7px;color:#1c1c34;font-weight:normal;white-space:pre;">Divisor</div><div style="position:absolute;left:2076px;top:449.84px;font-size:12px;line-height:12px;color:#0a0a14;font-weight:normal;white-space:pre;">/ 2.0</div><div style="position:absolute;left:2032.00px;top:477.44px;width:105px;text-align:center;font-size:10.7px;line-height:10.7px;color:#3a3a3a;font-weight:normal;white-space:pre;">22.5000</div><div style="position:absolute;left:2217px;top:432px;width:105px;height:35px;background:#000"></div><div style="position:absolute;left:2218px;top:433px;width:103px;height:16px;background:#5a5a5a"></div><div style="position:absolute;left:2218px;top:450px;width:103px;height:16px;background:#c0c0c0"></div><div style="position:absolute;left:2217.00px;top:435.94px;width:105px;text-align:center;font-size:10.7px;line-height:10.7px;color:#dcdcdc;font-weight:normal;white-space:pre;">Stat Cat 3 Name</div><div style="position:absolute;left:2217.00px;top:452.94px;width:105px;text-align:center;font-size:10.7px;line-height:10.7px;color:#1c1c34;font-weight:normal;white-space:pre;">Pivot.Y</div><div style="position:absolute;left:2217.00px;top:471.24px;width:105px;text-align:center;font-size:10.7px;line-height:10.7px;color:#3a3a3a;font-weight:normal;white-space:pre;">22.5000</div><div style="position:absolute;left:1682px;top:547px;width:105px;height:35px;background:#000"></div><div style="position:absolute;left:1683px;top:548px;width:103px;height:16px;background:#5a5a5a"></div><div style="position:absolute;left:1683px;top:565px;width:103px;height:16px;background:#c0c0c0"></div><div style="position:absolute;left:1682.00px;top:550.94px;width:105px;text-align:center;font-size:10.7px;line-height:10.7px;color:#dcdcdc;font-weight:normal;white-space:pre;">Stat Cat 3 #</div><div style="position:absolute;left:1678.00px;top:567.94px;width:105px;text-align:right;font-size:10.7px;line-height:10.7px;color:#1c1c34;font-weight:normal;white-space:pre;">BoundingBox.Top</div><div style="position:absolute;left:1682.00px;top:586.24px;width:105px;text-align:center;font-size:10.7px;line-height:10.7px;color:#3a3a3a;font-weight:normal;white-space:pre;">34.0000</div><div style="position:absolute;left:1672px;top:632px;width:105px;height:35px;background:#000"></div><div style="position:absolute;left:1673px;top:633px;width:103px;height:16px;background:#5a5a5a"></div><div style="position:absolute;left:1673px;top:650px;width:103px;height:16px;background:#c0c0c0"></div><div style="position:absolute;left:1672.00px;top:635.94px;width:105px;text-align:center;font-size:10.7px;line-height:10.7px;color:#dcdcdc;font-weight:normal;white-space:pre;">Stat Cat 3 #</div><div style="position:absolute;left:1668.00px;top:652.94px;width:105px;text-align:right;font-size:10.7px;line-height:10.7px;color:#1c1c34;font-weight:normal;white-space:pre;">BoundingBox.Y</div><div style="position:absolute;left:1672.00px;top:671.24px;width:105px;text-align:center;font-size:10.7px;line-height:10.7px;color:#3a3a3a;font-weight:normal;white-space:pre;">-8.0000</div><div style="position:absolute;left:1872px;top:567px;width:105px;height:67px;background:#000"></div><div style="position:absolute;left:1873px;top:568px;width:103px;height:16px;background:#5cc0b1"></div><div style="position:absolute;left:1873px;top:585px;width:103px;height:48px;background:#c0c0c0"></div><div style="position:absolute;left:1872.00px;top:570.94px;width:105px;text-align:center;font-size:10.7px;line-height:10.7px;color:#0c0c28;font-weight:normal;white-space:pre;">Add</div><div style="position:absolute;left:1878px;top:587.74px;font-size:10.7px;line-height:10.7px;color:#1c1c34;font-weight:normal;white-space:pre;">Base</div><div style="position:absolute;left:1879px;top:603.27px;font-size:11.5px;line-height:11.5px;color:#1c1c34;font-weight:normal;white-space:pre;">+</div><div style="position:absolute;left:1879px;top:619.27px;font-size:11.5px;line-height:11.5px;color:#1c1c34;font-weight:normal;white-space:pre;">+</div><div style="position:absolute;left:1918.00px;top:603.94px;width:50px;text-align:right;font-size:10.7px;line-height:10.7px;color:#1c1c34;font-weight:normal;white-space:pre;">Out</div><div style="position:absolute;left:1872.00px;top:637.94px;width:105px;text-align:center;font-size:10.7px;line-height:10.7px;color:#3a3a3a;font-weight:normal;white-space:pre;">26.0000</div><div style="position:absolute;left:2037px;top:582px;width:105px;height:51px;background:#000"></div><div style="position:absolute;left:2038px;top:583px;width:103px;height:16px;background:#5cc0b1"></div><div style="position:absolute;left:2038px;top:600px;width:103px;height:32px;background:#c0c0c0"></div><div style="position:absolute;left:2037.00px;top:585.94px;width:105px;text-align:center;font-size:10.7px;line-height:10.7px;color:#0c0c28;font-weight:normal;white-space:pre;">Divide</div><div style="position:absolute;left:2043px;top:603.14px;font-size:10.7px;line-height:10.7px;color:#1c1c34;font-weight:normal;white-space:pre;">Base</div><div style="position:absolute;left:2043px;top:618.64px;font-size:10.7px;line-height:10.7px;color:#1c1c34;font-weight:normal;white-space:pre;">Divisor</div><div style="position:absolute;left:2081px;top:609.84px;font-size:12px;line-height:12px;color:#0a0a14;font-weight:normal;white-space:pre;">/ 2.0</div><div style="position:absolute;left:2037.00px;top:637.44px;width:105px;text-align:center;font-size:10.7px;line-height:10.7px;color:#3a3a3a;font-weight:normal;white-space:pre;">13.0000</div><div style="position:absolute;left:2222px;top:592px;width:105px;height:35px;background:#000"></div><div style="position:absolute;left:2223px;top:593px;width:103px;height:16px;background:#5a5a5a"></div><div style="position:absolute;left:2223px;top:610px;width:103px;height:16px;background:#c0c0c0"></div><div style="position:absolute;left:2222.00px;top:595.94px;width:105px;text-align:center;font-size:10.7px;line-height:10.7px;color:#dcdcdc;font-weight:normal;white-space:pre;">Stat Cat 3 #</div><div style="position:absolute;left:2222.00px;top:612.94px;width:105px;text-align:center;font-size:10.7px;line-height:10.7px;color:#1c1c34;font-weight:normal;white-space:pre;">Pivot.Y</div><div style="position:absolute;left:2222.00px;top:631.24px;width:105px;text-align:center;font-size:10.7px;line-height:10.7px;color:#3a3a3a;font-weight:normal;white-space:pre;">13.0000</div><div style="position:absolute;left:1677px;top:712px;width:105px;height:35px;background:#000"></div><div style="position:absolute;left:1678px;top:713px;width:103px;height:16px;background:#5a5a5a"></div><div style="position:absolute;left:1678px;top:730px;width:103px;height:16px;background:#c0c0c0"></div><div style="position:absolute;left:1677.00px;top:715.94px;width:105px;text-align:center;font-size:10.7px;line-height:10.7px;color:#dcdcdc;font-weight:normal;white-space:pre;">Stat Cat 4 Name</div><div style="position:absolute;left:1673.00px;top:732.94px;width:105px;text-align:right;font-size:10.7px;line-height:10.7px;color:#1c1c34;font-weight:normal;white-space:pre;">BoundingBox.Top</div><div style="position:absolute;left:1677.00px;top:751.24px;width:105px;text-align:center;font-size:10.7px;line-height:10.7px;color:#3a3a3a;font-weight:normal;white-space:pre;">59.0000</div><div style="position:absolute;left:1667px;top:797px;width:105px;height:35px;background:#000"></div><div style="position:absolute;left:1668px;top:798px;width:103px;height:16px;background:#5a5a5a"></div><div style="position:absolute;left:1668px;top:815px;width:103px;height:16px;background:#c0c0c0"></div><div style="position:absolute;left:1667.00px;top:800.94px;width:105px;text-align:center;font-size:10.7px;line-height:10.7px;color:#dcdcdc;font-weight:normal;white-space:pre;">Stat Cat 4 Name</div><div style="position:absolute;left:1663.00px;top:817.94px;width:105px;text-align:right;font-size:10.7px;line-height:10.7px;color:#1c1c34;font-weight:normal;white-space:pre;">BoundingBox.Y</div><div style="position:absolute;left:1667.00px;top:836.24px;width:105px;text-align:center;font-size:10.7px;line-height:10.7px;color:#3a3a3a;font-weight:normal;white-space:pre;">-14.0000</div><div style="position:absolute;left:1867px;top:732px;width:105px;height:67px;background:#000"></div><div style="position:absolute;left:1868px;top:733px;width:103px;height:16px;background:#5cc0b1"></div><div style="position:absolute;left:1868px;top:750px;width:103px;height:48px;background:#c0c0c0"></div><div style="position:absolute;left:1867.00px;top:735.94px;width:105px;text-align:center;font-size:10.7px;line-height:10.7px;color:#0c0c28;font-weight:normal;white-space:pre;">Add</div><div style="position:absolute;left:1873px;top:752.74px;font-size:10.7px;line-height:10.7px;color:#1c1c34;font-weight:normal;white-space:pre;">Base</div><div style="position:absolute;left:1874px;top:768.27px;font-size:11.5px;line-height:11.5px;color:#1c1c34;font-weight:normal;white-space:pre;">+</div><div style="position:absolute;left:1874px;top:784.27px;font-size:11.5px;line-height:11.5px;color:#1c1c34;font-weight:normal;white-space:pre;">+</div><div style="position:absolute;left:1913.00px;top:768.94px;width:50px;text-align:right;font-size:10.7px;line-height:10.7px;color:#1c1c34;font-weight:normal;white-space:pre;">Out</div><div style="position:absolute;left:1867.00px;top:802.94px;width:105px;text-align:center;font-size:10.7px;line-height:10.7px;color:#3a3a3a;font-weight:normal;white-space:pre;">45.0000</div><div style="position:absolute;left:2032px;top:747px;width:105px;height:51px;background:#000"></div><div style="position:absolute;left:2033px;top:748px;width:103px;height:16px;background:#5cc0b1"></div><div style="position:absolute;left:2033px;top:765px;width:103px;height:32px;background:#c0c0c0"></div><div style="position:absolute;left:2032.00px;top:750.94px;width:105px;text-align:center;font-size:10.7px;line-height:10.7px;color:#0c0c28;font-weight:normal;white-space:pre;">Divide</div><div style="position:absolute;left:2038px;top:768.14px;font-size:10.7px;line-height:10.7px;color:#1c1c34;font-weight:normal;white-space:pre;">Base</div><div style="position:absolute;left:2038px;top:783.64px;font-size:10.7px;line-height:10.7px;color:#1c1c34;font-weight:normal;white-space:pre;">Divisor</div><div style="position:absolute;left:2076px;top:774.84px;font-size:12px;line-height:12px;color:#0a0a14;font-weight:normal;white-space:pre;">/ 2.0</div><div style="position:absolute;left:2032.00px;top:802.44px;width:105px;text-align:center;font-size:10.7px;line-height:10.7px;color:#3a3a3a;font-weight:normal;white-space:pre;">22.5000</div><div style="position:absolute;left:2217px;top:757px;width:105px;height:35px;background:#000"></div><div style="position:absolute;left:2218px;top:758px;width:103px;height:16px;background:#5a5a5a"></div><div style="position:absolute;left:2218px;top:775px;width:103px;height:16px;background:#c0c0c0"></div><div style="position:absolute;left:2217.00px;top:760.94px;width:105px;text-align:center;font-size:10.7px;line-height:10.7px;color:#dcdcdc;font-weight:normal;white-space:pre;">Stat Cat 4 Name</div><div style="position:absolute;left:2217.00px;top:777.94px;width:105px;text-align:center;font-size:10.7px;line-height:10.7px;color:#1c1c34;font-weight:normal;white-space:pre;">Pivot.Y</div><div style="position:absolute;left:2217.00px;top:796.24px;width:105px;text-align:center;font-size:10.7px;line-height:10.7px;color:#3a3a3a;font-weight:normal;white-space:pre;">22.5000</div><div style="position:absolute;left:1677px;top:877px;width:105px;height:35px;background:#000"></div><div style="position:absolute;left:1678px;top:878px;width:103px;height:16px;background:#5a5a5a"></div><div style="position:absolute;left:1678px;top:895px;width:103px;height:16px;background:#c0c0c0"></div><div style="position:absolute;left:1677.00px;top:880.94px;width:105px;text-align:center;font-size:10.7px;line-height:10.7px;color:#dcdcdc;font-weight:normal;white-space:pre;">Stat Cat 4 #</div><div style="position:absolute;left:1673.00px;top:897.94px;width:105px;text-align:right;font-size:10.7px;line-height:10.7px;color:#1c1c34;font-weight:normal;white-space:pre;">BoundingBox.Top</div><div style="position:absolute;left:1677.00px;top:916.24px;width:105px;text-align:center;font-size:10.7px;line-height:10.7px;color:#3a3a3a;font-weight:normal;white-space:pre;">34.0000</div><div style="position:absolute;left:1667px;top:962px;width:105px;height:35px;background:#000"></div><div style="position:absolute;left:1668px;top:963px;width:103px;height:16px;background:#5a5a5a"></div><div style="position:absolute;left:1668px;top:980px;width:103px;height:16px;background:#c0c0c0"></div><div style="position:absolute;left:1667.00px;top:965.94px;width:105px;text-align:center;font-size:10.7px;line-height:10.7px;color:#dcdcdc;font-weight:normal;white-space:pre;">Stat Cat 4 #</div><div style="position:absolute;left:1663.00px;top:982.94px;width:105px;text-align:right;font-size:10.7px;line-height:10.7px;color:#1c1c34;font-weight:normal;white-space:pre;">BoundingBox.Y</div><div style="position:absolute;left:1667.00px;top:1001.24px;width:105px;text-align:center;font-size:10.7px;line-height:10.7px;color:#3a3a3a;font-weight:normal;white-space:pre;">-8.0000</div><div style="position:absolute;left:1867px;top:897px;width:105px;height:67px;background:#000"></div><div style="position:absolute;left:1868px;top:898px;width:103px;height:16px;background:#5cc0b1"></div><div style="position:absolute;left:1868px;top:915px;width:103px;height:48px;background:#c0c0c0"></div><div style="position:absolute;left:1867.00px;top:900.94px;width:105px;text-align:center;font-size:10.7px;line-height:10.7px;color:#0c0c28;font-weight:normal;white-space:pre;">Add</div><div style="position:absolute;left:1873px;top:917.74px;font-size:10.7px;line-height:10.7px;color:#1c1c34;font-weight:normal;white-space:pre;">Base</div><div style="position:absolute;left:1874px;top:933.27px;font-size:11.5px;line-height:11.5px;color:#1c1c34;font-weight:normal;white-space:pre;">+</div><div style="position:absolute;left:1874px;top:949.27px;font-size:11.5px;line-height:11.5px;color:#1c1c34;font-weight:normal;white-space:pre;">+</div><div style="position:absolute;left:1913.00px;top:933.94px;width:50px;text-align:right;font-size:10.7px;line-height:10.7px;color:#1c1c34;font-weight:normal;white-space:pre;">Out</div><div style="position:absolute;left:1867.00px;top:967.94px;width:105px;text-align:center;font-size:10.7px;line-height:10.7px;color:#3a3a3a;font-weight:normal;white-space:pre;">26.0000</div><div style="position:absolute;left:2032px;top:912px;width:105px;height:51px;background:#000"></div><div style="position:absolute;left:2033px;top:913px;width:103px;height:16px;background:#5cc0b1"></div><div style="position:absolute;left:2033px;top:930px;width:103px;height:32px;background:#c0c0c0"></div><div style="position:absolute;left:2032.00px;top:915.94px;width:105px;text-align:center;font-size:10.7px;line-height:10.7px;color:#0c0c28;font-weight:normal;white-space:pre;">Divide</div><div style="position:absolute;left:2038px;top:933.14px;font-size:10.7px;line-height:10.7px;color:#1c1c34;font-weight:normal;white-space:pre;">Base</div><div style="position:absolute;left:2038px;top:948.64px;font-size:10.7px;line-height:10.7px;color:#1c1c34;font-weight:normal;white-space:pre;">Divisor</div><div style="position:absolute;left:2076px;top:939.84px;font-size:12px;line-height:12px;color:#0a0a14;font-weight:normal;white-space:pre;">/ 2.0</div><div style="position:absolute;left:2032.00px;top:967.44px;width:105px;text-align:center;font-size:10.7px;line-height:10.7px;color:#3a3a3a;font-weight:normal;white-space:pre;">13.0000</div><div style="position:absolute;left:2217px;top:922px;width:105px;height:35px;background:#000"></div><div style="position:absolute;left:2218px;top:923px;width:103px;height:16px;background:#5a5a5a"></div><div style="position:absolute;left:2218px;top:940px;width:103px;height:16px;background:#c0c0c0"></div><div style="position:absolute;left:2217.00px;top:925.94px;width:105px;text-align:center;font-size:10.7px;line-height:10.7px;color:#dcdcdc;font-weight:normal;white-space:pre;">Stat Cat 4 #</div><div style="position:absolute;left:2217.00px;top:942.94px;width:105px;text-align:center;font-size:10.7px;line-height:10.7px;color:#1c1c34;font-weight:normal;white-space:pre;">Pivot.Y</div><div style="position:absolute;left:2217.00px;top:961.24px;width:105px;text-align:center;font-size:10.7px;line-height:10.7px;color:#3a3a3a;font-weight:normal;white-space:pre;">13.0000</div><div style="position:absolute;left:947px;top:1092px;width:105px;height:35px;background:#000"></div><div style="position:absolute;left:948px;top:1093px;width:103px;height:16px;background:#5a5a5a"></div><div style="position:absolute;left:948px;top:1110px;width:103px;height:16px;background:#c0c0c0"></div><div style="position:absolute;left:947.00px;top:1095.94px;width:105px;text-align:center;font-size:10.7px;line-height:10.7px;color:#dcdcdc;font-weight:normal;white-space:pre;">Quad1</div><div style="position:absolute;left:947.00px;top:1112.94px;width:105px;text-align:center;font-size:10.7px;line-height:10.7px;color:#1c1c34;font-weight:normal;white-space:pre;">Position.Y</div><div style="position:absolute;left:947.00px;top:1131.24px;width:105px;text-align:center;font-size:10.7px;line-height:10.7px;color:#3a3a3a;font-weight:normal;white-space:pre;">916.5001</div><div style="position:absolute;left:1097px;top:1092px;width:105px;height:35px;background:#000"></div><div style="position:absolute;left:1098px;top:1093px;width:103px;height:16px;background:#5a5a5a"></div><div style="position:absolute;left:1098px;top:1110px;width:103px;height:16px;background:#c0c0c0"></div><div style="position:absolute;left:1097.00px;top:1095.94px;width:105px;text-align:center;font-size:10.7px;line-height:10.7px;color:#dcdcdc;font-weight:normal;white-space:pre;">Stat Cat 1 Name</div><div style="position:absolute;left:1097.00px;top:1112.94px;width:105px;text-align:center;font-size:10.7px;line-height:10.7px;color:#1c1c34;font-weight:normal;white-space:pre;">Position.Y</div><div style="position:absolute;left:1097.00px;top:1131.24px;width:105px;text-align:center;font-size:10.7px;line-height:10.7px;color:#3a3a3a;font-weight:normal;white-space:pre;">916.5001</div><div style="position:absolute;left:1252px;top:1092px;width:105px;height:35px;background:#000"></div><div style="position:absolute;left:1253px;top:1093px;width:103px;height:16px;background:#5a5a5a"></div><div style="position:absolute;left:1253px;top:1110px;width:103px;height:16px;background:#c0c0c0"></div><div style="position:absolute;left:1252.00px;top:1095.94px;width:105px;text-align:center;font-size:10.7px;line-height:10.7px;color:#dcdcdc;font-weight:normal;white-space:pre;">Stat Cat 1 #</div><div style="position:absolute;left:1252.00px;top:1112.94px;width:105px;text-align:center;font-size:10.7px;line-height:10.7px;color:#1c1c34;font-weight:normal;white-space:pre;">Position.Y</div><div style="position:absolute;left:1252.00px;top:1131.24px;width:105px;text-align:center;font-size:10.7px;line-height:10.7px;color:#3a3a3a;font-weight:normal;white-space:pre;">916.5001</div><div style="position:absolute;left:1392px;top:1092px;width:105px;height:35px;background:#000"></div><div style="position:absolute;left:1393px;top:1093px;width:103px;height:16px;background:#5a5a5a"></div><div style="position:absolute;left:1393px;top:1110px;width:103px;height:16px;background:#c0c0c0"></div><div style="position:absolute;left:1392.00px;top:1095.94px;width:105px;text-align:center;font-size:10.7px;line-height:10.7px;color:#dcdcdc;font-weight:normal;white-space:pre;">Stat Cat 2 Name</div><div style="position:absolute;left:1392.00px;top:1112.94px;width:105px;text-align:center;font-size:10.7px;line-height:10.7px;color:#1c1c34;font-weight:normal;white-space:pre;">Position.Y</div><div style="position:absolute;left:1392.00px;top:1131.24px;width:105px;text-align:center;font-size:10.7px;line-height:10.7px;color:#3a3a3a;font-weight:normal;white-space:pre;">916.5001</div><div style="position:absolute;left:1537px;top:1092px;width:105px;height:35px;background:#000"></div><div style="position:absolute;left:1538px;top:1093px;width:103px;height:16px;background:#5a5a5a"></div><div style="position:absolute;left:1538px;top:1110px;width:103px;height:16px;background:#c0c0c0"></div><div style="position:absolute;left:1537.00px;top:1095.94px;width:105px;text-align:center;font-size:10.7px;line-height:10.7px;color:#dcdcdc;font-weight:normal;white-space:pre;">Stat Cat 2 #</div><div style="position:absolute;left:1537.00px;top:1112.94px;width:105px;text-align:center;font-size:10.7px;line-height:10.7px;color:#1c1c34;font-weight:normal;white-space:pre;">Position.Y</div><div style="position:absolute;left:1537.00px;top:1131.24px;width:105px;text-align:center;font-size:10.7px;line-height:10.7px;color:#3a3a3a;font-weight:normal;white-space:pre;">916.5001</div><div style="position:absolute;left:1672px;top:1092px;width:105px;height:35px;background:#000"></div><div style="position:absolute;left:1673px;top:1093px;width:103px;height:16px;background:#5a5a5a"></div><div style="position:absolute;left:1673px;top:1110px;width:103px;height:16px;background:#c0c0c0"></div><div style="position:absolute;left:1672.00px;top:1095.94px;width:105px;text-align:center;font-size:10.7px;line-height:10.7px;color:#dcdcdc;font-weight:normal;white-space:pre;">Stat Cat 3 Name</div><div style="position:absolute;left:1672.00px;top:1112.94px;width:105px;text-align:center;font-size:10.7px;line-height:10.7px;color:#1c1c34;font-weight:normal;white-space:pre;">Position.Y</div><div style="position:absolute;left:1672.00px;top:1131.24px;width:105px;text-align:center;font-size:10.7px;line-height:10.7px;color:#3a3a3a;font-weight:normal;white-space:pre;">916.5001</div><div style="position:absolute;left:1807px;top:1092px;width:105px;height:35px;background:#000"></div><div style="position:absolute;left:1808px;top:1093px;width:103px;height:16px;background:#5a5a5a"></div><div style="position:absolute;left:1808px;top:1110px;width:103px;height:16px;background:#c0c0c0"></div><div style="position:absolute;left:1807.00px;top:1095.94px;width:105px;text-align:center;font-size:10.7px;line-height:10.7px;color:#dcdcdc;font-weight:normal;white-space:pre;">Stat Cat 3 #</div><div style="position:absolute;left:1807.00px;top:1112.94px;width:105px;text-align:center;font-size:10.7px;line-height:10.7px;color:#1c1c34;font-weight:normal;white-space:pre;">Position.Y</div><div style="position:absolute;left:1807.00px;top:1131.24px;width:105px;text-align:center;font-size:10.7px;line-height:10.7px;color:#3a3a3a;font-weight:normal;white-space:pre;">916.5001</div><div style="position:absolute;left:1937px;top:1092px;width:105px;height:35px;background:#000"></div><div style="position:absolute;left:1938px;top:1093px;width:103px;height:16px;background:#5a5a5a"></div><div style="position:absolute;left:1938px;top:1110px;width:103px;height:16px;background:#c0c0c0"></div><div style="position:absolute;left:1937.00px;top:1095.94px;width:105px;text-align:center;font-size:10.7px;line-height:10.7px;color:#dcdcdc;font-weight:normal;white-space:pre;">Stat Cat 4 Name</div><div style="position:absolute;left:1937.00px;top:1112.94px;width:105px;text-align:center;font-size:10.7px;line-height:10.7px;color:#1c1c34;font-weight:normal;white-space:pre;">Position.Y</div><div style="position:absolute;left:1937.00px;top:1131.24px;width:105px;text-align:center;font-size:10.7px;line-height:10.7px;color:#3a3a3a;font-weight:normal;white-space:pre;">916.5001</div><div style="position:absolute;left:2072px;top:1092px;width:105px;height:35px;background:#000"></div><div style="position:absolute;left:2073px;top:1093px;width:103px;height:16px;background:#5a5a5a"></div><div style="position:absolute;left:2073px;top:1110px;width:103px;height:16px;background:#c0c0c0"></div><div style="position:absolute;left:2072.00px;top:1095.94px;width:105px;text-align:center;font-size:10.7px;line-height:10.7px;color:#dcdcdc;font-weight:normal;white-space:pre;">Stat Cat 4 #</div><div style="position:absolute;left:2072.00px;top:1112.94px;width:105px;text-align:center;font-size:10.7px;line-height:10.7px;color:#1c1c34;font-weight:normal;white-space:pre;">Position.Y</div><div style="position:absolute;left:2072.00px;top:1131.24px;width:105px;text-align:center;font-size:10.7px;line-height:10.7px;color:#3a3a3a;font-weight:normal;white-space:pre;">916.5001</div><svg style="position:absolute;left:0;top:0" width="2389" height="1309" viewBox="0 0 2389 1309"><path d="M1096 413.5 C1130.1 413.5 1116.9 428.5 1151 428.5 L1163 428.5" fill="none" stroke="#2888d2" stroke-width="1.35"/><path d="M1163 428.5 L1151 424.3 L1151 432.7 Z" fill="#1683d2"/><path d="M1091 473.5 C1128.2 473.5 1113.8 444.5 1151 444.5 L1163 444.5" fill="none" stroke="#2888d2" stroke-width="1.35"/><path d="M1163 444.5 L1151 440.3 L1151 448.7 Z" fill="#1683d2"/><path d="M1271 444.5 C1302.0 444.5 1290.0 443.5 1321 443.5 L1333 443.5" fill="none" stroke="#2888d2" stroke-width="1.35"/><path d="M1333 443.5 L1321 439.3 L1321 447.7 Z" fill="#1683d2"/><path d="M1441 451.5 C1484.4 451.5 1467.6 453.5 1511 453.5 L1523 453.5" fill="none" stroke="#2888d2" stroke-width="1.35"/><path d="M1523 453.5 L1511 449.3 L1511 457.7 Z" fill="#1683d2"/><path d="M1091 563.5 C1134.4 563.5 1117.6 583.5 1161 583.5 L1173 583.5" fill="none" stroke="#2888d2" stroke-width="1.35"/><path d="M1173 583.5 L1161 579.3 L1161 587.7 Z" fill="#1683d2"/><path d="M1096 623.5 C1136.3 623.5 1120.7 599.5 1161 599.5 L1173 599.5" fill="none" stroke="#2888d2" stroke-width="1.35"/><path d="M1173 599.5 L1161 595.3 L1161 603.7 Z" fill="#1683d2"/><path d="M1281 599.5 C1308.9 599.5 1298.1 598.5 1326 598.5 L1338 598.5" fill="none" stroke="#2888d2" stroke-width="1.35"/><path d="M1338 598.5 L1326 594.3 L1326 602.7 Z" fill="#1683d2"/><path d="M1446 606.5 C1483.2 606.5 1468.8 608.5 1506 608.5 L1518 608.5" fill="none" stroke="#2888d2" stroke-width="1.35"/><path d="M1518 608.5 L1506 604.3 L1506 612.7 Z" fill="#1683d2"/><path d="M1091 703.5 C1134.4 703.5 1117.6 723.5 1161 723.5 L1173 723.5" fill="none" stroke="#2888d2" stroke-width="1.35"/><path d="M1173 723.5 L1161 719.3 L1161 727.7 Z" fill="#1683d2"/><path d="M1081 788.5 C1130.6 788.5 1111.4 739.5 1161 739.5 L1173 739.5" fill="none" stroke="#2888d2" stroke-width="1.35"/><path d="M1173 739.5 L1161 735.3 L1161 743.7 Z" fill="#1683d2"/><path d="M1281 739.5 C1308.9 739.5 1298.1 738.5 1326 738.5 L1338 738.5" fill="none" stroke="#2888d2" stroke-width="1.35"/><path d="M1338 738.5 L1326 734.3 L1326 742.7 Z" fill="#1683d2"/><path d="M1446 746.5 C1483.2 746.5 1468.8 753.5 1506 753.5 L1518 753.5" fill="none" stroke="#2888d2" stroke-width="1.35"/><path d="M1518 753.5 L1506 749.3 L1506 757.7 Z" fill="#1683d2"/><path d="M1096 863.5 C1139.4 863.5 1122.6 883.5 1166 883.5 L1178 883.5" fill="none" stroke="#2888d2" stroke-width="1.35"/><path d="M1178 883.5 L1166 879.3 L1166 887.7 Z" fill="#1683d2"/><path d="M1086 948.5 C1135.6 948.5 1116.4 899.5 1166 899.5 L1178 899.5" fill="none" stroke="#2888d2" stroke-width="1.35"/><path d="M1178 899.5 L1166 895.3 L1166 903.7 Z" fill="#1683d2"/><path d="M1286 899.5 C1313.9 899.5 1303.1 898.5 1331 898.5 L1343 898.5" fill="none" stroke="#2888d2" stroke-width="1.35"/><path d="M1343 898.5 L1331 894.3 L1331 902.7 Z" fill="#1683d2"/><path d="M1451 906.5 C1491.3 906.5 1475.7 908.5 1516 908.5 L1528 908.5" fill="none" stroke="#2888d2" stroke-width="1.35"/><path d="M1528 908.5 L1516 904.3 L1516 912.7 Z" fill="#1683d2"/><path d="M1781 413.5 C1824.4 413.5 1807.6 433.5 1851 433.5 L1863 433.5" fill="none" stroke="#2888d2" stroke-width="1.35"/><path d="M1863 433.5 L1851 429.3 L1851 437.7 Z" fill="#1683d2"/><path d="M1771 498.5 C1820.6 498.5 1801.4 449.5 1851 449.5 L1863 449.5" fill="none" stroke="#2888d2" stroke-width="1.35"/><path d="M1863 449.5 L1851 445.3 L1851 453.7 Z" fill="#1683d2"/><path d="M1971 449.5 C1998.9 449.5 1988.1 448.5 2016 448.5 L2028 448.5" fill="none" stroke="#2888d2" stroke-width="1.35"/><path d="M2028 448.5 L2016 444.3 L2016 452.7 Z" fill="#1683d2"/><path d="M2136 456.5 C2176.3 456.5 2160.7 458.5 2201 458.5 L2213 458.5" fill="none" stroke="#2888d2" stroke-width="1.35"/><path d="M2213 458.5 L2201 454.3 L2201 462.7 Z" fill="#1683d2"/><path d="M1786 573.5 C1829.4 573.5 1812.6 593.5 1856 593.5 L1868 593.5" fill="none" stroke="#2888d2" stroke-width="1.35"/><path d="M1868 593.5 L1856 589.3 L1856 597.7 Z" fill="#1683d2"/><path d="M1776 658.5 C1825.6 658.5 1806.4 609.5 1856 609.5 L1868 609.5" fill="none" stroke="#2888d2" stroke-width="1.35"/><path d="M1868 609.5 L1856 605.3 L1856 613.7 Z" fill="#1683d2"/><path d="M1976 609.5 C2003.9 609.5 1993.1 608.5 2021 608.5 L2033 608.5" fill="none" stroke="#2888d2" stroke-width="1.35"/><path d="M2033 608.5 L2021 604.3 L2021 612.7 Z" fill="#1683d2"/><path d="M2141 616.5 C2181.3 616.5 2165.7 618.5 2206 618.5 L2218 618.5" fill="none" stroke="#2888d2" stroke-width="1.35"/><path d="M2218 618.5 L2206 614.3 L2206 622.7 Z" fill="#1683d2"/><path d="M1781 738.5 C1824.4 738.5 1807.6 758.5 1851 758.5 L1863 758.5" fill="none" stroke="#2888d2" stroke-width="1.35"/><path d="M1863 758.5 L1851 754.3 L1851 762.7 Z" fill="#1683d2"/><path d="M1771 823.5 C1820.6 823.5 1801.4 774.5 1851 774.5 L1863 774.5" fill="none" stroke="#2888d2" stroke-width="1.35"/><path d="M1863 774.5 L1851 770.3 L1851 778.7 Z" fill="#1683d2"/><path d="M1971 774.5 C1998.9 774.5 1988.1 773.5 2016 773.5 L2028 773.5" fill="none" stroke="#2888d2" stroke-width="1.35"/><path d="M2028 773.5 L2016 769.3 L2016 777.7 Z" fill="#1683d2"/><path d="M2136 781.5 C2176.3 781.5 2160.7 783.5 2201 783.5 L2213 783.5" fill="none" stroke="#2888d2" stroke-width="1.35"/><path d="M2213 783.5 L2201 779.3 L2201 787.7 Z" fill="#1683d2"/><path d="M1781 903.5 C1824.4 903.5 1807.6 923.5 1851 923.5 L1863 923.5" fill="none" stroke="#2888d2" stroke-width="1.35"/><path d="M1863 923.5 L1851 919.3 L1851 927.7 Z" fill="#1683d2"/><path d="M1771 988.5 C1820.6 988.5 1801.4 939.5 1851 939.5 L1863 939.5" fill="none" stroke="#2888d2" stroke-width="1.35"/><path d="M1863 939.5 L1851 935.3 L1851 943.7 Z" fill="#1683d2"/><path d="M1971 939.5 C1998.9 939.5 1988.1 938.5 2016 938.5 L2028 938.5" fill="none" stroke="#2888d2" stroke-width="1.35"/><path d="M2028 938.5 L2016 934.3 L2016 942.7 Z" fill="#1683d2"/><path d="M2136 946.5 C2176.3 946.5 2160.7 948.5 2201 948.5 L2213 948.5" fill="none" stroke="#2888d2" stroke-width="1.35"/><path d="M2213 948.5 L2201 944.3 L2201 952.7 Z" fill="#1683d2"/><path d="M1051 1118.5 C1069.6 1118.5 1062.4 1118.5 1081 1118.5 L1093 1118.5" fill="none" stroke="#2888d2" stroke-width="1.35"/><path d="M1093 1118.5 L1081 1114.3 L1081 1122.7 Z" fill="#1683d2"/><path d="M1201 1118.5 C1222.7 1118.5 1214.3 1118.5 1236 1118.5 L1248 1118.5" fill="none" stroke="#2888d2" stroke-width="1.35"/><path d="M1248 1118.5 L1236 1114.3 L1236 1122.7 Z" fill="#1683d2"/><path d="M1356 1118.5 C1368.4 1118.5 1363.6 1118.5 1376 1118.5 L1388 1118.5" fill="none" stroke="#2888d2" stroke-width="1.35"/><path d="M1388 1118.5 L1376 1114.3 L1376 1122.7 Z" fill="#1683d2"/><path d="M1496 1118.5 C1511.5 1118.5 1505.5 1118.5 1521 1118.5 L1533 1118.5" fill="none" stroke="#2888d2" stroke-width="1.35"/><path d="M1533 1118.5 L1521 1114.3 L1521 1122.7 Z" fill="#1683d2"/><path d="M1641 1118.5 C1650.3 1118.5 1646.7 1118.5 1656 1118.5 L1668 1118.5" fill="none" stroke="#2888d2" stroke-width="1.35"/><path d="M1668 1118.5 L1656 1114.3 L1656 1122.7 Z" fill="#1683d2"/><path d="M1776 1118.5 C1785.3 1118.5 1781.7 1118.5 1791 1118.5 L1803 1118.5" fill="none" stroke="#2888d2" stroke-width="1.35"/><path d="M1803 1118.5 L1791 1114.3 L1791 1122.7 Z" fill="#1683d2"/><path d="M1911 1118.5 C1917.2 1118.5 1914.8 1118.5 1921 1118.5 L1933 1118.5" fill="none" stroke="#2888d2" stroke-width="1.35"/><path d="M1933 1118.5 L1921 1114.3 L1921 1122.7 Z" fill="#1683d2"/><path d="M2041 1118.5 C2050.3 1118.5 2046.7 1118.5 2056 1118.5 L2068 1118.5" fill="none" stroke="#2888d2" stroke-width="1.35"/><path d="M2068 1118.5 L2056 1114.3 L2056 1122.7 Z" fill="#1683d2"/><path d="M1096.5 409 L1100.5 413.5 L1096.5 418" fill="none" stroke="#404040" stroke-width="1.1"/><circle cx="1096.5" cy="413.5" r="2.1" fill="#ffff10"/><path d="M1091.5 469 L1095.5 473.5 L1091.5 478" fill="none" stroke="#404040" stroke-width="1.1"/><circle cx="1091.5" cy="473.5" r="2.1" fill="#ffff10"/><path d="M1167.5 424 L1171.5 428.5 L1167.5 433" fill="none" stroke="#404040" stroke-width="1.1"/><circle cx="1167.5" cy="428.5" r="2.1" fill="#20ff20"/><path d="M1167.5 440 L1171.5 444.5 L1167.5 449" fill="none" stroke="#404040" stroke-width="1.1"/><circle cx="1167.5" cy="444.5" r="2.1" fill="#20ff20"/><path d="M1167.5 456 L1171.5 460.5 L1167.5 465" fill="none" stroke="#404040" stroke-width="1.1"/><circle cx="1167.5" cy="460.5" r="2.1" fill="#20ff20"/><path d="M1271.5 440 L1275.5 444.5 L1271.5 449" fill="none" stroke="#404040" stroke-width="1.1"/><circle cx="1271.5" cy="444.5" r="2.1" fill="#ffff10"/><path d="M1337.5 439 L1341.5 443.5 L1337.5 448" fill="none" stroke="#404040" stroke-width="1.1"/><circle cx="1337.5" cy="443.5" r="2.1" fill="#20ff20"/><path d="M1337.5 455 L1341.5 459.5 L1337.5 464" fill="none" stroke="#404040" stroke-width="1.1"/><circle cx="1337.5" cy="459.5" r="2.1" fill="#20ff20"/><path d="M1441.5 447 L1445.5 451.5 L1441.5 456" fill="none" stroke="#404040" stroke-width="1.1"/><circle cx="1441.5" cy="451.5" r="2.1" fill="#ffff10"/><path d="M1631.5 449 L1635.5 453.5 L1631.5 458" fill="none" stroke="#404040" stroke-width="1.1"/><circle cx="1631.5" cy="453.5" r="2.1" fill="#ffff10"/><path d="M1527.5 449 L1531.5 453.5 L1527.5 458" fill="none" stroke="#404040" stroke-width="1.1"/><circle cx="1527.5" cy="453.5" r="2.1" fill="#20ff20"/><path d="M1091.5 559 L1095.5 563.5 L1091.5 568" fill="none" stroke="#404040" stroke-width="1.1"/><circle cx="1091.5" cy="563.5" r="2.1" fill="#ffff10"/><path d="M1096.5 619 L1100.5 623.5 L1096.5 628" fill="none" stroke="#404040" stroke-width="1.1"/><circle cx="1096.5" cy="623.5" r="2.1" fill="#ffff10"/><path d="M1177.5 579 L1181.5 583.5 L1177.5 588" fill="none" stroke="#404040" stroke-width="1.1"/><circle cx="1177.5" cy="583.5" r="2.1" fill="#20ff20"/><path d="M1177.5 595 L1181.5 599.5 L1177.5 604" fill="none" stroke="#404040" stroke-width="1.1"/><circle cx="1177.5" cy="599.5" r="2.1" fill="#20ff20"/><path d="M1177.5 611 L1181.5 615.5 L1177.5 620" fill="none" stroke="#404040" stroke-width="1.1"/><circle cx="1177.5" cy="615.5" r="2.1" fill="#20ff20"/><path d="M1281.5 595 L1285.5 599.5 L1281.5 604" fill="none" stroke="#404040" stroke-width="1.1"/><circle cx="1281.5" cy="599.5" r="2.1" fill="#ffff10"/><path d="M1342.5 594 L1346.5 598.5 L1342.5 603" fill="none" stroke="#404040" stroke-width="1.1"/><circle cx="1342.5" cy="598.5" r="2.1" fill="#20ff20"/><path d="M1342.5 610 L1346.5 614.5 L1342.5 619" fill="none" stroke="#404040" stroke-width="1.1"/><circle cx="1342.5" cy="614.5" r="2.1" fill="#20ff20"/><path d="M1446.5 602 L1450.5 606.5 L1446.5 611" fill="none" stroke="#404040" stroke-width="1.1"/><circle cx="1446.5" cy="606.5" r="2.1" fill="#ffff10"/><path d="M1626.5 604 L1630.5 608.5 L1626.5 613" fill="none" stroke="#404040" stroke-width="1.1"/><circle cx="1626.5" cy="608.5" r="2.1" fill="#ffff10"/><path d="M1522.5 604 L1526.5 608.5 L1522.5 613" fill="none" stroke="#404040" stroke-width="1.1"/><circle cx="1522.5" cy="608.5" r="2.1" fill="#20ff20"/><path d="M1091.5 699 L1095.5 703.5 L1091.5 708" fill="none" stroke="#404040" stroke-width="1.1"/><circle cx="1091.5" cy="703.5" r="2.1" fill="#ffff10"/><path d="M1081.5 784 L1085.5 788.5 L1081.5 793" fill="none" stroke="#404040" stroke-width="1.1"/><circle cx="1081.5" cy="788.5" r="2.1" fill="#ffff10"/><path d="M1177.5 719 L1181.5 723.5 L1177.5 728" fill="none" stroke="#404040" stroke-width="1.1"/><circle cx="1177.5" cy="723.5" r="2.1" fill="#20ff20"/><path d="M1177.5 735 L1181.5 739.5 L1177.5 744" fill="none" stroke="#404040" stroke-width="1.1"/><circle cx="1177.5" cy="739.5" r="2.1" fill="#20ff20"/><path d="M1177.5 751 L1181.5 755.5 L1177.5 760" fill="none" stroke="#404040" stroke-width="1.1"/><circle cx="1177.5" cy="755.5" r="2.1" fill="#20ff20"/><path d="M1281.5 735 L1285.5 739.5 L1281.5 744" fill="none" stroke="#404040" stroke-width="1.1"/><circle cx="1281.5" cy="739.5" r="2.1" fill="#ffff10"/><path d="M1342.5 734 L1346.5 738.5 L1342.5 743" fill="none" stroke="#404040" stroke-width="1.1"/><circle cx="1342.5" cy="738.5" r="2.1" fill="#20ff20"/><path d="M1342.5 750 L1346.5 754.5 L1342.5 759" fill="none" stroke="#404040" stroke-width="1.1"/><circle cx="1342.5" cy="754.5" r="2.1" fill="#20ff20"/><path d="M1446.5 742 L1450.5 746.5 L1446.5 751" fill="none" stroke="#404040" stroke-width="1.1"/><circle cx="1446.5" cy="746.5" r="2.1" fill="#ffff10"/><path d="M1626.5 749 L1630.5 753.5 L1626.5 758" fill="none" stroke="#404040" stroke-width="1.1"/><circle cx="1626.5" cy="753.5" r="2.1" fill="#ffff10"/><path d="M1522.5 749 L1526.5 753.5 L1522.5 758" fill="none" stroke="#404040" stroke-width="1.1"/><circle cx="1522.5" cy="753.5" r="2.1" fill="#20ff20"/><path d="M1096.5 859 L1100.5 863.5 L1096.5 868" fill="none" stroke="#404040" stroke-width="1.1"/><circle cx="1096.5" cy="863.5" r="2.1" fill="#ffff10"/><path d="M1086.5 944 L1090.5 948.5 L1086.5 953" fill="none" stroke="#404040" stroke-width="1.1"/><circle cx="1086.5" cy="948.5" r="2.1" fill="#ffff10"/><path d="M1182.5 879 L1186.5 883.5 L1182.5 888" fill="none" stroke="#404040" stroke-width="1.1"/><circle cx="1182.5" cy="883.5" r="2.1" fill="#20ff20"/><path d="M1182.5 895 L1186.5 899.5 L1182.5 904" fill="none" stroke="#404040" stroke-width="1.1"/><circle cx="1182.5" cy="899.5" r="2.1" fill="#20ff20"/><path d="M1182.5 911 L1186.5 915.5 L1182.5 920" fill="none" stroke="#404040" stroke-width="1.1"/><circle cx="1182.5" cy="915.5" r="2.1" fill="#20ff20"/><path d="M1286.5 895 L1290.5 899.5 L1286.5 904" fill="none" stroke="#404040" stroke-width="1.1"/><circle cx="1286.5" cy="899.5" r="2.1" fill="#ffff10"/><path d="M1347.5 894 L1351.5 898.5 L1347.5 903" fill="none" stroke="#404040" stroke-width="1.1"/><circle cx="1347.5" cy="898.5" r="2.1" fill="#20ff20"/><path d="M1347.5 910 L1351.5 914.5 L1347.5 919" fill="none" stroke="#404040" stroke-width="1.1"/><circle cx="1347.5" cy="914.5" r="2.1" fill="#20ff20"/><path d="M1451.5 902 L1455.5 906.5 L1451.5 911" fill="none" stroke="#404040" stroke-width="1.1"/><circle cx="1451.5" cy="906.5" r="2.1" fill="#ffff10"/><path d="M1636.5 904 L1640.5 908.5 L1636.5 913" fill="none" stroke="#404040" stroke-width="1.1"/><circle cx="1636.5" cy="908.5" r="2.1" fill="#ffff10"/><path d="M1532.5 904 L1536.5 908.5 L1532.5 913" fill="none" stroke="#404040" stroke-width="1.1"/><circle cx="1532.5" cy="908.5" r="2.1" fill="#20ff20"/><path d="M1781.5 409 L1785.5 413.5 L1781.5 418" fill="none" stroke="#404040" stroke-width="1.1"/><circle cx="1781.5" cy="413.5" r="2.1" fill="#ffff10"/><path d="M1771.5 494 L1775.5 498.5 L1771.5 503" fill="none" stroke="#404040" stroke-width="1.1"/><circle cx="1771.5" cy="498.5" r="2.1" fill="#ffff10"/><path d="M1867.5 429 L1871.5 433.5 L1867.5 438" fill="none" stroke="#404040" stroke-width="1.1"/><circle cx="1867.5" cy="433.5" r="2.1" fill="#20ff20"/><path d="M1867.5 445 L1871.5 449.5 L1867.5 454" fill="none" stroke="#404040" stroke-width="1.1"/><circle cx="1867.5" cy="449.5" r="2.1" fill="#20ff20"/><path d="M1867.5 461 L1871.5 465.5 L1867.5 470" fill="none" stroke="#404040" stroke-width="1.1"/><circle cx="1867.5" cy="465.5" r="2.1" fill="#20ff20"/><path d="M1971.5 445 L1975.5 449.5 L1971.5 454" fill="none" stroke="#404040" stroke-width="1.1"/><circle cx="1971.5" cy="449.5" r="2.1" fill="#ffff10"/><path d="M2032.5 444 L2036.5 448.5 L2032.5 453" fill="none" stroke="#404040" stroke-width="1.1"/><circle cx="2032.5" cy="448.5" r="2.1" fill="#20ff20"/><path d="M2032.5 460 L2036.5 464.5 L2032.5 469" fill="none" stroke="#404040" stroke-width="1.1"/><circle cx="2032.5" cy="464.5" r="2.1" fill="#20ff20"/><path d="M2136.5 452 L2140.5 456.5 L2136.5 461" fill="none" stroke="#404040" stroke-width="1.1"/><circle cx="2136.5" cy="456.5" r="2.1" fill="#ffff10"/><path d="M2321.5 454 L2325.5 458.5 L2321.5 463" fill="none" stroke="#404040" stroke-width="1.1"/><circle cx="2321.5" cy="458.5" r="2.1" fill="#ffff10"/><path d="M2217.5 454 L2221.5 458.5 L2217.5 463" fill="none" stroke="#404040" stroke-width="1.1"/><circle cx="2217.5" cy="458.5" r="2.1" fill="#20ff20"/><path d="M1786.5 569 L1790.5 573.5 L1786.5 578" fill="none" stroke="#404040" stroke-width="1.1"/><circle cx="1786.5" cy="573.5" r="2.1" fill="#ffff10"/><path d="M1776.5 654 L1780.5 658.5 L1776.5 663" fill="none" stroke="#404040" stroke-width="1.1"/><circle cx="1776.5" cy="658.5" r="2.1" fill="#ffff10"/><path d="M1872.5 589 L1876.5 593.5 L1872.5 598" fill="none" stroke="#404040" stroke-width="1.1"/><circle cx="1872.5" cy="593.5" r="2.1" fill="#20ff20"/><path d="M1872.5 605 L1876.5 609.5 L1872.5 614" fill="none" stroke="#404040" stroke-width="1.1"/><circle cx="1872.5" cy="609.5" r="2.1" fill="#20ff20"/><path d="M1872.5 621 L1876.5 625.5 L1872.5 630" fill="none" stroke="#404040" stroke-width="1.1"/><circle cx="1872.5" cy="625.5" r="2.1" fill="#20ff20"/><path d="M1976.5 605 L1980.5 609.5 L1976.5 614" fill="none" stroke="#404040" stroke-width="1.1"/><circle cx="1976.5" cy="609.5" r="2.1" fill="#ffff10"/><path d="M2037.5 604 L2041.5 608.5 L2037.5 613" fill="none" stroke="#404040" stroke-width="1.1"/><circle cx="2037.5" cy="608.5" r="2.1" fill="#20ff20"/><path d="M2037.5 620 L2041.5 624.5 L2037.5 629" fill="none" stroke="#404040" stroke-width="1.1"/><circle cx="2037.5" cy="624.5" r="2.1" fill="#20ff20"/><path d="M2141.5 612 L2145.5 616.5 L2141.5 621" fill="none" stroke="#404040" stroke-width="1.1"/><circle cx="2141.5" cy="616.5" r="2.1" fill="#ffff10"/><path d="M2326.5 614 L2330.5 618.5 L2326.5 623" fill="none" stroke="#404040" stroke-width="1.1"/><circle cx="2326.5" cy="618.5" r="2.1" fill="#ffff10"/><path d="M2222.5 614 L2226.5 618.5 L2222.5 623" fill="none" stroke="#404040" stroke-width="1.1"/><circle cx="2222.5" cy="618.5" r="2.1" fill="#20ff20"/><path d="M1781.5 734 L1785.5 738.5 L1781.5 743" fill="none" stroke="#404040" stroke-width="1.1"/><circle cx="1781.5" cy="738.5" r="2.1" fill="#ffff10"/><path d="M1771.5 819 L1775.5 823.5 L1771.5 828" fill="none" stroke="#404040" stroke-width="1.1"/><circle cx="1771.5" cy="823.5" r="2.1" fill="#ffff10"/><path d="M1867.5 754 L1871.5 758.5 L1867.5 763" fill="none" stroke="#404040" stroke-width="1.1"/><circle cx="1867.5" cy="758.5" r="2.1" fill="#20ff20"/><path d="M1867.5 770 L1871.5 774.5 L1867.5 779" fill="none" stroke="#404040" stroke-width="1.1"/><circle cx="1867.5" cy="774.5" r="2.1" fill="#20ff20"/><path d="M1867.5 786 L1871.5 790.5 L1867.5 795" fill="none" stroke="#404040" stroke-width="1.1"/><circle cx="1867.5" cy="790.5" r="2.1" fill="#20ff20"/><path d="M1971.5 770 L1975.5 774.5 L1971.5 779" fill="none" stroke="#404040" stroke-width="1.1"/><circle cx="1971.5" cy="774.5" r="2.1" fill="#ffff10"/><path d="M2032.5 769 L2036.5 773.5 L2032.5 778" fill="none" stroke="#404040" stroke-width="1.1"/><circle cx="2032.5" cy="773.5" r="2.1" fill="#20ff20"/><path d="M2032.5 785 L2036.5 789.5 L2032.5 794" fill="none" stroke="#404040" stroke-width="1.1"/><circle cx="2032.5" cy="789.5" r="2.1" fill="#20ff20"/><path d="M2136.5 777 L2140.5 781.5 L2136.5 786" fill="none" stroke="#404040" stroke-width="1.1"/><circle cx="2136.5" cy="781.5" r="2.1" fill="#ffff10"/><path d="M2321.5 779 L2325.5 783.5 L2321.5 788" fill="none" stroke="#404040" stroke-width="1.1"/><circle cx="2321.5" cy="783.5" r="2.1" fill="#ffff10"/><path d="M2217.5 779 L2221.5 783.5 L2217.5 788" fill="none" stroke="#404040" stroke-width="1.1"/><circle cx="2217.5" cy="783.5" r="2.1" fill="#20ff20"/><path d="M1781.5 899 L1785.5 903.5 L1781.5 908" fill="none" stroke="#404040" stroke-width="1.1"/><circle cx="1781.5" cy="903.5" r="2.1" fill="#ffff10"/><path d="M1771.5 984 L1775.5 988.5 L1771.5 993" fill="none" stroke="#404040" stroke-width="1.1"/><circle cx="1771.5" cy="988.5" r="2.1" fill="#ffff10"/><path d="M1867.5 919 L1871.5 923.5 L1867.5 928" fill="none" stroke="#404040" stroke-width="1.1"/><circle cx="1867.5" cy="923.5" r="2.1" fill="#20ff20"/><path d="M1867.5 935 L1871.5 939.5 L1867.5 944" fill="none" stroke="#404040" stroke-width="1.1"/><circle cx="1867.5" cy="939.5" r="2.1" fill="#20ff20"/><path d="M1867.5 951 L1871.5 955.5 L1867.5 960" fill="none" stroke="#404040" stroke-width="1.1"/><circle cx="1867.5" cy="955.5" r="2.1" fill="#20ff20"/><path d="M1971.5 935 L1975.5 939.5 L1971.5 944" fill="none" stroke="#404040" stroke-width="1.1"/><circle cx="1971.5" cy="939.5" r="2.1" fill="#ffff10"/><path d="M2032.5 934 L2036.5 938.5 L2032.5 943" fill="none" stroke="#404040" stroke-width="1.1"/><circle cx="2032.5" cy="938.5" r="2.1" fill="#20ff20"/><path d="M2032.5 950 L2036.5 954.5 L2032.5 959" fill="none" stroke="#404040" stroke-width="1.1"/><circle cx="2032.5" cy="954.5" r="2.1" fill="#20ff20"/><path d="M2136.5 942 L2140.5 946.5 L2136.5 951" fill="none" stroke="#404040" stroke-width="1.1"/><circle cx="2136.5" cy="946.5" r="2.1" fill="#ffff10"/><path d="M2321.5 944 L2325.5 948.5 L2321.5 953" fill="none" stroke="#404040" stroke-width="1.1"/><circle cx="2321.5" cy="948.5" r="2.1" fill="#ffff10"/><path d="M2217.5 944 L2221.5 948.5 L2217.5 953" fill="none" stroke="#404040" stroke-width="1.1"/><circle cx="2217.5" cy="948.5" r="2.1" fill="#20ff20"/><path d="M1051.5 1114 L1055.5 1118.5 L1051.5 1123" fill="none" stroke="#404040" stroke-width="1.1"/><circle cx="1051.5" cy="1118.5" r="2.1" fill="#ffff10"/><path d="M947.5 1114 L951.5 1118.5 L947.5 1123" fill="none" stroke="#404040" stroke-width="1.1"/><circle cx="947.5" cy="1118.5" r="2.1" fill="#20ff20"/><path d="M1201.5 1114 L1205.5 1118.5 L1201.5 1123" fill="none" stroke="#404040" stroke-width="1.1"/><circle cx="1201.5" cy="1118.5" r="2.1" fill="#ffff10"/><path d="M1097.5 1114 L1101.5 1118.5 L1097.5 1123" fill="none" stroke="#404040" stroke-width="1.1"/><circle cx="1097.5" cy="1118.5" r="2.1" fill="#20ff20"/><path d="M1356.5 1114 L1360.5 1118.5 L1356.5 1123" fill="none" stroke="#404040" stroke-width="1.1"/><circle cx="1356.5" cy="1118.5" r="2.1" fill="#ffff10"/><path d="M1252.5 1114 L1256.5 1118.5 L1252.5 1123" fill="none" stroke="#404040" stroke-width="1.1"/><circle cx="1252.5" cy="1118.5" r="2.1" fill="#20ff20"/><path d="M1496.5 1114 L1500.5 1118.5 L1496.5 1123" fill="none" stroke="#404040" stroke-width="1.1"/><circle cx="1496.5" cy="1118.5" r="2.1" fill="#ffff10"/><path d="M1392.5 1114 L1396.5 1118.5 L1392.5 1123" fill="none" stroke="#404040" stroke-width="1.1"/><circle cx="1392.5" cy="1118.5" r="2.1" fill="#20ff20"/><path d="M1641.5 1114 L1645.5 1118.5 L1641.5 1123" fill="none" stroke="#404040" stroke-width="1.1"/><circle cx="1641.5" cy="1118.5" r="2.1" fill="#ffff10"/><path d="M1537.5 1114 L1541.5 1118.5 L1537.5 1123" fill="none" stroke="#404040" stroke-width="1.1"/><circle cx="1537.5" cy="1118.5" r="2.1" fill="#20ff20"/><path d="M1776.5 1114 L1780.5 1118.5 L1776.5 1123" fill="none" stroke="#404040" stroke-width="1.1"/><circle cx="1776.5" cy="1118.5" r="2.1" fill="#ffff10"/><path d="M1672.5 1114 L1676.5 1118.5 L1672.5 1123" fill="none" stroke="#404040" stroke-width="1.1"/><circle cx="1672.5" cy="1118.5" r="2.1" fill="#20ff20"/><path d="M1911.5 1114 L1915.5 1118.5 L1911.5 1123" fill="none" stroke="#404040" stroke-width="1.1"/><circle cx="1911.5" cy="1118.5" r="2.1" fill="#ffff10"/><path d="M1807.5 1114 L1811.5 1118.5 L1807.5 1123" fill="none" stroke="#404040" stroke-width="1.1"/><circle cx="1807.5" cy="1118.5" r="2.1" fill="#20ff20"/><path d="M2041.5 1114 L2045.5 1118.5 L2041.5 1123" fill="none" stroke="#404040" stroke-width="1.1"/><circle cx="2041.5" cy="1118.5" r="2.1" fill="#ffff10"/><path d="M1937.5 1114 L1941.5 1118.5 L1937.5 1123" fill="none" stroke="#404040" stroke-width="1.1"/><circle cx="1937.5" cy="1118.5" r="2.1" fill="#20ff20"/><path d="M2176.5 1114 L2180.5 1118.5 L2176.5 1123" fill="none" stroke="#404040" stroke-width="1.1"/><circle cx="2176.5" cy="1118.5" r="2.1" fill="#ffff10"/><path d="M2072.5 1114 L2076.5 1118.5 L2072.5 1123" fill="none" stroke="#404040" stroke-width="1.1"/><circle cx="2072.5" cy="1118.5" r="2.1" fill="#20ff20"/></svg></div></body></html>
